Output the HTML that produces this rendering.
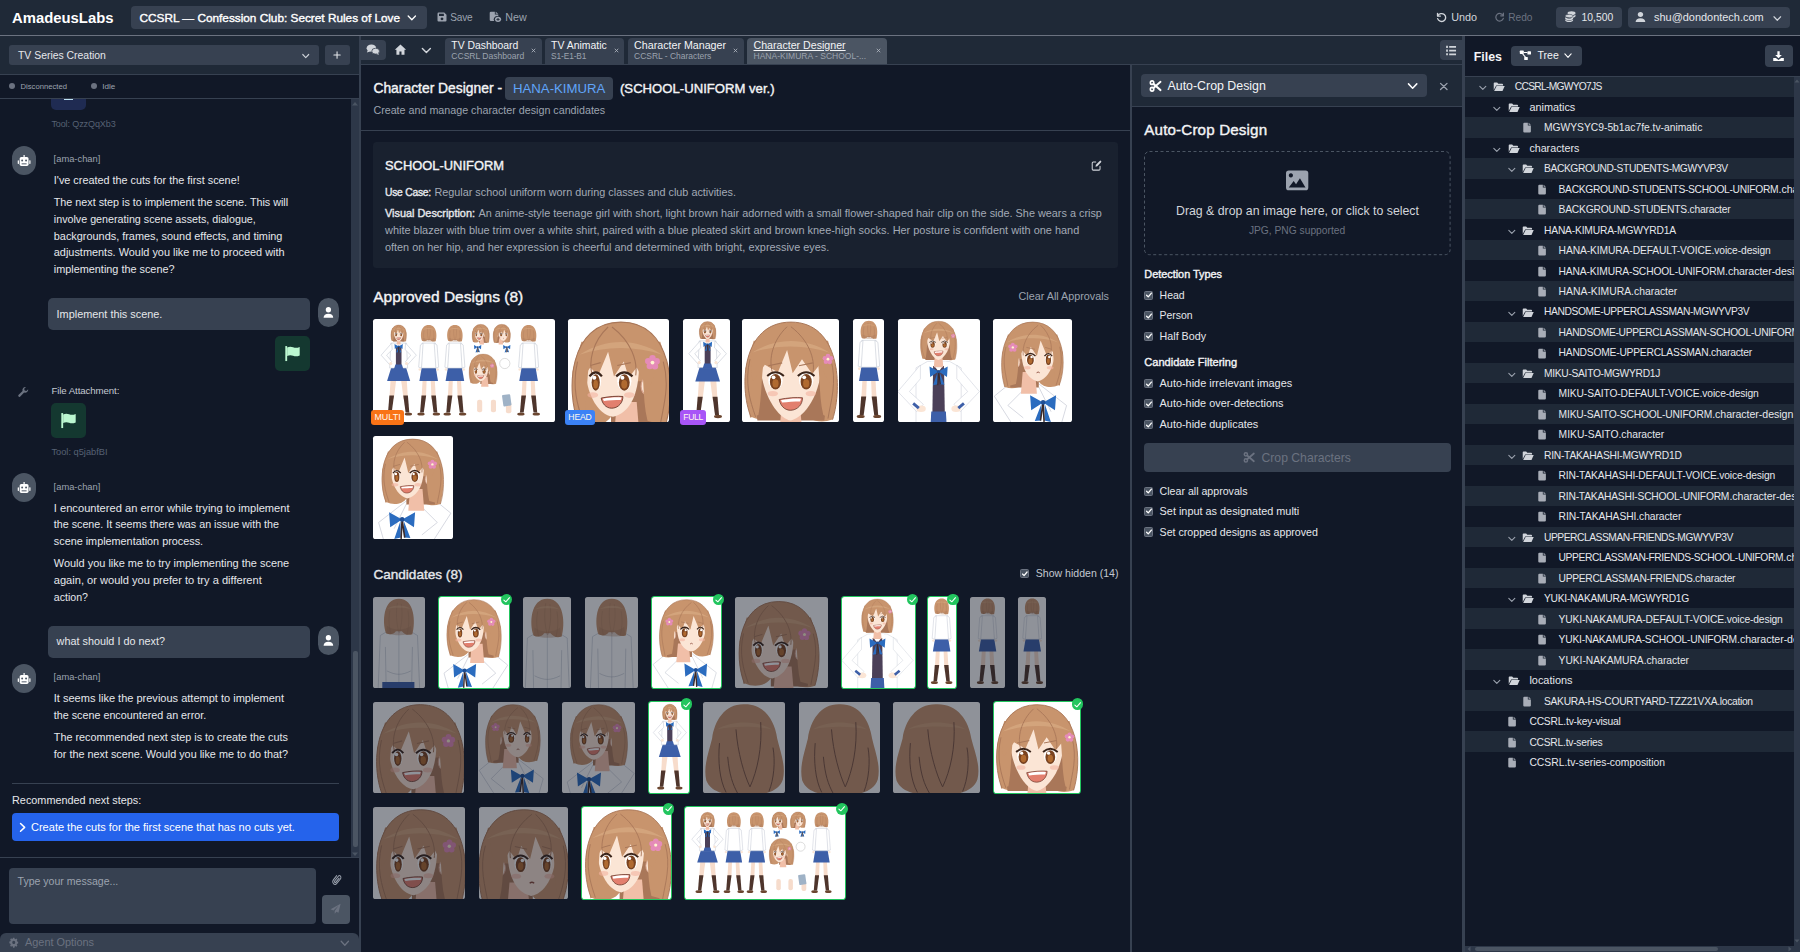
<!DOCTYPE html><html><head><meta charset="utf-8"><title>AmadeusLabs</title><style>
html,body{margin:0;padding:0;}body{width:1800px;height:952px;overflow:hidden;background:#111827;position:relative;font-family:"Liberation Sans",sans-serif;}#r{position:absolute;left:0;top:0;width:1800px;height:952px;overflow:hidden;}#r div,#r svg,#r span{position:absolute;box-sizing:border-box;}#r span{white-space:pre;line-height:1;}#r svg{overflow:visible;}#r .clip{overflow:hidden;}#r .clip svg{overflow:hidden;}
</style></head><body><div id="r">

<div style="left:0px;top:0px;width:1800px;height:35px;background:#1f2937;"></div>
<div style="left:0px;top:35px;width:1800px;height:1px;background:#6b7280;"></div>
<span style="left:12px;top:11.00px;font-size:14.85px;color:#fff;font-weight:700;">AmadeusLabs</span>
<div style="left:131px;top:6px;width:296px;height:23px;background:#374151;border-radius:4px;"></div>
<span style="left:139.5px;top:13.00px;font-size:11.80px;color:#fff;-webkit-text-stroke:0.38px currentColor;">CCSRL — Confession Club: Secret Rules of Love</span>
<svg style="left:405.77px;top:12.42px;color:#fff;" width="11.66" height="11.76" viewBox="0 0 16 16" preserveAspectRatio="none"><path d="M3 5.5 L8 10.5 L13 5.5" fill="none" stroke="currentColor" stroke-width="1.8" stroke-linecap="round" stroke-linejoin="round"/></svg>
<svg style="left:436.40px;top:10.80px;color:#9ca3af;" width="12.00" height="12.00" viewBox="0 0 16 16" preserveAspectRatio="none"><path d="M2 3.5A1.5 1.5 0 0 1 3.5 2H11l3 3v7.5A1.5 1.5 0 0 1 12.500 14h-9A1.5 1.5 0 0 1 2 12.500Z M4 3.500v3h6.500v-3Z M8 8.600a1.900 1.900 0 1 0 .01 0Z" fill="currentColor" fill-rule="evenodd"/></svg>
<span style="left:450.3px;top:13.00px;font-size:10.09px;color:#9ca3af;letter-spacing:-0.194px;">Save</span>
<svg style="left:488.39px;top:11.29px;color:#9ca3af;" width="13.71" height="11.41" viewBox="0 0 16 16" preserveAspectRatio="none"><path d="M2 2.500A1.500 1.500 0 0 1 3.500 1H8v4h4v2.200A4.600 4.600 0 0 0 7.200 14H3.500A1.500 1.500 0 0 1 2 12.500Z M9 1l3 3H9Z" fill="currentColor"/><circle cx="11.700" cy="11.700" r="3.600" fill="currentColor"/><path d="M11.700 9.800v3.800M9.800 11.700h3.800" stroke="#1f2937" stroke-width="1.200"/></svg>
<span style="left:505.3px;top:12.00px;font-size:10.70px;color:#9ca3af;">New</span>
<svg style="left:1435.04px;top:10.56px;color:#d1d5db;" width="12.67" height="12.21" viewBox="0 0 16 16" preserveAspectRatio="none"><path d="M3.200 3v3.600h3.600" fill="none" stroke="currentColor" stroke-width="1.700" stroke-linecap="round" stroke-linejoin="round"/><path d="M3.600 6.300A5.200 5.200 0 1 1 3.300 10" fill="none" stroke="currentColor" stroke-width="1.700" stroke-linecap="round"/></svg>
<span style="left:1451.2px;top:12.00px;font-size:10.80px;color:#d1d5db;letter-spacing:-0.000px;">Undo</span>
<svg style="left:1494.19px;top:10.83px;color:#6b7280;" width="11.73" height="11.69" viewBox="0 0 16 16" preserveAspectRatio="none"><path d="M12.800 3v3.600H9.200" fill="none" stroke="currentColor" stroke-width="1.700" stroke-linecap="round" stroke-linejoin="round"/><path d="M12.400 6.300A5.200 5.200 0 1 0 12.700 10" fill="none" stroke="currentColor" stroke-width="1.700" stroke-linecap="round"/></svg>
<span style="left:1508.2px;top:13.00px;font-size:10.17px;color:#6b7280;">Redo</span>
<div style="left:1556px;top:7px;width:66px;height:21px;background:#374151;border-radius:4px;"></div>
<svg style="left:1563.69px;top:10.26px;color:#d1d5db;" width="12.70" height="12.66" viewBox="0 0 16 16" preserveAspectRatio="none"><ellipse cx="9.500" cy="4" rx="5" ry="2.300" fill="currentColor"/><path d="M4.500 5.600c.8 1.200 2.700 1.900 5 1.900s4.200-.7 5-1.900V7.500c0 1.300-2.200 2.300-5 2.300s-5-1-5-2.300Z" fill="currentColor"/><path d="M1.500 9c.8 1.200 2.700 1.900 5 1.900s4.200-.7 5-1.900v1.700c0 1.300-2.200 2.300-5 2.300s-5-1-5-2.300Z" fill="currentColor"/><path d="M1.500 11.800c.8 1.200 2.700 1.900 5 1.900s4.200-.7 5-1.900v1c0 1.300-2.200 2.300-5 2.300s-5-1-5-2.300Z" fill="currentColor"/><ellipse cx="6.500" cy="7.600" rx="5" ry="2.100" fill="currentColor" stroke="#374151" stroke-width=".7"/></svg>
<span style="left:1581.5px;top:13.00px;font-size:10.37px;color:#e5e7eb;">10,500</span>
<div style="left:1628px;top:7px;width:162px;height:21px;background:#374151;border-radius:4px;"></div>
<svg style="left:1634.18px;top:11.22px;color:#d1d5db;" width="12.93" height="12.12" viewBox="0 0 16 16" preserveAspectRatio="none"><circle cx="8" cy="4.600" r="3.300" fill="currentColor"/><path d="M2 14.500c0-3.200 2.400-5 6-5s6 1.800 6 5Z" fill="currentColor"/></svg>
<span style="left:1654px;top:12.00px;font-size:10.95px;color:#e5e7eb;">shu@dondontech.com</span>
<svg style="left:1772.21px;top:12.62px;color:#d1d5db;" width="10.58" height="11.06" viewBox="0 0 16 16" preserveAspectRatio="none"><path d="M3 5.5 L8 10.5 L13 5.5" fill="none" stroke="currentColor" stroke-width="1.8" stroke-linecap="round" stroke-linejoin="round"/></svg>
<div style="left:0px;top:36px;width:359px;height:38px;background:#1f2937;"></div>
<div style="left:0px;top:74px;width:359px;height:1px;background:#374151;"></div>
<div style="left:9px;top:45px;width:310px;height:20px;background:#374151;border-radius:3px;"></div>
<span style="left:18px;top:51.00px;font-size:10.42px;color:#e5e7eb;">TV Series Creation</span>
<svg style="left:300.75px;top:50.79px;color:#d1d5db;" width="9.49" height="10.12" viewBox="0 0 16 16" preserveAspectRatio="none"><path d="M3 5.5 L8 10.5 L13 5.5" fill="none" stroke="currentColor" stroke-width="1.8" stroke-linecap="round" stroke-linejoin="round"/></svg>
<div style="left:325px;top:45px;width:25px;height:20px;background:#374151;border-radius:3px;"></div>
<svg style="left:331.94px;top:49.84px;color:#e5e7eb;" width="10.12" height="10.12" viewBox="0 0 16 16" preserveAspectRatio="none"><path d="M8 3v10M3 8h10" stroke="currentColor" stroke-width="1.700" stroke-linecap="round"/></svg>
<div style="left:0px;top:75px;width:359px;height:23px;background:#111827;"></div>
<div style="left:0px;top:98px;width:359px;height:1px;background:#374151;"></div>
<div style="left:9px;top:83px;width:6px;height:6px;background:#6b7280;border-radius:3px;"></div>
<span style="left:20.5px;top:83.00px;font-size:7.68px;color:#9ca3af;">Disconnected</span>
<div style="left:91px;top:83px;width:5.5px;height:5.5px;background:#6b7280;border-radius:3px;"></div>
<span style="left:102.3px;top:83.00px;font-size:8.06px;color:#9ca3af;">Idle</span>
<div style="left:51px;top:99px;width:35.2px;height:11px;background:#1f2b52;border-radius:0 0 5px 5px;"></div>
<div style="left:63.8px;top:99px;width:9.2px;height:1.2px;background:#bfe3f5;"></div>
<span style="left:51.4px;top:120.00px;font-size:9.02px;color:#566173;letter-spacing:-0.105px;">Tool: QzzQqXb3</span>
<div style="left:12px;top:146px;width:24px;height:29.4px;background:#4b5563;border-radius:12px;"></div>
<svg style="left:16.89px;top:154.04px;color:#fff;" width="14.22" height="15.30" viewBox="0 0 16 16" preserveAspectRatio="none"><path d="M7.300 1h1.400v2.200H7.300Z" fill="currentColor"/><rect x="3" y="3.200" width="10" height="9.300" rx="1.800" fill="currentColor"/><rect x=".8" y="6.500" width="1.400" height="4" rx=".5" fill="currentColor"/><rect x="13.800" y="6.500" width="1.400" height="4" rx=".5" fill="currentColor"/><circle cx="5.800" cy="6.800" r="1.100" fill="#4b5563"/><circle cx="10.200" cy="6.800" r="1.100" fill="#4b5563"/><rect x="5.200" y="9.800" width="5.600" height="1" fill="#4b5563"/></svg>
<span style="left:53.6px;top:155.00px;font-size:9.36px;color:#9ca3af;letter-spacing:-0.000px;">[ama-chan]</span>
<span style="left:53.8px;top:175.00px;font-size:10.85px;color:#e5e7eb;letter-spacing:-0.000px;">I&#x27;ve created the cuts for the first scene!</span>
<span style="left:53.8px;top:197.00px;font-size:10.77px;color:#e5e7eb;letter-spacing:0.000px;">The next step is to implement the scene. This will</span>
<span style="left:53.8px;top:214.00px;font-size:10.72px;color:#e5e7eb;">involve generating scene assets, dialogue,</span>
<span style="left:53.8px;top:231.00px;font-size:10.90px;color:#e5e7eb;">backgrounds, frames, sound effects, and timing</span>
<span style="left:53.8px;top:247.00px;font-size:10.91px;color:#e5e7eb;">adjustments. Would you like me to proceed with</span>
<span style="left:53.8px;top:264.00px;font-size:10.86px;color:#e5e7eb;">implementing the scene?</span>
<div style="left:48px;top:298px;width:262px;height:32px;background:#374151;border-radius:5px;"></div>
<span style="left:56.6px;top:309.00px;font-size:10.89px;color:#e5e7eb;letter-spacing:-0.000px;">Implement this scene.</span>
<div style="left:317.8px;top:297.7px;width:21.2px;height:29.6px;background:#4b5563;border-radius:10.6px;"></div>
<svg style="left:322.10px;top:306.44px;color:#fff;" width="12.80" height="13.09" viewBox="0 0 16 16" preserveAspectRatio="none"><circle cx="8" cy="4.600" r="3.300" fill="currentColor"/><path d="M2 14.500c0-3.200 2.400-5 6-5s6 1.800 6 5Z" fill="currentColor"/></svg>
<div style="left:275px;top:336px;width:35px;height:35px;background:#143830;border-radius:5px;"></div>
<svg style="left:283.30px;top:344.93px;color:#bbf7d0;" width="18.43" height="17.14" viewBox="0 0 16 16" preserveAspectRatio="none"><path d="M2 1h1.600v14H2Z" fill="currentColor"/><path d="M3.600 2.300c2-1 3.600-.8 5.200-.2s3.200.9 5.700-.3v8c-2.500 1.200-4.100.9-5.700.3s-3.200-.8-5.200.2Z" fill="currentColor"/></svg>
<svg style="left:16.78px;top:386.04px;color:#6b7280;" width="12.17" height="12.26" viewBox="0 0 16 16" preserveAspectRatio="none"><path d="M14.700 4.200a4 4 0 0 1-5.300 4.400L4 14a1.500 1.500 0 0 1-2.100-2.100l5.400-5.400A4 4 0 0 1 11.800 1.300L9.500 3.600l.5 2.400 2.400.5Z" fill="currentColor"/></svg>
<span style="left:51.4px;top:386.00px;font-size:9.70px;color:#c3c8d1;letter-spacing:-0.097px;">File Attachment:</span>
<div style="left:51px;top:403px;width:35px;height:35px;background:#143830;border-radius:5px;"></div>
<svg style="left:59.30px;top:411.93px;color:#bbf7d0;" width="18.43" height="17.14" viewBox="0 0 16 16" preserveAspectRatio="none"><path d="M2 1h1.600v14H2Z" fill="currentColor"/><path d="M3.600 2.300c2-1 3.600-.8 5.200-.2s3.200.9 5.700-.3v8c-2.500 1.200-4.100.9-5.700.3s-3.200-.8-5.200.2Z" fill="currentColor"/></svg>
<span style="left:51.4px;top:448.00px;font-size:9.28px;color:#566173;">Tool: q5jabfBI</span>
<div style="left:12px;top:473px;width:24px;height:29.4px;background:#4b5563;border-radius:12px;"></div>
<svg style="left:16.89px;top:481.04px;color:#fff;" width="14.22" height="15.30" viewBox="0 0 16 16" preserveAspectRatio="none"><path d="M7.300 1h1.400v2.200H7.300Z" fill="currentColor"/><rect x="3" y="3.200" width="10" height="9.300" rx="1.800" fill="currentColor"/><rect x=".8" y="6.500" width="1.400" height="4" rx=".5" fill="currentColor"/><rect x="13.800" y="6.500" width="1.400" height="4" rx=".5" fill="currentColor"/><circle cx="5.800" cy="6.800" r="1.100" fill="#4b5563"/><circle cx="10.200" cy="6.800" r="1.100" fill="#4b5563"/><rect x="5.200" y="9.800" width="5.600" height="1" fill="#4b5563"/></svg>
<span style="left:53.6px;top:483.00px;font-size:9.36px;color:#9ca3af;letter-spacing:-0.000px;">[ama-chan]</span>
<span style="left:53.8px;top:503.00px;font-size:11.13px;color:#e5e7eb;letter-spacing:0.004px;">I encountered an error while trying to implement</span>
<span style="left:53.8px;top:519.00px;font-size:10.73px;color:#e5e7eb;">the scene. It seems there was an issue with the</span>
<span style="left:53.8px;top:536.00px;font-size:10.84px;color:#e5e7eb;">scene implementation process.</span>
<span style="left:53.8px;top:558.00px;font-size:10.96px;color:#e5e7eb;">Would you like me to try implementing the scene</span>
<span style="left:53.8px;top:575.00px;font-size:11.08px;color:#e5e7eb;">again, or would you prefer to try a different</span>
<span style="left:53.8px;top:592.00px;font-size:10.62px;color:#e5e7eb;">action?</span>
<div style="left:48px;top:626px;width:262px;height:32px;background:#374151;border-radius:5px;"></div>
<span style="left:56.6px;top:636.00px;font-size:10.84px;color:#e5e7eb;letter-spacing:0.000px;">what should I do next?</span>
<div style="left:317.8px;top:625.7px;width:21.2px;height:29.6px;background:#4b5563;border-radius:10.6px;"></div>
<svg style="left:322.10px;top:634.44px;color:#fff;" width="12.80" height="13.09" viewBox="0 0 16 16" preserveAspectRatio="none"><circle cx="8" cy="4.600" r="3.300" fill="currentColor"/><path d="M2 14.500c0-3.200 2.400-5 6-5s6 1.800 6 5Z" fill="currentColor"/></svg>
<div style="left:12px;top:664px;width:24px;height:29.4px;background:#4b5563;border-radius:12px;"></div>
<svg style="left:16.89px;top:672.04px;color:#fff;" width="14.22" height="15.30" viewBox="0 0 16 16" preserveAspectRatio="none"><path d="M7.300 1h1.400v2.200H7.300Z" fill="currentColor"/><rect x="3" y="3.200" width="10" height="9.300" rx="1.800" fill="currentColor"/><rect x=".8" y="6.500" width="1.400" height="4" rx=".5" fill="currentColor"/><rect x="13.800" y="6.500" width="1.400" height="4" rx=".5" fill="currentColor"/><circle cx="5.800" cy="6.800" r="1.100" fill="#4b5563"/><circle cx="10.200" cy="6.800" r="1.100" fill="#4b5563"/><rect x="5.200" y="9.800" width="5.600" height="1" fill="#4b5563"/></svg>
<span style="left:53.6px;top:673.00px;font-size:9.36px;color:#9ca3af;letter-spacing:-0.000px;">[ama-chan]</span>
<span style="left:53.8px;top:693.00px;font-size:11.03px;color:#e5e7eb;letter-spacing:-0.000px;">It seems like the previous attempt to implement</span>
<span style="left:53.8px;top:710.00px;font-size:10.75px;color:#e5e7eb;">the scene encountered an error.</span>
<span style="left:53.8px;top:732.00px;font-size:10.80px;color:#e5e7eb;">The recommended next step is to create the cuts</span>
<span style="left:53.8px;top:749.00px;font-size:10.82px;color:#e5e7eb;">for the next scene. Would you like me to do that?</span>
<div style="left:12px;top:783px;width:327px;height:1px;background:#374151;"></div>
<span style="left:12px;top:795.00px;font-size:10.86px;color:#e5e7eb;">Recommended next steps:</span>
<div style="left:12px;top:813px;width:327px;height:28px;background:#2563eb;border-radius:4px;"></div>
<svg style="left:16.21px;top:820.93px;color:#fff;" width="13.18" height="12.75" viewBox="0 0 16 16" preserveAspectRatio="none"><path d="M5.5 3 L10.5 8 L5.5 13" fill="none" stroke="currentColor" stroke-width="1.8" stroke-linecap="round" stroke-linejoin="round"/></svg>
<span style="left:31px;top:822.00px;font-size:11.02px;color:#fff;">Create the cuts for the first scene that has no cuts yet.</span>
<div style="left:351px;top:99px;width:8px;height:759px;background:#2d3748;"></div>
<div style="left:353px;top:651px;width:4.5px;height:196px;background:#4b5563;border-radius:2px;"></div>
<svg style="left:351px;top:101px;" width="8" height="5" viewBox="0 0 8 5"><path d="M1 4.500 4 1l3 3.500Z" fill="#4b5563"/></svg>
<svg style="left:351px;top:852px;" width="8" height="5" viewBox="0 0 8 5"><path d="M1 .5 4 4l3-3.500Z" fill="#4b5563"/></svg>
<div style="left:0px;top:857px;width:359px;height:1px;background:#374151;"></div>
<div style="left:9px;top:868px;width:307px;height:56px;background:#374151;border-radius:4px;"></div>
<span style="left:17.6px;top:876.00px;font-size:10.54px;color:#9ca3af;letter-spacing:-0.000px;">Type your message...</span>
<svg style="left:331.63px;top:873.96px;color:#9ca3af;" width="9.83" height="12.36" viewBox="0 0 16 16" preserveAspectRatio="none"><path d="M11.500 5.500 6.300 10.700a1.300 1.300 0 0 1-1.900-1.900l6-6a2.400 2.400 0 0 1 3.400 3.400l-6.300 6.300a3.600 3.600 0 0 1-5.100-5.100l5.200-5.200" fill="none" stroke="currentColor" stroke-width="1.500" stroke-linecap="round"/></svg>
<div style="left:322px;top:895px;width:28px;height:29px;background:#4b5563;border-radius:4px;"></div>
<svg style="left:330.41px;top:903.27px;color:#6b7280;" width="11.07" height="11.68" viewBox="0 0 16 16" preserveAspectRatio="none"><path d="M15.300 1 .8 8.600l4.200 1.700 7.400-6.800-5.600 7.600v3.600l2.500-2.800 3 1.300Z" fill="currentColor"/></svg>
<div style="left:0px;top:933px;width:359px;height:19px;background:#374151;border-radius:6px 6px 0 0;"></div>
<svg style="left:9.24px;top:937.32px;color:#6b7280;" width="9.51" height="10.81" viewBox="0 0 16 16" preserveAspectRatio="none"><path d="M6.800 1h2.400l.4 1.800 1.200.5 1.600-1 1.700 1.700-1 1.600.5 1.200 1.800.4v2.400l-1.800.4-.5 1.200 1 1.600-1.700 1.700-1.600-1-1.200.5-.4 1.800H6.800l-.4-1.800-1.200-.5-1.600 1-1.700-1.700 1-1.600-.5-1.200L.6 9.200V6.800l1.800-.4.5-1.200-1-1.600 1.700-1.700 1.600 1 1.200-.5ZM8 5.500A2.500 2.500 0 1 0 8.010 5.500Z" fill="currentColor" fill-rule="evenodd"/></svg>
<span style="left:25px;top:937.00px;font-size:10.90px;color:#6b7280;">Agent Options</span>
<svg style="left:339.47px;top:937.35px;color:#6b7280;" width="11.66" height="12.71" viewBox="0 0 16 16" preserveAspectRatio="none"><path d="M3 5.5 L8 10.5 L13 5.5" fill="none" stroke="currentColor" stroke-width="1.8" stroke-linecap="round" stroke-linejoin="round"/></svg>
<div style="left:359px;top:36px;width:2px;height:916px;background:#374151;"></div>
<div style="left:361px;top:36px;width:1101px;height:28px;background:#1f2937;"></div>
<div style="left:361px;top:64px;width:1101px;height:1px;background:#374151;"></div>
<div style="left:361px;top:40px;width:25px;height:20px;background:#374151;border-radius:0 4px 4px 0;"></div>
<svg style="left:366.10px;top:43.42px;color:#d1d5db;" width="13.77" height="13.29" viewBox="0 0 16 16" preserveAspectRatio="none"><ellipse cx="6.300" cy="6.200" rx="5.600" ry="4.300" fill="currentColor"/><path d="M2.200 8.500 1 11.500l3.700-1.200Z" fill="currentColor"/><ellipse cx="11.200" cy="9.800" rx="4.500" ry="3.500" fill="currentColor" stroke="#374151" stroke-width=".9"/><path d="M13.800 12 15.200 14.300l-3.400-1Z" fill="currentColor"/></svg>
<svg style="left:393.89px;top:43.18px;color:#d1d5db;" width="12.91" height="13.51" viewBox="0 0 16 16" preserveAspectRatio="none"><path d="M8 1.800 1 8h2v6h3.700v-4h2.600v4H13V8h2Z" fill="currentColor"/></svg>
<svg style="left:419.93px;top:44.48px;color:#d1d5db;" width="12.75" height="12.94" viewBox="0 0 16 16" preserveAspectRatio="none"><path d="M3 5.5 L8 10.5 L13 5.5" fill="none" stroke="currentColor" stroke-width="1.8" stroke-linecap="round" stroke-linejoin="round"/></svg>
<div style="left:445px;top:38px;width:96.70000000000005px;height:26px;background:#374151;border-radius:4px 4px 0 0;"></div>
<span style="left:451.3px;top:41.00px;font-size:10.40px;color:#f3f4f6;">TV Dashboard</span>
<span style="left:451.3px;top:52.00px;font-size:8.55px;color:#9ca3af;">CCSRL Dashboard</span>
<svg style="left:531.1px;top:47.6px;" width="5" height="5" viewBox="0 0 10 10"><path d="M1.5 1.5 8.5 8.5M8.5 1.5 1.5 8.5" stroke="#b4bac4" stroke-width="1.600" fill="none"/></svg>
<div style="left:544.8px;top:38px;width:79.70000000000005px;height:26px;background:#374151;border-radius:4px 4px 0 0;"></div>
<span style="left:551.0999999999999px;top:41.00px;font-size:10.44px;color:#f3f4f6;">TV Animatic</span>
<span style="left:551.0999999999999px;top:52.00px;font-size:8.34px;color:#9ca3af;letter-spacing:-0.118px;">S1-E1-B1</span>
<svg style="left:613.9px;top:47.6px;" width="5" height="5" viewBox="0 0 10 10"><path d="M1.5 1.5 8.5 8.5M8.5 1.5 1.5 8.5" stroke="#b4bac4" stroke-width="1.600" fill="none"/></svg>
<div style="left:627.8px;top:38px;width:115.80000000000007px;height:26px;background:#374151;border-radius:4px 4px 0 0;"></div>
<span style="left:634.0999999999999px;top:40.00px;font-size:10.68px;color:#f3f4f6;">Character Manager</span>
<span style="left:634.0999999999999px;top:52.00px;font-size:8.46px;color:#9ca3af;">CCSRL - Characters</span>
<svg style="left:733.0px;top:47.6px;" width="5" height="5" viewBox="0 0 10 10"><path d="M1.5 1.5 8.5 8.5M8.5 1.5 1.5 8.5" stroke="#b4bac4" stroke-width="1.600" fill="none"/></svg>
<div style="left:747.2px;top:38px;width:139.5px;height:26px;background:#4b5563;border-radius:4px 4px 0 0;"></div>
<span style="left:753.5px;top:40.00px;font-size:10.64px;color:#f3f4f6;text-decoration:underline;text-underline-offset:1px;">Character Designer</span>
<span style="left:753.5px;top:52.00px;font-size:8.53px;color:#9ca3af;">HANA-KIMURA - SCHOOL-...</span>
<svg style="left:876.1px;top:47.6px;" width="5" height="5" viewBox="0 0 10 10"><path d="M1.5 1.5 8.5 8.5M8.5 1.5 1.5 8.5" stroke="#b4bac4" stroke-width="1.600" fill="none"/></svg>
<div style="left:1440px;top:40px;width:22px;height:20px;background:#374151;border-radius:4px 0 0 4px;"></div>
<svg style="left:1444.86px;top:42.55px;color:#d1d5db;" width="12.18" height="15.20" viewBox="0 0 16 16" preserveAspectRatio="none"><path d="M1.500 3h2.300v2.200H1.500Zm4 .2h9v1.800h-9ZM1.500 6.900h2.300v2.200H1.500Zm4 .2h9v1.800h-9ZM1.500 10.800h2.300V13H1.500Zm4 .2h9v1.800h-9Z" fill="currentColor"/></svg>
<span style="left:373.4px;top:82.00px;font-size:13.86px;color:#f3f4f6;-webkit-text-stroke:0.38px currentColor;">Character Designer -</span>
<div style="left:505px;top:77px;width:108px;height:23px;background:#374151;border-radius:4px;"></div>
<span style="left:513px;top:82.00px;font-size:13.20px;color:#60a5fa;letter-spacing:0.000px;">HANA-KIMURA</span>
<span style="left:620px;top:82.00px;font-size:13.13px;color:#f3f4f6;-webkit-text-stroke:0.38px currentColor;">(SCHOOL-UNIFORM ver.)</span>
<span style="left:373.4px;top:105.00px;font-size:10.72px;color:#9ca3af;letter-spacing:-0.000px;">Create and manage character design candidates</span>
<div style="left:361px;top:130px;width:769px;height:1px;background:#374151;"></div>
<div style="left:373px;top:142px;width:744.5px;height:126px;background:#19212f;border-radius:3.5px;"></div>
<span style="left:385px;top:160.00px;font-size:12.91px;color:#f3f4f6;-webkit-text-stroke:0.38px currentColor;">SCHOOL-UNIFORM</span>
<svg style="left:1090.69px;top:160.36px;color:#d1d5db;" width="10.86" height="11.31" viewBox="0 0 16 16" preserveAspectRatio="none"><path d="M12.800 1.300a1.400 1.400 0 0 1 2 2L9.300 8.800l-2.700.7.700-2.700Z" fill="currentColor"/><path d="M7 2.800H3.300A1.500 1.500 0 0 0 1.800 4.300v8.500a1.500 1.500 0 0 0 1.500 1.500h8.500a1.500 1.500 0 0 0 1.500-1.500V9" fill="none" stroke="currentColor" stroke-width="1.500" stroke-linecap="round"/></svg>
<span style="left:385px;top:188.00px;font-size:10.28px;color:#e5e7eb;-webkit-text-stroke:0.38px currentColor;letter-spacing:-0.221px;">Use Case:</span>
<span style="left:434.4px;top:187.00px;font-size:10.84px;color:#a3aab6;">Regular school uniform worn during classes and club activities.</span>
<span style="left:385px;top:208.00px;font-size:10.90px;color:#e5e7eb;-webkit-text-stroke:0.38px currentColor;">Visual Description:</span>
<span style="left:478.4px;top:208.00px;font-size:10.86px;color:#a3aab6;">An anime-style teenage girl with short, light brown hair adorned with a small flower-shaped hair clip on the side. She wears a crisp</span>
<span style="left:385px;top:225.00px;font-size:10.94px;color:#a3aab6;letter-spacing:0.000px;">white blazer with blue trim over a white shirt, paired with a blue pleated skirt and brown knee-high socks. Her posture is confident with one hand</span>
<span style="left:385px;top:242.00px;font-size:10.86px;color:#a3aab6;">often on her hip, and her expression is cheerful and determined with bright, expressive eyes.</span>
<span style="left:373.2px;top:289.00px;font-size:15.53px;color:#f3f4f6;-webkit-text-stroke:0.38px currentColor;">Approved Designs (8)</span>
<span style="left:1018.6px;top:291.00px;font-size:10.78px;color:#9ca3af;">Clear All Approvals</span>
<div class="clip" style="left:373.4px;top:318.5px;width:182px;height:103.6px;background:#fff;border-radius:2.600px;"><svg style="left:0;top:0" width="182" height="103.6" viewBox="0 0 182 103.6"><path fill="#f7dccb" d="M23.8 56.5L17.8 56.5L16.4 79.7L20.8 79.7Z"/><path fill="#4e352c" d="M21.0 76.4L16.4 76.4L15.0 93.6L18.7 93.6Z"/><ellipse cx="15.9" cy="95.0" rx="3.7" ry="1.6" fill="#6b4630"/><path fill="#f7dccb" d="M27.5 56.5L33.5 56.5L34.9 79.7L30.5 79.7Z"/><path fill="#4e352c" d="M30.3 76.4L34.9 76.4L36.3 93.6L32.6 93.6Z"/><ellipse cx="35.4" cy="95.0" rx="3.7" ry="1.6" fill="#6b4630"/><path fill="#3d5fa8" d="M19.2 45.4L32.1 45.4L37.2 62.1L14.1 62.1Z"/><path fill="#fff" stroke="#c5c9d4" stroke-width="0.6" d="M17.8 24.1L33.5 24.1L34.6 49.1L16.7 49.1Z"/><rect x="22.9" y="26.9" width="5.6" height="19.4" fill="#4b4058"/><path fill="#3d5fa8" d="M22.4 45.4L28.9 45.4L30.3 50.1L21.0 50.1Z"/><path fill="#fff" stroke="#c5c9d4" stroke-width="0.6" d="M18.7 24.1L8.1 36.2L16.4 45.4L18.7 42.6L13.6 36.2L19.2 30.6Z"/><circle cx="17.8" cy="44.5" r="1.5" fill="#fbe5d5"/><path fill="#fff" stroke="#c5c9d4" stroke-width="0.6" d="M32.6 24.1L43.3 36.2L34.9 45.4L32.6 42.6L37.7 36.2L32.1 30.6Z"/><circle cx="33.5" cy="44.5" r="1.5" fill="#fbe5d5"/><path fill="#2b6cbf" d="M25.7 27.4L21.5 25.0L21.8 29.9ZM25.7 27.4L29.8 25.0L29.5 29.9ZM25.2 27.8L23.2 33.6L25.2 33.2ZM26.2 27.8L28.3 33.4L26.3 33.2Z"/><path d="M25.7 27.4L25.3 33.6M25.7 27.4L26.5 33.2" stroke="#3b2a2a" stroke-width="0.6" fill="none"/><circle cx="25.7" cy="27.4" r="0.8" fill="#1f4f96"/><g><path fill="#c8946d" d="M19.0 21.8C16.9 16.9 17.4 6.0 25.7 6.0C33.9 6.0 34.4 16.9 32.7 22.3C30.3 23.1 28.5 22.3 27.2 20.9L24.1 20.9C23.2 22.3 21.0 22.8 19.0 21.8Z"/><path fill="#a97759" d="M19.1 15.3L32.2 15.3L31.3 22.5L20.1 22.5Z"/><path fill="#f1bfa8" d="M24.1 20.1L27.2 20.1L27.7 25.6L23.6 25.6Z"/><path fill="#fbe5d5" d="M20.5 10.6C20.1 17.2 23.3 22.1 25.7 22.5C28.2 21.8 31.3 17.6 30.8 10.6Z"/><path fill="#c8946d" d="M29.6 9.1C30.8 13.7 30.2 17.6 31.1 21.5L32.7 22.3L33.3 13.7L31.9 9.1Z"/><path fill="#c8946d" d="M21.8 9.1C20.5 13.7 21.0 17.6 20.2 21.5L18.8 22.0L18.0 13.7L19.4 9.1Z"/><path fill="#c8946d" d="M19.3 15.9C18.2 10.6 20.4 6.4 25.7 6.4C31.0 6.4 33.1 10.6 32.4 16.5L30.5 13.1L29.2 14.7L27.5 12.2L26.0 14.5L25.0 10.6L23.5 14.4L21.3 13.1Z"/><path fill="#ddb088" opacity=".55" d="M19.1 11.1C23.3 8.5 28.0 8.5 32.2 11.1C28.0 9.7 23.3 9.7 19.1 11.1Z"/><path fill="none" stroke="#a97759" stroke-width="0.3" d="M25.0 6.7C22.6 9.1 21.9 12.2 22.6 14.4M25.7 6.7C28.8 9.1 29.7 12.2 29.4 14.4M32.4 12.2C33.4 16.1 32.4 19.2 31.9 22.1M18.8 12.2C17.9 16.1 18.8 19.2 19.7 21.8M19.0 21.8C16.9 16.9 17.4 6.0 25.7 6.0C33.9 6.0 34.4 16.9 32.7 22.3"/><ellipse cx="23.1" cy="15.8" rx="1.2" ry="1.5" fill="#fff"/><ellipse cx="23.1" cy="16.0" rx="0.9" ry="1.3" fill="#7a4320"/><ellipse cx="23.1" cy="16.2" rx="0.5" ry="0.7" fill="#b06a30"/><path d="M21.7 15.0Q23.1 13.7 24.5 15.0" stroke="#3a241a" stroke-width="0.5" fill="none"/><circle cx="22.8" cy="15.2" r="0.3" fill="#fff"/><path d="M21.9 13.3L24.2 12.8" stroke="#a97759" stroke-width="0.4" fill="none"/><ellipse cx="28.2" cy="15.8" rx="1.2" ry="1.5" fill="#fff"/><ellipse cx="28.2" cy="16.0" rx="0.9" ry="1.3" fill="#7a4320"/><ellipse cx="28.2" cy="16.2" rx="0.5" ry="0.7" fill="#b06a30"/><path d="M26.8 15.0Q28.2 13.7 29.6 15.0" stroke="#3a241a" stroke-width="0.5" fill="none"/><circle cx="27.9" cy="15.2" r="0.3" fill="#fff"/><path d="M27.0 13.3L29.3 12.8" stroke="#a97759" stroke-width="0.4" fill="none"/><ellipse cx="22.6" cy="17.9" rx="0.9" ry="0.4" fill="#f3b3a0" opacity=".6"/><ellipse cx="29.0" cy="17.9" rx="0.9" ry="0.4" fill="#f3b3a0" opacity=".6"/><path fill="#e27f6e" stroke="#6b3a2c" stroke-width="0.3" d="M23.7 18.9C25.1 18.6 26.6 18.5 27.6 18.6C27.6 21.0 24.3 21.8 23.7 18.9Z"/><path fill="#fff" d="M24.0 19.0C25.1 18.8 26.6 18.7 27.4 18.8L27.2 19.3C26.2 19.3 25.1 19.3 24.2 19.5Z"/></g><path fill="#f7dccb" d="M53.8 56.5L49.9 56.5L48.5 79.7L52.9 79.7Z"/><path fill="#4e352c" d="M53.1 76.4L48.5 76.4L47.1 93.6L50.8 93.6Z"/><ellipse cx="48.0" cy="95.0" rx="3.7" ry="1.6" fill="#6b4630"/><path fill="#f7dccb" d="M57.5 56.5L61.5 56.5L62.9 79.7L58.5 79.7Z"/><path fill="#4e352c" d="M58.3 76.4L62.9 76.4L64.3 93.6L60.6 93.6Z"/><ellipse cx="63.4" cy="95.0" rx="3.7" ry="1.6" fill="#6b4630"/><path fill="#3d5fa8" d="M49.2 45.4L62.2 45.4L65.0 62.1L46.4 62.1Z"/><path fill="#fff" stroke="#c5c9d4" stroke-width="0.6" d="M49.0 24.1L62.4 24.1L63.5 49.1L47.9 49.1Z"/><path fill="#fff" stroke="#c5c9d4" stroke-width="0.6" d="M50.1 24.1L47.4 26.0L45.7 48.2L48.5 49.1Z"/><circle cx="46.8" cy="50.5" r="1.3" fill="#fbe5d5"/><path fill="#fff" stroke="#c5c9d4" stroke-width="0.6" d="M61.2 24.1L64.0 26.0L65.7 48.2L62.9 49.1Z"/><circle cx="64.6" cy="50.5" r="1.3" fill="#fbe5d5"/><g><path fill="#c8946d" d="M49.0 21.8C47.0 16.9 47.4 6.0 55.7 6.0C63.9 6.0 64.4 16.9 62.7 22.3C60.4 23.1 58.5 22.3 57.2 20.9L54.1 20.9C53.2 22.3 51.0 22.8 49.0 21.8Z"/><path fill="#a97759" opacity=".35" d="M49.5 18.4C52.6 20.7 58.8 20.7 61.9 18.4L62.5 22.1C58.8 23.1 52.6 23.1 49.2 21.8Z"/><path fill="none" stroke="#a97759" stroke-width="0.3" d="M54.9 7.8C53.8 13.7 54.8 18.4 55.7 21.5M56.9 8.3C57.9 13.7 56.9 18.4 56.0 21.5M51.0 11.4C50.1 16.1 50.7 19.2 51.5 22.1M60.4 11.4C61.3 16.1 60.7 19.2 59.9 22.5"/><path fill="#ddb088" opacity=".5" d="M49.5 10.6C53.4 8.6 58.0 8.6 61.9 10.6C58.0 9.9 53.4 9.9 49.5 10.6Z"/></g><path fill="#f7dccb" d="M80.0 56.5L76.1 56.5L74.7 79.7L79.1 79.7Z"/><path fill="#4e352c" d="M79.3 76.4L74.7 76.4L73.3 93.6L77.0 93.6Z"/><ellipse cx="74.2" cy="95.0" rx="3.7" ry="1.6" fill="#6b4630"/><path fill="#f7dccb" d="M83.8 56.5L87.7 56.5L89.1 79.7L84.7 79.7Z"/><path fill="#4e352c" d="M84.5 76.4L89.1 76.4L90.5 93.6L86.8 93.6Z"/><ellipse cx="89.6" cy="95.0" rx="3.7" ry="1.6" fill="#6b4630"/><path fill="#3d5fa8" d="M75.4 45.4L88.4 45.4L91.2 62.1L72.6 62.1Z"/><path fill="#fff" stroke="#c5c9d4" stroke-width="0.6" d="M75.2 24.1L88.6 24.1L89.7 49.1L74.1 49.1Z"/><path fill="#fff" stroke="#c5c9d4" stroke-width="0.6" d="M76.3 24.1L73.6 26.0L71.9 48.2L74.7 49.1Z"/><circle cx="73.0" cy="50.5" r="1.3" fill="#fbe5d5"/><path fill="#fff" stroke="#c5c9d4" stroke-width="0.6" d="M87.5 24.1L90.2 26.0L91.9 48.2L89.1 49.1Z"/><circle cx="90.8" cy="50.5" r="1.3" fill="#fbe5d5"/><g><path fill="#c8946d" d="M75.2 21.8C73.2 16.9 73.7 6.0 81.9 6.0C90.1 6.0 90.6 16.9 88.9 22.3C86.6 23.1 84.7 22.3 83.5 20.9L80.3 20.9C79.4 22.3 77.2 22.8 75.2 21.8Z"/><path fill="#a97759" opacity=".35" d="M75.7 18.4C78.8 20.7 85.0 20.7 88.1 18.4L88.7 22.1C85.0 23.1 78.8 23.1 75.4 21.8Z"/><path fill="none" stroke="#a97759" stroke-width="0.3" d="M81.1 7.8C80.0 13.7 81.0 18.4 81.9 21.5M83.1 8.3C84.1 13.7 83.1 18.4 82.2 21.5M77.2 11.4C76.3 16.1 76.9 19.2 77.7 22.1M86.6 11.4C87.5 16.1 86.9 19.2 86.1 22.5"/><path fill="#ddb088" opacity=".5" d="M75.7 10.6C79.6 8.6 84.2 8.6 88.1 10.6C84.2 9.9 79.6 9.9 75.7 10.6Z"/></g><path fill="#f7dccb" d="M153.8 56.5L149.8 56.5L148.4 79.7L152.8 79.7Z"/><path fill="#4e352c" d="M153.0 76.4L148.4 76.4L147.0 93.6L150.7 93.6Z"/><ellipse cx="147.9" cy="95.0" rx="3.7" ry="1.6" fill="#6b4630"/><path fill="#f7dccb" d="M157.5 56.5L161.4 56.5L162.8 79.7L158.4 79.7Z"/><path fill="#4e352c" d="M158.2 76.4L162.8 76.4L164.2 93.6L160.5 93.6Z"/><ellipse cx="163.3" cy="95.0" rx="3.7" ry="1.6" fill="#6b4630"/><path fill="#3d5fa8" d="M149.1 45.4L162.1 45.4L164.9 62.1L146.3 62.1Z"/><path fill="#fff" stroke="#c5c9d4" stroke-width="0.6" d="M148.9 24.1L162.3 24.1L163.4 49.1L147.8 49.1Z"/><path fill="#fff" stroke="#c5c9d4" stroke-width="0.6" d="M150.1 24.1L147.3 26.0L145.6 48.2L148.4 49.1Z"/><circle cx="146.7" cy="50.5" r="1.3" fill="#fbe5d5"/><path fill="#fff" stroke="#c5c9d4" stroke-width="0.6" d="M161.2 24.1L163.9 26.0L165.6 48.2L162.8 49.1Z"/><circle cx="164.5" cy="50.5" r="1.3" fill="#fbe5d5"/><g><path fill="#c8946d" d="M148.9 21.8C146.9 16.9 147.4 6.0 155.6 6.0C163.9 6.0 164.3 16.9 162.6 22.3C160.3 23.1 158.4 22.3 157.2 20.9L154.1 20.9C153.1 22.3 150.9 22.8 148.9 21.8Z"/><path fill="#a97759" opacity=".35" d="M149.4 18.4C152.5 20.7 158.7 20.7 161.8 18.4L162.5 22.1C158.7 23.1 152.5 23.1 149.1 21.8Z"/><path fill="none" stroke="#a97759" stroke-width="0.3" d="M154.8 7.8C153.7 13.7 154.7 18.4 155.6 21.5M156.9 8.3C157.8 13.7 156.9 18.4 155.9 21.5M150.9 11.4C150.0 16.1 150.6 19.2 151.4 22.1M160.3 11.4C161.2 16.1 160.6 19.2 159.8 22.5"/><path fill="#ddb088" opacity=".5" d="M149.4 10.6C153.3 8.6 157.9 8.6 161.8 10.6C157.9 9.9 153.3 9.9 149.4 10.6Z"/></g><path fill="#2b6cbf" d="M104.6 28.0L101.0 25.9L101.3 30.2ZM104.6 28.0L108.3 25.9L108.0 30.2ZM104.2 28.3L102.5 33.4L104.3 33.1ZM105.1 28.3L107.0 33.2L105.2 33.1Z"/><path d="M104.6 28.0L104.4 33.4M104.6 28.0L105.4 33.1" stroke="#3b2a2a" stroke-width="0.6" fill="none"/><circle cx="104.6" cy="28.0" r="0.7" fill="#1f4f96"/><g><path fill="#c8946d" d="M100.3 23.0C98.1 17.4 98.6 5.3 107.7 5.3C116.9 5.3 117.4 17.4 115.5 23.5C112.9 24.4 110.9 23.5 109.5 21.9L106.0 21.9C105.0 23.5 102.6 24.0 100.3 23.0Z"/><path fill="#a97759" d="M106.0 15.7L115.0 15.7L114.0 23.7L106.0 23.7Z"/><path fill="#f1bfa8" d="M107.1 19.3L110.5 19.3L111.0 25.4L106.5 25.4Z"/><path fill="#fbe5d5" d="M101.5 10.5C101.0 17.8 103.8 21.6 106.4 21.9C109.1 21.2 111.4 18.3 110.9 10.5Z"/><ellipse cx="112.2" cy="16.6" rx="1.0" ry="1.5" fill="#fbe5d5" stroke="#d9a58f" stroke-width="0.3"/><path fill="#c8946d" d="M110.7 8.8C112.1 14.0 111.4 18.3 112.4 22.6L115.5 23.5L116.2 14.0L114.7 8.8Z"/><path fill="#c8946d" d="M102.9 8.8C101.5 14.0 102.0 18.3 101.2 22.6L100.1 23.1L99.3 14.0L100.8 8.8Z"/><path fill="#c8946d" d="M100.1 16.4C99.4 10.5 101.9 5.9 107.7 5.9C113.6 5.9 116.0 10.5 112.6 17.1L110.5 13.3L109.1 15.0L108.3 12.3L106.5 14.9L105.5 10.5L103.8 14.7L102.4 13.3Z"/><path fill="#ddb088" opacity=".55" d="M100.5 11.0C105.2 8.1 110.3 8.1 115.0 11.0C110.3 9.5 105.2 9.5 100.5 11.0Z"/><path fill="none" stroke="#a97759" stroke-width="0.3" d="M105.5 6.2C102.7 8.8 102.0 12.3 102.7 14.7M106.2 6.2C109.6 8.8 110.7 12.3 110.3 14.7M115.2 12.3C116.4 16.6 115.2 20.0 114.7 23.3M100.1 12.3C99.1 16.6 100.1 20.0 101.2 23.0M100.3 23.0C98.1 17.4 98.6 5.3 107.7 5.3C116.9 5.3 117.4 17.4 115.5 23.5"/><ellipse cx="103.3" cy="15.7" rx="0.9" ry="1.6" fill="#fff"/><ellipse cx="103.3" cy="15.9" rx="0.7" ry="1.4" fill="#7a4320"/><ellipse cx="103.3" cy="16.2" rx="0.4" ry="0.8" fill="#b06a30"/><path d="M102.2 14.9Q103.3 13.5 104.4 14.9" stroke="#3a241a" stroke-width="0.5" fill="none"/><circle cx="103.1" cy="15.1" r="0.3" fill="#fff"/><path d="M102.4 12.9L104.2 12.4" stroke="#a97759" stroke-width="0.4" fill="none"/><ellipse cx="108.3" cy="15.7" rx="1.2" ry="1.6" fill="#fff"/><ellipse cx="108.3" cy="15.9" rx="1.0" ry="1.4" fill="#7a4320"/><ellipse cx="108.3" cy="16.2" rx="0.5" ry="0.8" fill="#b06a30"/><path d="M106.9 14.9Q108.3 13.5 109.8 14.9" stroke="#3a241a" stroke-width="0.5" fill="none"/><circle cx="108.0" cy="15.1" r="0.3" fill="#fff"/><path d="M107.1 12.9L109.5 12.4" stroke="#a97759" stroke-width="0.4" fill="none"/><ellipse cx="102.8" cy="18.1" rx="1.0" ry="0.5" fill="#f3b3a0" opacity=".6"/><ellipse cx="109.2" cy="18.1" rx="1.0" ry="0.5" fill="#f3b3a0" opacity=".6"/><path fill="#e27f6e" stroke="#6b3a2c" stroke-width="0.3" d="M104.3 18.7C105.6 18.4 107.1 18.3 108.1 18.4C108.1 20.7 104.9 21.4 104.3 18.7Z"/><path fill="#fff" d="M104.6 18.8C105.6 18.5 107.1 18.5 107.9 18.5L107.7 19.0C106.8 19.0 105.6 19.1 104.8 19.2Z"/></g><path fill="#2b6cbf" d="M133.8 28.0L130.1 25.9L130.4 30.2ZM133.8 28.0L137.4 25.9L137.1 30.2ZM133.3 28.3L131.6 33.4L133.4 33.1ZM134.2 28.3L136.1 33.2L134.4 33.1Z"/><path d="M133.8 28.0L133.5 33.4M133.8 28.0L134.5 33.1" stroke="#3b2a2a" stroke-width="0.6" fill="none"/><circle cx="133.8" cy="28.0" r="0.7" fill="#1f4f96"/><g transform="translate(257.7 0) scale(-1 1)"><path fill="#c8946d" d="M121.4 23.0C119.2 17.4 119.7 5.3 128.9 5.3C138.0 5.3 138.5 17.4 136.6 23.5C134.0 24.4 132.0 23.5 130.6 21.9L127.1 21.9C126.1 23.5 123.7 24.0 121.4 23.0Z"/><path fill="#a97759" d="M127.1 15.7L136.1 15.7L135.1 23.7L127.1 23.7Z"/><path fill="#f1bfa8" d="M128.2 19.3L131.6 19.3L132.1 25.4L127.6 25.4Z"/><path fill="#fbe5d5" d="M122.6 10.5C122.1 17.8 124.9 21.6 127.5 21.9C130.2 21.2 132.5 18.3 132.0 10.5Z"/><ellipse cx="133.4" cy="16.6" rx="1.0" ry="1.5" fill="#fbe5d5" stroke="#d9a58f" stroke-width="0.3"/><path fill="#c8946d" d="M131.8 8.8C133.2 14.0 132.5 18.3 133.5 22.6L136.6 23.5L137.3 14.0L135.8 8.8Z"/><path fill="#c8946d" d="M124.0 8.8C122.6 14.0 123.2 18.3 122.3 22.6L121.2 23.1L120.4 14.0L121.9 8.8Z"/><path fill="#c8946d" d="M121.2 16.4C120.6 10.5 123.0 5.9 128.9 5.9C134.7 5.9 137.2 10.5 133.7 17.1L131.6 13.3L130.2 15.0L129.4 12.3L127.6 14.9L126.6 10.5L124.9 14.7L123.5 13.3Z"/><path fill="#ddb088" opacity=".55" d="M121.6 11.0C126.3 8.1 131.4 8.1 136.1 11.0C131.4 9.5 126.3 9.5 121.6 11.0Z"/><path fill="none" stroke="#a97759" stroke-width="0.3" d="M126.6 6.2C123.8 8.8 123.2 12.3 123.8 14.7M127.3 6.2C130.8 8.8 131.8 12.3 131.4 14.7M136.3 12.3C137.5 16.6 136.3 20.0 135.8 23.3M121.2 12.3C120.2 16.6 121.2 20.0 122.3 23.0M121.4 23.0C119.2 17.4 119.7 5.3 128.9 5.3C138.0 5.3 138.5 17.4 136.6 23.5"/><ellipse cx="124.4" cy="15.7" rx="0.9" ry="1.6" fill="#fff"/><ellipse cx="124.4" cy="15.9" rx="0.7" ry="1.4" fill="#7a4320"/><ellipse cx="124.4" cy="16.2" rx="0.4" ry="0.8" fill="#b06a30"/><path d="M123.4 14.9Q124.4 13.5 125.5 14.9" stroke="#3a241a" stroke-width="0.5" fill="none"/><circle cx="124.2" cy="15.1" r="0.3" fill="#fff"/><path d="M123.5 12.9L125.3 12.4" stroke="#a97759" stroke-width="0.4" fill="none"/><ellipse cx="129.5" cy="15.7" rx="1.2" ry="1.6" fill="#fff"/><ellipse cx="129.5" cy="15.9" rx="1.0" ry="1.4" fill="#7a4320"/><ellipse cx="129.5" cy="16.2" rx="0.5" ry="0.8" fill="#b06a30"/><path d="M128.0 14.9Q129.5 13.5 130.9 14.9" stroke="#3a241a" stroke-width="0.5" fill="none"/><circle cx="129.1" cy="15.1" r="0.3" fill="#fff"/><path d="M128.2 12.9L130.6 12.4" stroke="#a97759" stroke-width="0.4" fill="none"/><ellipse cx="123.9" cy="18.1" rx="1.0" ry="0.5" fill="#f3b3a0" opacity=".6"/><ellipse cx="130.3" cy="18.1" rx="1.0" ry="0.5" fill="#f3b3a0" opacity=".6"/><path d="M126.9 19.5Q127.3 19.1 127.7 19.5" stroke="#8a4a3a" stroke-width="0.5" fill="none"/></g><g><path fill="#c8946d" d="M98.0 63.9C94.3 54.9 95.2 35.1 110.1 35.1C125.1 35.1 125.9 54.9 122.8 64.7C118.6 66.1 115.2 64.7 112.9 62.2L107.3 62.2C105.6 64.7 101.6 65.6 98.0 63.9Z"/><path fill="#a97759" d="M107.3 52.0L122.0 52.0L120.3 65.0L107.3 65.0Z"/><path fill="#f1bfa8" d="M109.0 58.0L114.6 58.0L115.5 67.8L108.1 67.8Z"/><path fill="#fbe5d5" d="M100.0 43.6C99.1 55.4 103.6 61.6 107.9 62.2C112.4 61.1 116.0 56.3 115.2 43.6Z"/><ellipse cx="117.4" cy="53.4" rx="1.6" ry="2.4" fill="#fbe5d5" stroke="#d9a58f" stroke-width="0.3"/><path fill="#c8946d" d="M114.9 40.7C117.2 49.2 116.0 56.3 117.7 63.3L122.8 64.7L123.9 49.2L121.4 40.7Z"/><path fill="#c8946d" d="M102.2 40.7C100.0 49.2 100.8 56.3 99.4 63.3L97.7 64.2L96.3 49.2L98.8 40.7Z"/><path fill="#c8946d" d="M97.7 53.2C96.6 43.6 100.5 36.0 110.1 36.0C119.7 36.0 123.7 43.6 118.0 54.3L114.6 48.1L112.4 50.9L111.0 46.4L108.1 50.6L106.4 43.6L103.6 50.3L101.4 48.1Z"/><path fill="#ddb088" opacity=".55" d="M98.3 44.4C105.9 39.6 114.3 39.6 122.0 44.4C114.3 41.9 105.9 41.9 98.3 44.4Z"/><path fill="none" stroke="#a97759" stroke-width="0.3" d="M106.4 36.5C101.9 40.7 100.8 46.4 101.9 50.3M107.6 36.5C113.2 40.7 114.9 46.4 114.3 50.3M122.2 46.4C124.2 53.4 122.2 59.1 121.4 64.4M97.7 46.4C96.0 53.4 97.7 59.1 99.4 63.9M98.0 63.9C94.3 54.9 95.2 35.1 110.1 35.1C125.1 35.1 125.9 54.9 122.8 64.7"/><ellipse cx="102.9" cy="52.0" rx="1.5" ry="2.7" fill="#fff"/><ellipse cx="102.9" cy="52.4" rx="1.2" ry="2.3" fill="#7a4320"/><ellipse cx="102.9" cy="52.9" rx="0.7" ry="1.3" fill="#b06a30"/><path d="M101.1 50.6Q102.9 48.4 104.7 50.6" stroke="#3a241a" stroke-width="0.6" fill="none"/><circle cx="102.5" cy="51.0" r="0.6" fill="#fff"/><path d="M101.4 47.5L104.3 46.7" stroke="#a97759" stroke-width="0.4" fill="none"/><ellipse cx="111.1" cy="52.0" rx="2.0" ry="2.7" fill="#fff"/><ellipse cx="111.1" cy="52.4" rx="1.6" ry="2.3" fill="#7a4320"/><ellipse cx="111.1" cy="52.9" rx="0.9" ry="1.3" fill="#b06a30"/><path d="M108.8 50.6Q111.1 48.4 113.4 50.6" stroke="#3a241a" stroke-width="0.6" fill="none"/><circle cx="110.6" cy="51.0" r="0.6" fill="#fff"/><path d="M109.1 47.5L113.0 46.7" stroke="#a97759" stroke-width="0.4" fill="none"/><ellipse cx="102.1" cy="56.0" rx="1.6" ry="0.8" fill="#f3b3a0" opacity=".6"/><ellipse cx="112.5" cy="56.0" rx="1.6" ry="0.8" fill="#f3b3a0" opacity=".6"/><path fill="#e27f6e" stroke="#6b3a2c" stroke-width="0.3" d="M104.5 56.8C106.6 56.4 109.1 56.2 110.7 56.4C110.7 60.1 105.4 61.3 104.5 56.8Z"/><path fill="#fff" d="M104.9 57.0C106.6 56.6 109.1 56.5 110.3 56.6L110.1 57.4C108.5 57.4 106.6 57.5 105.2 57.7Z"/><circle cx="120.3" cy="46.3" r="0.9" fill="#e58bb8"/><circle cx="119.9" cy="47.7" r="0.9" fill="#e58bb8"/><circle cx="118.4" cy="47.7" r="0.9" fill="#e58bb8"/><circle cx="117.9" cy="46.3" r="0.9" fill="#e58bb8"/><circle cx="119.2" cy="45.4" r="0.9" fill="#e58bb8"/><circle cx="119.1" cy="46.7" r="0.5" fill="#fff3d0"/></g><circle cx="131.8" cy="44.5" r="5.1" fill="#fff" stroke="#bbb" stroke-width=".5"/><rect x="104.1" y="80.8" width="5.1" height="12.4" rx="2" fill="#f6dccc"/><rect x="117.9" y="80.8" width="5.1" height="12.4" rx="2" fill="#f6dccc"/><rect x="132.9" y="82.9" width="5.5" height="11.4" rx="2" fill="#f6dccc"/><rect x="129.6" y="75.6" width="8.2" height="11.4" rx="1" fill="#9fb2c6" transform="rotate(-8 133.8 80.8)"/></svg></div>
<div class="clip" style="left:567.7px;top:318.5px;width:101.7px;height:103.6px;background:#fff;border-radius:2.600px;"><svg style="left:0;top:0" width="101.7" height="103.6" viewBox="0 0 101.7 103.6"><g><path fill="#c8946d" d="M10.5 103.7C-2.4 72.2 0.6 3.1 52.9 3.1C105.2 3.1 108.1 72.2 97.3 106.7C82.5 111.6 70.6 106.7 62.7 97.8L43.0 97.8C37.1 106.7 23.3 109.6 10.5 103.7Z"/><path fill="#a97759" d="M43.0 62.3L94.3 62.3L88.4 107.7L43.0 107.7Z"/><path fill="#f1bfa8" d="M48.9 83.0L68.7 83.0L71.6 117.5L46.0 117.5Z"/><path fill="#fbe5d5" d="M17.4 32.7C14.4 74.1 30.2 95.8 45.0 97.8C60.8 93.9 73.6 77.1 70.6 32.7Z"/><ellipse cx="78.5" cy="67.2" rx="5.4" ry="8.4" fill="#fbe5d5" stroke="#d9a58f" stroke-width="1.1"/><path fill="#c8946d" d="M69.7 22.8C77.5 52.4 73.6 77.1 79.5 101.8L97.3 106.7L101.2 52.4L92.3 22.8Z"/><path fill="#c8946d" d="M25.3 22.8C17.4 52.4 20.3 77.1 15.4 101.8L9.5 104.7L4.5 52.4L13.4 22.8Z"/><path fill="#c8946d" d="M9.5 66.2C5.5 32.7 19.3 6.1 52.9 6.1C86.4 6.1 100.2 32.7 80.5 70.2L68.7 48.5L60.8 58.4L55.8 42.6L46.0 57.4L40.1 32.7L30.2 56.4L22.3 48.5Z"/><path fill="#ddb088" opacity=".55" d="M11.5 35.7C38.1 18.9 67.7 18.9 94.3 35.7C67.7 26.8 38.1 26.8 11.5 35.7Z"/><path fill="none" stroke="#a97759" stroke-width="1.1" d="M40.1 8.0C24.3 22.8 20.3 42.6 24.3 56.4M44.0 8.0C63.7 22.8 69.7 42.6 67.7 56.4M95.3 42.6C102.2 67.2 95.3 87.0 92.3 105.7M9.5 42.6C3.6 67.2 9.5 87.0 15.4 103.7M10.5 103.7C-2.4 72.2 0.6 3.1 52.9 3.1C105.2 3.1 108.1 72.2 97.3 106.7"/><ellipse cx="27.7" cy="62.3" rx="5.4" ry="9.4" fill="#fff"/><ellipse cx="27.7" cy="63.5" rx="4.1" ry="8.2" fill="#7a4320"/><ellipse cx="27.7" cy="65.3" rx="2.3" ry="4.4" fill="#b06a30"/><path d="M21.5 57.4Q27.7 49.5 33.9 57.4" stroke="#3a241a" stroke-width="2.2" fill="none"/><circle cx="26.3" cy="58.8" r="2.0" fill="#fff"/><path d="M22.3 46.5L32.7 43.6" stroke="#a97759" stroke-width="1.2" fill="none"/><ellipse cx="56.3" cy="62.3" rx="7.1" ry="9.4" fill="#fff"/><ellipse cx="56.3" cy="63.5" rx="5.4" ry="8.2" fill="#7a4320"/><ellipse cx="56.3" cy="65.3" rx="3.0" ry="4.4" fill="#b06a30"/><path d="M48.2 57.4Q56.3 49.5 64.5 57.4" stroke="#3a241a" stroke-width="2.2" fill="none"/><circle cx="54.4" cy="58.8" r="2.0" fill="#fff"/><path d="M49.3 46.5L62.8 43.6" stroke="#a97759" stroke-width="1.2" fill="none"/><ellipse cx="24.8" cy="76.1" rx="5.4" ry="2.8" fill="#f3b3a0" opacity=".6"/><ellipse cx="61.3" cy="76.1" rx="5.4" ry="2.8" fill="#f3b3a0" opacity=".6"/><path fill="#e27f6e" stroke="#6b3a2c" stroke-width="0.9" d="M33.2 79.1C40.8 77.5 49.4 76.9 54.9 77.5C54.9 90.5 36.4 94.9 33.2 79.1Z"/><path fill="#fff" d="M34.8 79.7C40.8 78.4 49.4 77.9 53.6 78.4L52.7 81.0C47.3 81.0 40.8 81.4 35.9 82.0Z"/><circle cx="88.7" cy="42.2" r="3.2" fill="#e58bb8"/><circle cx="87.0" cy="47.2" r="3.2" fill="#e58bb8"/><circle cx="81.8" cy="47.1" r="3.2" fill="#e58bb8"/><circle cx="80.2" cy="42.1" r="3.2" fill="#e58bb8"/><circle cx="84.5" cy="39.1" r="3.2" fill="#e58bb8"/><circle cx="84.5" cy="43.6" r="1.9" fill="#fff3d0"/></g></svg></div>
<div class="clip" style="left:682.7px;top:318.5px;width:46.9px;height:103.6px;background:#fff;border-radius:2.600px;"><svg style="left:0;top:0" width="46.9" height="103.6" viewBox="0 0 46.9 103.6"><path fill="#f7dccb" d="M22.6 56.5L16.2 56.5L14.7 81.2L19.5 81.2Z"/><path fill="#4e352c" d="M19.7 77.8L14.7 77.8L13.2 96.1L17.2 96.1Z"/><ellipse cx="14.2" cy="97.5" rx="4.0" ry="1.7" fill="#6b4630"/><path fill="#f7dccb" d="M26.6 56.5L33.0 56.5L34.5 81.2L29.8 81.2Z"/><path fill="#4e352c" d="M29.6 77.8L34.5 77.8L36.0 96.1L32.0 96.1Z"/><ellipse cx="35.0" cy="97.5" rx="4.0" ry="1.7" fill="#6b4630"/><path fill="#3d5fa8" d="M17.7 44.6L31.5 44.6L37.0 62.4L12.3 62.4Z"/><path fill="#fff" stroke="#c5c9d4" stroke-width="0.6" d="M16.2 21.9L33.0 21.9L34.2 48.6L15.0 48.6Z"/><rect x="21.7" y="24.8" width="5.9" height="20.8" fill="#4b4058"/><path fill="#3d5fa8" d="M21.2 44.6L28.1 44.6L29.6 49.6L19.7 49.6Z"/><path fill="#fff" stroke="#c5c9d4" stroke-width="0.6" d="M17.2 21.9L5.8 34.7L14.7 44.6L17.2 41.6L11.8 34.7L17.7 28.8Z"/><circle cx="16.2" cy="43.6" r="1.6" fill="#fbe5d5"/><path fill="#fff" stroke="#c5c9d4" stroke-width="0.6" d="M32.0 21.9L43.4 34.7L34.5 44.6L32.0 41.6L37.5 34.7L31.5 28.8Z"/><circle cx="33.0" cy="43.6" r="1.6" fill="#fbe5d5"/><path fill="#2b6cbf" d="M24.6 25.3L20.2 22.8L20.5 28.0ZM24.6 25.3L29.1 22.8L28.7 28.0ZM24.1 25.8L22.0 32.0L24.2 31.6ZM25.2 25.8L27.5 31.7L25.3 31.6Z"/><path d="M24.6 25.3L24.3 32.0M24.6 25.3L25.5 31.6" stroke="#3b2a2a" stroke-width="0.6" fill="none"/><circle cx="24.6" cy="25.3" r="0.8" fill="#1f4f96"/><g><path fill="#c8946d" d="M17.5 19.4C15.3 14.1 15.8 2.5 24.6 2.5C33.4 2.5 33.9 14.1 32.1 19.9C29.6 20.8 27.6 19.9 26.3 18.4L23.0 18.4C22.0 19.9 19.6 20.4 17.5 19.4Z"/><path fill="#a97759" d="M17.6 12.4L31.6 12.4L30.6 20.1L18.6 20.1Z"/><path fill="#f1bfa8" d="M23.0 17.6L26.3 17.6L26.8 23.4L22.5 23.4Z"/><path fill="#fbe5d5" d="M19.1 7.5C18.6 14.4 22.1 19.8 24.6 20.1C27.3 19.4 30.6 14.9 30.1 7.5Z"/><path fill="#c8946d" d="M28.8 5.8C30.1 10.8 29.4 14.9 30.4 19.1L32.1 19.9L32.8 10.8L31.3 5.8Z"/><path fill="#c8946d" d="M20.5 5.8C19.1 10.8 19.6 14.9 18.8 19.1L17.3 19.6L16.5 10.8L18.0 5.8Z"/><path fill="#c8946d" d="M17.8 13.1C16.6 7.5 19.0 3.0 24.6 3.0C30.3 3.0 32.6 7.5 31.8 13.8L29.8 10.1L28.4 11.8L26.6 9.1L25.0 11.6L24.0 7.5L22.3 11.4L20.0 10.1Z"/><path fill="#ddb088" opacity=".55" d="M17.6 8.0C22.1 5.1 27.1 5.1 31.6 8.0C27.1 6.5 22.1 6.5 17.6 8.0Z"/><path fill="none" stroke="#a97759" stroke-width="0.3" d="M24.0 3.3C21.3 5.8 20.6 9.1 21.3 11.4M24.6 3.3C27.9 5.8 28.9 9.1 28.6 11.4M31.8 9.1C32.9 13.3 31.8 16.6 31.3 19.8M17.3 9.1C16.3 13.3 17.3 16.6 18.3 19.4M17.5 19.4C15.3 14.1 15.8 2.5 24.6 2.5C33.4 2.5 33.9 14.1 32.1 19.9"/><ellipse cx="21.9" cy="12.9" rx="1.3" ry="1.6" fill="#fff"/><ellipse cx="21.9" cy="13.1" rx="1.0" ry="1.4" fill="#7a4320"/><ellipse cx="21.9" cy="13.4" rx="0.5" ry="0.7" fill="#b06a30"/><path d="M20.4 12.1Q21.9 10.8 23.4 12.1" stroke="#3a241a" stroke-width="0.5" fill="none"/><circle cx="21.5" cy="12.4" r="0.3" fill="#fff"/><path d="M20.6 10.3L23.1 9.8" stroke="#a97759" stroke-width="0.4" fill="none"/><ellipse cx="27.4" cy="12.9" rx="1.3" ry="1.6" fill="#fff"/><ellipse cx="27.4" cy="13.1" rx="1.0" ry="1.4" fill="#7a4320"/><ellipse cx="27.4" cy="13.4" rx="0.5" ry="0.7" fill="#b06a30"/><path d="M25.9 12.1Q27.4 10.8 28.9 12.1" stroke="#3a241a" stroke-width="0.5" fill="none"/><circle cx="27.0" cy="12.4" r="0.3" fill="#fff"/><path d="M26.1 10.3L28.6 9.8" stroke="#a97759" stroke-width="0.4" fill="none"/><ellipse cx="21.4" cy="15.3" rx="0.9" ry="0.5" fill="#f3b3a0" opacity=".6"/><ellipse cx="28.2" cy="15.3" rx="0.9" ry="0.5" fill="#f3b3a0" opacity=".6"/><path fill="#e27f6e" stroke="#6b3a2c" stroke-width="0.3" d="M22.5 16.3C24.0 16.0 25.7 15.9 26.7 16.0C26.7 18.5 23.2 19.3 22.5 16.3Z"/><path fill="#fff" d="M22.9 16.4C24.0 16.2 25.7 16.1 26.5 16.2L26.3 16.7C25.2 16.7 24.0 16.8 23.1 16.9Z"/></g></svg></div>
<div class="clip" style="left:741.8px;top:318.5px;width:97.7px;height:103.6px;background:#fff;border-radius:2.600px;"><svg style="left:0;top:0" width="97.7" height="103.6" viewBox="0 0 97.7 103.6"><g><path fill="#c8946d" d="M8.9 97.8C-3.1 68.1 -0.3 3.1 48.9 3.1C98.0 3.1 100.8 68.1 90.6 100.6C76.7 105.2 65.6 100.6 58.1 92.2L39.6 92.2C34.0 100.6 21.0 103.3 8.9 97.8Z"/><path fill="#a97759" d="M9.9 58.8L87.8 58.8L82.3 101.5L15.4 101.5Z"/><path fill="#f1bfa8" d="M39.6 87.6L58.1 87.6L60.9 120.1L36.8 120.1Z"/><path fill="#fbe5d5" d="M18.2 31.0C15.4 69.9 34.9 99.6 48.9 101.5C63.7 97.8 82.3 72.7 79.5 31.0Z"/><path fill="#c8946d" d="M72.1 21.7C79.5 49.5 75.8 72.7 81.3 95.9L90.6 100.6L94.3 49.5L86.0 21.7Z"/><path fill="#c8946d" d="M25.6 21.7C18.2 49.5 21.0 72.7 16.4 95.9L8.0 98.7L3.4 49.5L11.7 21.7Z"/><path fill="#c8946d" d="M10.8 62.5C4.3 31.0 17.3 5.9 48.9 5.9C80.4 5.9 93.4 31.0 88.8 66.2L77.6 45.8L70.2 55.1L60.0 40.2L50.7 54.2L45.1 31.0L35.9 53.2L22.9 45.8Z"/><path fill="#ddb088" opacity=".55" d="M9.9 33.7C34.9 18.0 62.8 18.0 87.8 33.7C62.8 25.4 34.9 25.4 9.9 33.7Z"/><path fill="none" stroke="#a97759" stroke-width="1.0" d="M45.1 7.7C30.3 21.7 26.6 40.2 30.3 53.2M48.9 7.7C67.4 21.7 73.0 40.2 71.1 53.2M88.8 40.2C95.3 63.4 88.8 82.0 86.0 99.6M8.0 40.2C2.4 63.4 8.0 82.0 13.6 97.8M8.9 97.8C-3.1 68.1 -0.3 3.1 48.9 3.1C98.0 3.1 100.8 68.1 90.6 100.6"/><ellipse cx="33.5" cy="61.6" rx="7.2" ry="8.8" fill="#fff"/><ellipse cx="33.5" cy="62.7" rx="5.6" ry="7.7" fill="#7a4320"/><ellipse cx="33.5" cy="64.4" rx="3.1" ry="4.2" fill="#b06a30"/><path d="M25.2 56.9Q33.5 49.5 41.9 56.9" stroke="#3a241a" stroke-width="2.0" fill="none"/><circle cx="31.6" cy="58.3" r="1.9" fill="#fff"/><path d="M26.3 46.7L40.2 43.9" stroke="#a97759" stroke-width="1.1" fill="none"/><ellipse cx="64.2" cy="61.6" rx="7.2" ry="8.8" fill="#fff"/><ellipse cx="64.2" cy="62.7" rx="5.6" ry="7.7" fill="#7a4320"/><ellipse cx="64.2" cy="64.4" rx="3.1" ry="4.2" fill="#b06a30"/><path d="M55.8 56.9Q64.2 49.5 72.5 56.9" stroke="#3a241a" stroke-width="2.0" fill="none"/><circle cx="62.2" cy="58.3" r="1.9" fill="#fff"/><path d="M56.9 46.7L70.8 43.9" stroke="#a97759" stroke-width="1.1" fill="none"/><ellipse cx="30.8" cy="74.6" rx="5.1" ry="2.6" fill="#f3b3a0" opacity=".6"/><ellipse cx="68.8" cy="74.6" rx="5.1" ry="2.6" fill="#f3b3a0" opacity=".6"/><path fill="#e27f6e" stroke="#6b3a2c" stroke-width="0.8" d="M37.2 80.5C45.4 78.8 54.7 78.2 60.5 78.8C60.5 92.7 40.7 97.3 37.2 80.5Z"/><path fill="#fff" d="M39.0 81.1C45.4 79.7 54.7 79.2 59.1 79.7L58.1 82.5C52.3 82.5 45.4 82.9 40.1 83.6Z"/><circle cx="89.1" cy="39.3" r="2.3" fill="#e58bb8"/><circle cx="87.8" cy="42.9" r="2.3" fill="#e58bb8"/><circle cx="84.0" cy="42.8" r="2.3" fill="#e58bb8"/><circle cx="82.9" cy="39.2" r="2.3" fill="#e58bb8"/><circle cx="86.0" cy="37.0" r="2.3" fill="#e58bb8"/><circle cx="86.0" cy="40.2" r="1.4" fill="#fff3d0"/></g></svg></div>
<div class="clip" style="left:852.6px;top:318.5px;width:31.9px;height:103.6px;background:#fff;border-radius:2.600px;"><svg style="left:0;top:0" width="31.9" height="103.6" viewBox="0 0 31.9 103.6"><path fill="#f7dccb" d="M14.0 56.2L9.7 56.2L8.2 81.0L13.0 81.0Z"/><path fill="#4e352c" d="M13.2 77.5L8.2 77.5L6.7 95.9L10.7 95.9Z"/><ellipse cx="7.7" cy="97.4" rx="4.0" ry="1.7" fill="#6b4630"/><path fill="#f7dccb" d="M17.9 56.2L22.2 56.2L23.7 81.0L18.9 81.0Z"/><path fill="#4e352c" d="M18.7 77.5L23.7 77.5L25.2 95.9L21.2 95.9Z"/><ellipse cx="24.2" cy="97.4" rx="4.0" ry="1.7" fill="#6b4630"/><path fill="#3d5fa8" d="M9.0 44.2L22.9 44.2L25.9 62.1L6.0 62.1Z"/><path fill="#fff" stroke="#c5c9d4" stroke-width="0.6" d="M8.8 21.3L23.1 21.3L24.3 48.2L7.6 48.2Z"/><path fill="#fff" stroke="#c5c9d4" stroke-width="0.6" d="M10.0 21.3L7.0 23.3L5.2 47.2L8.2 48.2Z"/><circle cx="6.4" cy="49.7" r="1.4" fill="#fbe5d5"/><path fill="#fff" stroke="#c5c9d4" stroke-width="0.6" d="M21.9 21.3L24.9 23.3L26.7 47.2L23.7 48.2Z"/><circle cx="25.5" cy="49.7" r="1.4" fill="#fbe5d5"/><g><path fill="#c8946d" d="M8.8 18.9C6.6 13.5 7.1 1.8 15.9 1.8C24.8 1.8 25.3 13.5 23.5 19.4C21.0 20.2 19.0 19.4 17.6 17.9L14.3 17.9C13.3 19.4 10.9 19.9 8.8 18.9Z"/><path fill="#a97759" opacity=".35" d="M9.3 15.2C12.6 17.7 19.3 17.7 22.6 15.2L23.3 19.2C19.3 20.2 12.6 20.2 8.9 18.9Z"/><path fill="none" stroke="#a97759" stroke-width="0.3" d="M15.1 3.9C13.9 10.2 14.9 15.2 15.9 18.6M17.3 4.4C18.3 10.2 17.3 15.2 16.3 18.6M10.9 7.7C9.9 12.7 10.6 16.1 11.4 19.2M21.0 7.7C22.0 12.7 21.3 16.1 20.5 19.6"/><path fill="#ddb088" opacity=".5" d="M9.3 6.9C13.4 4.7 18.5 4.7 22.6 6.9C18.5 6.0 13.4 6.0 9.3 6.9Z"/></g></svg></div>
<div class="clip" style="left:897.5px;top:318.5px;width:82.8px;height:103.6px;background:#fff;border-radius:2.600px;"><svg style="left:0;top:0" width="82.8" height="103.6" viewBox="0 0 82.8 103.6"><rect x="22.4" y="94.5" width="36.4" height="36.4" fill="#3d5fa8"/><path fill="#fff" stroke="#c5c9d4" stroke-width="0.5" d="M29.6 42.4L51.5 42.4L63.2 48.9L63.2 107.2L18.0 107.2L18.0 48.9Z"/><path fill="#fff" stroke="#c5c9d4" stroke-width="0.5" d="M22.4 46.0L-0.2 72.6L18.7 92.6L25.3 85.3L11.4 72.6L22.4 59.8Z"/><ellipse cx="23.1" cy="89.7" rx="4.7" ry="3.3" fill="#fbe5d5"/><rect x="14.3" y="85.3" width="7.3" height="2.9" fill="#3d5fa8" transform="rotate(40 18.0 86.8)"/><path fill="#fff" stroke="#c5c9d4" stroke-width="0.5" d="M58.8 46.0L81.4 72.6L62.4 92.6L55.9 85.3L69.7 72.6L58.8 59.8Z"/><ellipse cx="58.1" cy="89.7" rx="4.7" ry="3.3" fill="#fbe5d5"/><rect x="59.5" y="85.3" width="7.3" height="2.9" fill="#3d5fa8" transform="rotate(-40 63.2 86.8)"/><path fill="#4b4058" d="M35.1 47.1L46.0 47.1L46.8 93.4L34.4 93.4Z"/><path fill="#3d5fa8" d="M33.3 92.6L47.9 92.6L49.3 118.1L31.8 118.1Z"/><path fill="#fff" d="M32.6 42.4L40.6 52.6L48.6 42.4Z"/><path fill="#2b6cbf" d="M40.6 52.6L31.5 47.5L32.2 58.0ZM40.6 52.6L49.7 47.5L49.0 58.0ZM39.5 53.5L35.1 66.2L39.7 65.3ZM41.7 53.5L46.4 65.7L42.0 65.3Z"/><path d="M40.6 52.6L39.8 66.2M40.6 52.6L42.4 65.3" stroke="#3b2a2a" stroke-width="1.1" fill="none"/><circle cx="40.6" cy="52.6" r="1.6" fill="#1f4f96"/><g><path fill="#c8946d" d="M24.9 39.4C20.2 27.8 21.3 2.3 40.6 2.3C59.9 2.3 61.0 27.8 57.0 40.5C51.5 42.4 47.1 40.5 44.2 37.3L36.9 37.3C34.7 40.5 29.6 41.6 24.9 39.4Z"/><path fill="#a97759" d="M25.3 24.1L55.9 24.1L53.7 40.9L27.5 40.9Z"/><path fill="#f1bfa8" d="M36.9 35.4L44.2 35.4L45.3 48.2L35.8 48.2Z"/><path fill="#fbe5d5" d="M28.5 13.2C27.5 28.5 35.1 40.2 40.6 40.9C46.4 39.4 53.7 29.6 52.6 13.2Z"/><path fill="#c8946d" d="M49.7 9.6C52.6 20.5 51.1 29.6 53.3 38.7L57.0 40.5L58.4 20.5L55.1 9.6Z"/><path fill="#c8946d" d="M31.5 9.6C28.5 20.5 29.6 29.6 27.8 38.7L24.5 39.8L22.7 20.5L26.0 9.6Z"/><path fill="#c8946d" d="M25.6 25.6C23.1 13.2 28.2 3.4 40.6 3.4C53.0 3.4 58.1 13.2 56.2 27.1L51.9 19.0L49.0 22.7L44.9 16.9L41.3 22.3L39.1 13.2L35.5 22.0L30.4 19.0Z"/><path fill="#ddb088" opacity=".55" d="M25.3 14.3C35.1 8.1 46.0 8.1 55.9 14.3C46.0 11.0 35.1 11.0 25.3 14.3Z"/><path fill="none" stroke="#a97759" stroke-width="0.4" d="M39.1 4.1C33.3 9.6 31.8 16.9 33.3 22.0M40.6 4.1C47.9 9.6 50.0 16.9 49.3 22.0M56.2 16.9C58.8 26.0 56.2 33.2 55.1 40.2M24.5 16.9C22.4 26.0 24.5 33.2 26.7 39.4M24.9 39.4C20.2 27.8 21.3 2.3 40.6 2.3C59.9 2.3 61.0 27.8 57.0 40.5"/><ellipse cx="34.6" cy="25.2" rx="2.8" ry="3.5" fill="#fff"/><ellipse cx="34.6" cy="25.7" rx="2.2" ry="3.0" fill="#7a4320"/><ellipse cx="34.6" cy="26.3" rx="1.2" ry="1.6" fill="#b06a30"/><path d="M31.3 23.4Q34.6 20.5 37.8 23.4" stroke="#3a241a" stroke-width="0.8" fill="none"/><circle cx="33.8" cy="24.0" r="0.7" fill="#fff"/><path d="M31.7 19.4L37.2 18.3" stroke="#a97759" stroke-width="0.4" fill="none"/><ellipse cx="46.6" cy="25.2" rx="2.8" ry="3.5" fill="#fff"/><ellipse cx="46.6" cy="25.7" rx="2.2" ry="3.0" fill="#7a4320"/><ellipse cx="46.6" cy="26.3" rx="1.2" ry="1.6" fill="#b06a30"/><path d="M43.3 23.4Q46.6 20.5 49.9 23.4" stroke="#3a241a" stroke-width="0.8" fill="none"/><circle cx="45.8" cy="24.0" r="0.7" fill="#fff"/><path d="M43.7 19.4L49.2 18.3" stroke="#a97759" stroke-width="0.4" fill="none"/><ellipse cx="33.5" cy="30.3" rx="2.0" ry="1.0" fill="#f3b3a0" opacity=".6"/><ellipse cx="48.4" cy="30.3" rx="2.0" ry="1.0" fill="#f3b3a0" opacity=".6"/><path fill="#e27f6e" stroke="#6b3a2c" stroke-width="0.3" d="M36.0 32.7C39.2 32.0 42.8 31.7 45.1 32.0C45.1 37.4 37.4 39.3 36.0 32.7Z"/><path fill="#fff" d="M36.7 32.9C39.2 32.3 42.8 32.2 44.6 32.3L44.2 33.4C41.9 33.4 39.2 33.6 37.2 33.9Z"/><circle cx="56.4" cy="16.5" r="0.9" fill="#e58bb8"/><circle cx="55.9" cy="17.9" r="0.9" fill="#e58bb8"/><circle cx="54.4" cy="17.9" r="0.9" fill="#e58bb8"/><circle cx="53.9" cy="16.4" r="0.9" fill="#e58bb8"/><circle cx="55.2" cy="15.6" r="0.9" fill="#e58bb8"/><circle cx="55.1" cy="16.9" r="0.5" fill="#fff3d0"/></g></svg></div>
<div class="clip" style="left:992.5px;top:318.5px;width:79.2px;height:103.6px;background:#fff;border-radius:2.600px;"><svg style="left:0;top:0" width="79.2" height="103.6" viewBox="0 0 79.2 103.6"><g transform="translate(79.2 0) scale(-1 1)"><path fill="#fff" stroke="#c5c9d4" stroke-width="0.7" d="M33.4 64.9L61.2 63.6L77.9 77.2L58.1 108.1L11.8 108.1L5.6 86.5Z"/><path fill="none" stroke="#c5c9d4" stroke-width="0.7" d="M45.8 68.0L64.3 86.5L48.9 98.9M33.4 68.0L21.1 92.7"/><path fill="#2b6cbf" d="M29.1 83.4L16.1 76.2L17.2 91.2ZM29.1 83.4L42.1 76.2L41.0 91.2ZM27.5 84.7L21.3 102.9L27.8 101.6ZM30.7 84.7L37.4 102.1L31.2 101.6Z"/><path d="M29.1 83.4L28.1 102.9M29.1 83.4L31.7 101.6" stroke="#3b2a2a" stroke-width="1.6" fill="none"/><circle cx="29.1" cy="83.4" r="2.3" fill="#1f4f96"/><g><path fill="#c8946d" d="M13.0 66.1C5.0 46.4 6.9 3.1 39.6 3.1C72.3 3.1 74.2 46.4 67.4 68.0C58.1 71.1 50.7 68.0 45.8 62.4L33.4 62.4C29.7 68.0 21.1 69.8 13.0 66.1Z"/><path fill="#a97759" d="M33.4 40.2L65.5 40.2L61.8 68.6L33.4 68.6Z"/><path fill="#f1bfa8" d="M37.1 53.1L49.5 53.1L51.3 74.8L35.3 74.8Z"/><path fill="#fbe5d5" d="M17.4 21.6C15.5 47.6 25.4 61.2 34.7 62.4C44.5 59.9 52.6 49.4 50.7 21.6Z"/><ellipse cx="55.7" cy="43.3" rx="3.4" ry="5.3" fill="#fbe5d5" stroke="#d9a58f" stroke-width="0.7"/><path fill="#c8946d" d="M50.1 15.5C55.0 34.0 52.6 49.4 56.3 64.9L67.4 68.0L69.9 34.0L64.3 15.5Z"/><path fill="#c8946d" d="M22.3 15.5C17.4 34.0 19.2 49.4 16.1 64.9L12.4 66.7L9.3 34.0L14.9 15.5Z"/><path fill="#c8946d" d="M12.4 42.6C9.9 21.6 18.6 5.0 39.6 5.0C60.6 5.0 69.3 21.6 56.9 45.1L49.5 31.5L44.5 37.7L41.5 27.8L35.3 37.1L31.6 21.6L25.4 36.5L20.4 31.5Z"/><path fill="#ddb088" opacity=".55" d="M13.7 23.5C30.3 13.0 48.9 13.0 65.5 23.5C48.9 17.9 30.3 17.9 13.7 23.5Z"/><path fill="none" stroke="#a97759" stroke-width="0.7" d="M31.6 6.2C21.7 15.5 19.2 27.8 21.7 36.5M34.0 6.2C46.4 15.5 50.1 27.8 48.9 36.5M66.2 27.8C70.5 43.3 66.2 55.6 64.3 67.4M12.4 27.8C8.7 43.3 12.4 55.6 16.1 66.1M13.0 66.1C5.0 46.4 6.9 3.1 39.6 3.1C72.3 3.1 74.2 46.4 67.4 68.0"/><ellipse cx="23.8" cy="40.2" rx="3.4" ry="5.9" fill="#fff"/><ellipse cx="23.8" cy="40.9" rx="2.6" ry="5.1" fill="#7a4320"/><ellipse cx="23.8" cy="42.0" rx="1.4" ry="2.8" fill="#b06a30"/><path d="M20.0 37.1Q23.8 32.1 27.7 37.1" stroke="#3a241a" stroke-width="1.4" fill="none"/><circle cx="22.9" cy="38.0" r="1.2" fill="#fff"/><path d="M20.5 30.3L27.0 28.4" stroke="#a97759" stroke-width="0.7" fill="none"/><ellipse cx="41.8" cy="40.2" rx="4.4" ry="5.9" fill="#fff"/><ellipse cx="41.8" cy="40.9" rx="3.4" ry="5.1" fill="#7a4320"/><ellipse cx="41.8" cy="42.0" rx="1.9" ry="2.8" fill="#b06a30"/><path d="M36.7 37.1Q41.8 32.1 46.9 37.1" stroke="#3a241a" stroke-width="1.4" fill="none"/><circle cx="40.6" cy="38.0" r="1.2" fill="#fff"/><path d="M37.3 30.3L45.8 28.4" stroke="#a97759" stroke-width="0.7" fill="none"/><ellipse cx="22.0" cy="48.8" rx="3.4" ry="1.7" fill="#f3b3a0" opacity=".6"/><ellipse cx="44.9" cy="48.8" rx="3.4" ry="1.7" fill="#f3b3a0" opacity=".6"/><path d="M32.5 53.8Q34.0 52.2 35.6 53.8" stroke="#8a4a3a" stroke-width="0.9" fill="none"/><circle cx="62.0" cy="27.6" r="2.0" fill="#e58bb8"/><circle cx="61.0" cy="30.7" r="2.0" fill="#e58bb8"/><circle cx="57.7" cy="30.7" r="2.0" fill="#e58bb8"/><circle cx="56.7" cy="27.5" r="2.0" fill="#e58bb8"/><circle cx="59.4" cy="25.7" r="2.0" fill="#e58bb8"/><circle cx="59.4" cy="28.4" r="1.2" fill="#fff3d0"/></g></g></svg></div>
<div class="clip" style="left:373.4px;top:435.8px;width:79.2px;height:103.6px;background:#fff;border-radius:2.600px;"><svg style="left:0;top:0" width="79.2" height="103.6" viewBox="0 0 79.2 103.6"><g><path fill="#fff" stroke="#c5c9d4" stroke-width="0.7" d="M33.4 64.9L61.2 63.6L77.9 77.2L58.1 108.1L11.8 108.1L5.6 86.5Z"/><path fill="none" stroke="#c5c9d4" stroke-width="0.7" d="M45.8 68.0L64.3 86.5L48.9 98.9M33.4 68.0L21.1 92.7"/><path fill="#2b6cbf" d="M29.1 83.4L16.1 76.2L17.2 91.2ZM29.1 83.4L42.1 76.2L41.0 91.2ZM27.5 84.7L21.3 102.9L27.8 101.6ZM30.7 84.7L37.4 102.1L31.2 101.6Z"/><path d="M29.1 83.4L28.1 102.9M29.1 83.4L31.7 101.6" stroke="#3b2a2a" stroke-width="1.6" fill="none"/><circle cx="29.1" cy="83.4" r="2.3" fill="#1f4f96"/><g><path fill="#c8946d" d="M13.0 66.1C5.0 46.4 6.9 3.1 39.6 3.1C72.3 3.1 74.2 46.4 67.4 68.0C58.1 71.1 50.7 68.0 45.8 62.4L33.4 62.4C29.7 68.0 21.1 69.8 13.0 66.1Z"/><path fill="#a97759" d="M33.4 40.2L65.5 40.2L61.8 68.6L33.4 68.6Z"/><path fill="#f1bfa8" d="M37.1 53.1L49.5 53.1L51.3 74.8L35.3 74.8Z"/><path fill="#fbe5d5" d="M17.4 21.6C15.5 47.6 25.4 61.2 34.7 62.4C44.5 59.9 52.6 49.4 50.7 21.6Z"/><ellipse cx="55.7" cy="43.3" rx="3.4" ry="5.3" fill="#fbe5d5" stroke="#d9a58f" stroke-width="0.7"/><path fill="#c8946d" d="M50.1 15.5C55.0 34.0 52.6 49.4 56.3 64.9L67.4 68.0L69.9 34.0L64.3 15.5Z"/><path fill="#c8946d" d="M22.3 15.5C17.4 34.0 19.2 49.4 16.1 64.9L12.4 66.7L9.3 34.0L14.9 15.5Z"/><path fill="#c8946d" d="M12.4 42.6C9.9 21.6 18.6 5.0 39.6 5.0C60.6 5.0 69.3 21.6 56.9 45.1L49.5 31.5L44.5 37.7L41.5 27.8L35.3 37.1L31.6 21.6L25.4 36.5L20.4 31.5Z"/><path fill="#ddb088" opacity=".55" d="M13.7 23.5C30.3 13.0 48.9 13.0 65.5 23.5C48.9 17.9 30.3 17.9 13.7 23.5Z"/><path fill="none" stroke="#a97759" stroke-width="0.7" d="M31.6 6.2C21.7 15.5 19.2 27.8 21.7 36.5M34.0 6.2C46.4 15.5 50.1 27.8 48.9 36.5M66.2 27.8C70.5 43.3 66.2 55.6 64.3 67.4M12.4 27.8C8.7 43.3 12.4 55.6 16.1 66.1M13.0 66.1C5.0 46.4 6.9 3.1 39.6 3.1C72.3 3.1 74.2 46.4 67.4 68.0"/><ellipse cx="23.8" cy="40.2" rx="3.4" ry="5.9" fill="#fff"/><ellipse cx="23.8" cy="40.9" rx="2.6" ry="5.1" fill="#7a4320"/><ellipse cx="23.8" cy="42.0" rx="1.4" ry="2.8" fill="#b06a30"/><path d="M20.0 37.1Q23.8 32.1 27.7 37.1" stroke="#3a241a" stroke-width="1.4" fill="none"/><circle cx="22.9" cy="38.0" r="1.2" fill="#fff"/><path d="M20.5 30.3L27.0 28.4" stroke="#a97759" stroke-width="0.7" fill="none"/><ellipse cx="41.8" cy="40.2" rx="4.4" ry="5.9" fill="#fff"/><ellipse cx="41.8" cy="40.9" rx="3.4" ry="5.1" fill="#7a4320"/><ellipse cx="41.8" cy="42.0" rx="1.9" ry="2.8" fill="#b06a30"/><path d="M36.7 37.1Q41.8 32.1 46.9 37.1" stroke="#3a241a" stroke-width="1.4" fill="none"/><circle cx="40.6" cy="38.0" r="1.2" fill="#fff"/><path d="M37.3 30.3L45.8 28.4" stroke="#a97759" stroke-width="0.7" fill="none"/><ellipse cx="22.0" cy="48.8" rx="3.4" ry="1.7" fill="#f3b3a0" opacity=".6"/><ellipse cx="44.9" cy="48.8" rx="3.4" ry="1.7" fill="#f3b3a0" opacity=".6"/><path fill="#e27f6e" stroke="#6b3a2c" stroke-width="0.6" d="M27.2 50.7C32.0 49.7 37.4 49.3 40.8 49.7C40.8 57.8 29.3 60.6 27.2 50.7Z"/><path fill="#fff" d="M28.3 51.0C32.0 50.2 37.4 50.0 40.0 50.2L39.5 51.9C36.1 51.9 32.0 52.1 28.9 52.5Z"/><circle cx="62.0" cy="27.6" r="2.0" fill="#e58bb8"/><circle cx="61.0" cy="30.7" r="2.0" fill="#e58bb8"/><circle cx="57.7" cy="30.7" r="2.0" fill="#e58bb8"/><circle cx="56.7" cy="27.5" r="2.0" fill="#e58bb8"/><circle cx="59.4" cy="25.7" r="2.0" fill="#e58bb8"/><circle cx="59.4" cy="28.4" r="1.2" fill="#fff3d0"/></g></g></svg></div>
<div style="left:371px;top:409.8px;width:33px;height:15.2px;background:#f97316;border-radius:3px;"></div>
<span style="left:374.4px;top:413.00px;font-size:8.98px;color:#fff7ed;letter-spacing:-0.000px;">MULTI</span>
<div style="left:565px;top:409.8px;width:30px;height:15.2px;background:#3b82f6;border-radius:3px;"></div>
<span style="left:568.35px;top:413.00px;font-size:8.63px;color:#fff7ed;letter-spacing:-0.158px;">HEAD</span>
<div style="left:680px;top:409.8px;width:26px;height:15.2px;background:#a855f7;border-radius:3px;"></div>
<span style="left:683.25px;top:413.00px;font-size:8.63px;color:#fff7ed;letter-spacing:-0.388px;">FULL</span>
<span style="left:373.4px;top:568.00px;font-size:13.58px;color:#e5e7eb;-webkit-text-stroke:0.38px currentColor;">Candidates (8)</span>
<div style="left:1020.3px;top:569.2px;width:8.8px;height:8.8px;background:#4b5563;border-radius:1.5px;border:0.7px solid #6b7280;"></div>
<svg style="left:1020.9px;top:569.8000000000001px;" width="7.6000000000000005" height="7.6000000000000005" viewBox="0 0 16 16"><path d="M3.200 8.500 6.500 11.800 12.800 4.200" fill="none" stroke="#fff" stroke-width="2.600" stroke-linecap="round" stroke-linejoin="round"/></svg>
<span style="left:1035.8px;top:568.00px;font-size:10.56px;color:#c3c8d1;">Show hidden (14)</span>
<div class="clip" style="left:373.4px;top:597.2px;width:51.8px;height:90.9px;background:#fff;border-radius:2.600px;opacity:.53;box-shadow:inset 0 0 0 0.6px rgba(255,255,255,.25);"><svg style="left:0;top:0" width="51.8" height="90.9" viewBox="0 0 51.8 90.9"><path fill="#fff" stroke="#9aa1b3" stroke-width="0.4" d="M18.4 31.9L33.4 31.9L44.5 38.5L46.9 98.0L4.9 98.0L7.3 38.5Z"/><path fill="none" stroke="#9aa1b3" stroke-width="0.4" d="M25.9 33.4L25.9 98.0M12.4 49.9L13.3 98.0M39.4 49.9L38.5 98.0M13.9 73.9C22.9 78.4 28.9 78.4 37.9 73.9"/><g transform="translate(0 -0.2) scale(1 1.12)"><g><path fill="#c8946d" d="M13.0 32.5C9.1 22.8 10.0 1.8 25.9 1.8C41.8 1.8 42.7 22.8 39.4 33.4C34.9 34.9 31.3 33.4 28.9 30.7L22.9 30.7C21.1 33.4 16.9 34.3 13.0 32.5Z"/><path fill="#a97759" opacity=".35" d="M13.9 25.9C19.9 30.4 31.9 30.4 37.9 25.9L39.1 33.1C31.9 34.9 19.9 34.9 13.3 32.5Z"/><path fill="none" stroke="#a97759" stroke-width="0.3" d="M24.4 5.4C22.3 16.8 24.1 25.9 25.9 31.9M28.3 6.3C30.1 16.8 28.3 25.9 26.5 31.9M16.9 12.3C15.1 21.3 16.3 27.4 17.8 33.1M34.9 12.3C36.7 21.3 35.5 27.4 34.0 33.7"/><path fill="#ddb088" opacity=".5" d="M13.9 10.8C21.4 6.9 30.4 6.9 37.9 10.8C30.4 9.3 21.4 9.3 13.9 10.8Z"/></g></g><rect x="9.3" y="85.0" width="32.1" height="7.3" fill="#3d5fa8"/></svg></div>
<div style="left:437.8px;top:596.0px;width:72.2px;height:93.3px;background:#22c55e;border-radius:3.6px;"></div>
<div class="clip" style="left:439.0px;top:597.2px;width:69.8px;height:90.9px;background:#fff;border-radius:2.600px;"><svg style="left:0;top:0" width="69.8" height="90.9" viewBox="0 0 69.8 90.9"><g><path fill="#fff" stroke="#c5c9d4" stroke-width="0.7" d="M29.5 57.2L54.0 56.1L68.7 68.1L51.2 95.3L10.4 95.3L5.0 76.2Z"/><path fill="none" stroke="#c5c9d4" stroke-width="0.7" d="M40.3 59.9L56.7 76.2L43.1 87.1M29.5 59.9L18.6 81.7"/><path fill="#2b6cbf" d="M25.6 73.5L14.2 67.1L15.1 80.4ZM25.6 73.5L37.1 67.1L36.2 80.4ZM24.3 74.6L18.8 90.7L24.5 89.5ZM27.0 74.6L33.0 90.0L27.5 89.5Z"/><path d="M25.6 73.5L24.7 90.7M25.6 73.5L27.9 89.5" stroke="#3b2a2a" stroke-width="1.4" fill="none"/><circle cx="25.6" cy="73.5" r="2.1" fill="#1f4f96"/><g><path fill="#c8946d" d="M11.5 58.3C4.4 40.8 6.0 2.7 34.9 2.7C63.8 2.7 65.4 40.8 59.4 59.9C51.2 62.6 44.7 59.9 40.3 55.0L29.5 55.0C26.2 59.9 18.6 61.5 11.5 58.3Z"/><path fill="#a97759" d="M29.5 35.4L57.8 35.4L54.5 60.4L29.5 60.4Z"/><path fill="#f1bfa8" d="M32.7 46.8L43.6 46.8L45.2 65.9L31.1 65.9Z"/><path fill="#fbe5d5" d="M15.3 19.1C13.7 41.9 22.4 53.9 30.5 55.0C39.3 52.8 46.3 43.6 44.7 19.1Z"/><ellipse cx="49.1" cy="38.1" rx="3.0" ry="4.6" fill="#fbe5d5" stroke="#d9a58f" stroke-width="0.6"/><path fill="#c8946d" d="M44.2 13.6C48.5 29.9 46.3 43.6 49.6 57.2L59.4 59.9L61.6 29.9L56.7 13.6Z"/><path fill="#c8946d" d="M19.7 13.6C15.3 29.9 16.9 43.6 14.2 57.2L10.9 58.8L8.2 29.9L13.1 13.6Z"/><path fill="#c8946d" d="M10.9 37.6C8.8 19.1 16.4 4.4 34.9 4.4C53.4 4.4 61.0 19.1 50.1 39.7L43.6 27.8L39.3 33.2L36.5 24.5L31.1 32.7L27.8 19.1L22.4 32.1L18.0 27.8Z"/><path fill="#ddb088" opacity=".55" d="M12.0 20.7C26.7 11.4 43.1 11.4 57.8 20.7C43.1 15.8 26.7 15.8 12.0 20.7Z"/><path fill="none" stroke="#a97759" stroke-width="0.6" d="M27.8 5.4C19.1 13.6 16.9 24.5 19.1 32.1M30.0 5.4C40.9 13.6 44.2 24.5 43.1 32.1M58.3 24.5C62.1 38.1 58.3 49.0 56.7 59.3M10.9 24.5C7.7 38.1 10.9 49.0 14.2 58.3M11.5 58.3C4.4 40.8 6.0 2.7 34.9 2.7C63.8 2.7 65.4 40.8 59.4 59.9"/><ellipse cx="21.0" cy="35.4" rx="3.0" ry="5.2" fill="#fff"/><ellipse cx="21.0" cy="36.0" rx="2.3" ry="4.5" fill="#7a4320"/><ellipse cx="21.0" cy="37.0" rx="1.3" ry="2.4" fill="#b06a30"/><path d="M17.6 32.7Q21.0 28.3 24.4 32.7" stroke="#3a241a" stroke-width="1.2" fill="none"/><circle cx="20.2" cy="33.5" r="1.1" fill="#fff"/><path d="M18.0 26.7L23.8 25.0" stroke="#a97759" stroke-width="0.7" fill="none"/><ellipse cx="36.8" cy="35.4" rx="3.9" ry="5.2" fill="#fff"/><ellipse cx="36.8" cy="36.0" rx="3.0" ry="4.5" fill="#7a4320"/><ellipse cx="36.8" cy="37.0" rx="1.6" ry="2.4" fill="#b06a30"/><path d="M32.3 32.7Q36.8 28.3 41.3 32.7" stroke="#3a241a" stroke-width="1.2" fill="none"/><circle cx="35.8" cy="33.5" r="1.1" fill="#fff"/><path d="M32.9 26.7L40.4 25.0" stroke="#a97759" stroke-width="0.7" fill="none"/><ellipse cx="19.4" cy="43.0" rx="3.0" ry="1.5" fill="#f3b3a0" opacity=".6"/><ellipse cx="39.5" cy="43.0" rx="3.0" ry="1.5" fill="#f3b3a0" opacity=".6"/><path fill="#e27f6e" stroke="#6b3a2c" stroke-width="0.5" d="M24.0 44.7C28.2 43.8 33.0 43.5 36.0 43.8C36.0 51.0 25.8 53.4 24.0 44.7Z"/><path fill="#fff" d="M24.9 45.0C28.2 44.3 33.0 44.0 35.3 44.3L34.8 45.7C31.8 45.7 28.2 45.9 25.5 46.3Z"/><circle cx="54.7" cy="24.3" r="1.8" fill="#e58bb8"/><circle cx="53.7" cy="27.1" r="1.8" fill="#e58bb8"/><circle cx="50.9" cy="27.0" r="1.8" fill="#e58bb8"/><circle cx="50.0" cy="24.3" r="1.8" fill="#e58bb8"/><circle cx="52.4" cy="22.6" r="1.8" fill="#e58bb8"/><circle cx="52.3" cy="25.0" r="1.0" fill="#fff3d0"/></g></g></svg></div>
<div style="left:500.6px;top:593.6px;width:11.6px;height:11.6px;background:#22c55e;border-radius:6px;"></div>
<svg style="left:501.6px;top:594.7px;" width="9.4" height="9.4" viewBox="0 0 16 16"><path d="M3.200 8.600 6.500 11.600 12.800 4.600" fill="none" stroke="#fff" stroke-width="1.800" stroke-linecap="round" stroke-linejoin="round"/></svg>
<div class="clip" style="left:522.7px;top:597.2px;width:48.6px;height:90.9px;background:#fff;border-radius:2.600px;opacity:.53;box-shadow:inset 0 0 0 0.6px rgba(255,255,255,.25);"><svg style="left:0;top:0" width="48.6" height="90.9" viewBox="0 0 48.6 90.9"><path fill="#fff" stroke="#9aa1b3" stroke-width="0.4" d="M16.3 33.9L32.3 33.9L44.2 41.0L46.8 104.5L1.8 104.5L4.4 41.0Z"/><path fill="none" stroke="#9aa1b3" stroke-width="0.4" d="M24.3 35.5L24.3 104.5M9.9 53.1L10.8 104.5M38.7 53.1L37.8 104.5M11.5 78.8C21.1 83.6 27.5 83.6 37.1 78.8"/><g transform="translate(0 -0.2) scale(1 1.12)"><g><path fill="#c8946d" d="M10.5 34.5C6.3 24.3 7.3 1.8 24.3 1.8C41.3 1.8 42.3 24.3 38.7 35.5C33.9 37.1 30.1 35.5 27.5 32.6L21.1 32.6C19.2 35.5 14.7 36.5 10.5 34.5Z"/><path fill="#a97759" opacity=".35" d="M11.5 27.5C17.9 32.3 30.7 32.3 37.1 27.5L38.4 35.2C30.7 37.1 17.9 37.1 10.8 34.5Z"/><path fill="none" stroke="#a97759" stroke-width="0.4" d="M22.7 5.7C20.5 17.9 22.4 27.5 24.3 33.9M26.9 6.6C28.8 17.9 26.9 27.5 24.9 33.9M14.7 13.0C12.8 22.7 14.0 29.1 15.6 35.2M33.9 13.0C35.8 22.7 34.6 29.1 33.0 35.8"/><path fill="#ddb088" opacity=".5" d="M11.5 11.4C19.5 7.3 29.1 7.3 37.1 11.4C29.1 9.8 19.5 9.8 11.5 11.4Z"/></g></g></svg></div>
<div class="clip" style="left:584.5px;top:597.2px;width:53.6px;height:90.9px;background:#fff;border-radius:2.600px;opacity:.53;box-shadow:inset 0 0 0 0.6px rgba(255,255,255,.25);"><svg style="left:0;top:0" width="53.6" height="90.9" viewBox="0 0 53.6 90.9"><path fill="#fff" stroke="#9aa1b3" stroke-width="0.4" d="M19.0 32.9L34.6 32.9L46.1 39.7L48.6 101.3L5.0 101.3L7.5 39.7Z"/><path fill="none" stroke="#9aa1b3" stroke-width="0.4" d="M26.8 34.5L26.8 101.3M12.8 51.6L13.7 101.3M40.8 51.6L39.9 101.3M14.4 76.4C23.7 81.1 29.9 81.1 39.2 76.4"/><g transform="translate(0 -0.2) scale(1 1.12)"><g><path fill="#c8946d" d="M13.4 33.5C9.4 23.6 10.3 1.8 26.8 1.8C43.3 1.8 44.2 23.6 40.8 34.5C36.1 36.0 32.4 34.5 29.9 31.7L23.7 31.7C21.8 34.5 17.5 35.4 13.4 33.5Z"/><path fill="#a97759" opacity=".35" d="M14.4 26.7C20.6 31.4 33.0 31.4 39.2 26.7L40.5 34.1C33.0 36.0 20.6 36.0 13.7 33.5Z"/><path fill="none" stroke="#a97759" stroke-width="0.3" d="M25.2 5.5C23.1 17.4 24.9 26.7 26.8 32.9M29.3 6.5C31.2 17.4 29.3 26.7 27.4 32.9M17.5 12.7C15.6 22.0 16.9 28.2 18.4 34.1M36.1 12.7C38.0 22.0 36.7 28.2 35.2 34.8"/><path fill="#ddb088" opacity=".5" d="M14.4 11.1C22.1 7.1 31.5 7.1 39.2 11.1C31.5 9.6 22.1 9.6 14.4 11.1Z"/></g></g></svg></div>
<div style="left:650.6px;top:596.0px;width:71.6px;height:93.3px;background:#22c55e;border-radius:3.6px;"></div>
<div class="clip" style="left:651.8px;top:597.2px;width:69.2px;height:90.9px;background:#fff;border-radius:2.600px;"><svg style="left:0;top:0" width="69.2" height="90.9" viewBox="0 0 69.2 90.9"><g transform="translate(69.2 0) scale(-1 1)"><path fill="#fff" stroke="#c5c9d4" stroke-width="0.6" d="M29.2 56.7L53.5 55.6L68.1 67.5L50.8 94.5L10.3 94.5L4.9 75.6Z"/><path fill="none" stroke="#c5c9d4" stroke-width="0.6" d="M40.0 59.4L56.2 75.6L42.7 86.4M29.2 59.4L18.4 81.0"/><path fill="#2b6cbf" d="M25.4 72.9L14.1 66.5L15.0 79.7ZM25.4 72.9L36.8 66.5L35.9 79.7ZM24.1 74.0L18.6 89.9L24.3 88.8ZM26.8 74.0L32.7 89.2L27.2 88.8Z"/><path d="M25.4 72.9L24.5 89.9M25.4 72.9L27.7 88.8" stroke="#3b2a2a" stroke-width="1.4" fill="none"/><circle cx="25.4" cy="72.9" r="2.0" fill="#1f4f96"/><g><path fill="#c8946d" d="M11.4 57.8C4.4 40.5 6.0 2.7 34.6 2.7C63.2 2.7 64.8 40.5 58.9 59.4C50.8 62.1 44.3 59.4 40.0 54.5L29.2 54.5C26.0 59.4 18.4 61.0 11.4 57.8Z"/><path fill="#a97759" d="M29.2 35.1L57.3 35.1L54.0 59.9L29.2 59.9Z"/><path fill="#f1bfa8" d="M32.4 46.4L43.2 46.4L44.9 65.3L30.8 65.3Z"/><path fill="#fbe5d5" d="M15.2 18.9C13.5 41.6 22.2 53.5 30.3 54.5C38.9 52.4 45.9 43.2 44.3 18.9Z"/><ellipse cx="48.6" cy="37.8" rx="3.0" ry="4.6" fill="#fbe5d5" stroke="#d9a58f" stroke-width="0.6"/><path fill="#c8946d" d="M43.8 13.5C48.1 29.7 45.9 43.2 49.2 56.7L58.9 59.4L61.0 29.7L56.2 13.5Z"/><path fill="#c8946d" d="M19.5 13.5C15.2 29.7 16.8 43.2 14.1 56.7L10.9 58.3L8.2 29.7L13.0 13.5Z"/><path fill="#c8946d" d="M10.9 37.3C8.7 18.9 16.2 4.3 34.6 4.3C53.0 4.3 60.5 18.9 49.7 39.4L43.2 27.6L38.9 33.0L36.2 24.3L30.8 32.4L27.6 18.9L22.2 31.9L17.9 27.6Z"/><path fill="#ddb088" opacity=".55" d="M11.9 20.5C26.5 11.4 42.7 11.4 57.3 20.5C42.7 15.7 26.5 15.7 11.9 20.5Z"/><path fill="none" stroke="#a97759" stroke-width="0.6" d="M27.6 5.4C18.9 13.5 16.8 24.3 18.9 31.9M29.7 5.4C40.5 13.5 43.8 24.3 42.7 31.9M57.8 24.3C61.6 37.8 57.8 48.6 56.2 58.9M10.9 24.3C7.6 37.8 10.9 48.6 14.1 57.8M11.4 57.8C4.4 40.5 6.0 2.7 34.6 2.7C63.2 2.7 64.8 40.5 58.9 59.4"/><ellipse cx="20.8" cy="35.1" rx="2.9" ry="5.1" fill="#fff"/><ellipse cx="20.8" cy="35.8" rx="2.3" ry="4.5" fill="#7a4320"/><ellipse cx="20.8" cy="36.7" rx="1.2" ry="2.4" fill="#b06a30"/><path d="M17.4 32.4Q20.8 28.1 24.2 32.4" stroke="#3a241a" stroke-width="1.2" fill="none"/><circle cx="20.0" cy="33.2" r="1.1" fill="#fff"/><path d="M17.9 26.5L23.6 24.9" stroke="#a97759" stroke-width="0.6" fill="none"/><ellipse cx="36.5" cy="35.1" rx="3.9" ry="5.1" fill="#fff"/><ellipse cx="36.5" cy="35.8" rx="3.0" ry="4.5" fill="#7a4320"/><ellipse cx="36.5" cy="36.7" rx="1.6" ry="2.4" fill="#b06a30"/><path d="M32.0 32.4Q36.5 28.1 40.9 32.4" stroke="#3a241a" stroke-width="1.2" fill="none"/><circle cx="35.5" cy="33.2" r="1.1" fill="#fff"/><path d="M32.6 26.5L40.1 24.9" stroke="#a97759" stroke-width="0.6" fill="none"/><ellipse cx="19.2" cy="42.7" rx="3.0" ry="1.5" fill="#f3b3a0" opacity=".6"/><ellipse cx="39.2" cy="42.7" rx="3.0" ry="1.5" fill="#f3b3a0" opacity=".6"/><path d="M28.4 47.0Q29.7 45.6 31.1 47.0" stroke="#8a4a3a" stroke-width="0.8" fill="none"/><circle cx="54.2" cy="24.1" r="1.7" fill="#e58bb8"/><circle cx="53.3" cy="26.8" r="1.7" fill="#e58bb8"/><circle cx="50.4" cy="26.8" r="1.7" fill="#e58bb8"/><circle cx="49.6" cy="24.1" r="1.7" fill="#e58bb8"/><circle cx="51.9" cy="22.4" r="1.7" fill="#e58bb8"/><circle cx="51.9" cy="24.9" r="1.0" fill="#fff3d0"/></g></g></svg></div>
<div style="left:712.8px;top:593.6px;width:11.6px;height:11.6px;background:#22c55e;border-radius:6px;"></div>
<svg style="left:713.8px;top:594.7px;" width="9.4" height="9.4" viewBox="0 0 16 16"><path d="M3.200 8.600 6.500 11.600 12.800 4.600" fill="none" stroke="#fff" stroke-width="1.800" stroke-linecap="round" stroke-linejoin="round"/></svg>
<div class="clip" style="left:734.9px;top:597.2px;width:93.2px;height:90.9px;background:#fff;border-radius:2.600px;opacity:.53;box-shadow:inset 0 0 0 0.6px rgba(255,255,255,.25);"><svg style="left:0;top:0" width="93.2" height="90.9" viewBox="0 0 93.2 90.9"><g><path fill="#c8946d" d="M9.3 86.3C-1.1 60.7 1.3 4.5 43.8 4.5C86.3 4.5 88.7 60.7 79.9 88.7C67.8 92.7 58.2 88.7 51.8 81.5L35.8 81.5C31.0 88.7 19.8 91.1 9.3 86.3Z"/><path fill="#a97759" d="M35.8 52.6L77.5 52.6L72.7 89.5L35.8 89.5Z"/><path fill="#f1bfa8" d="M40.6 69.5L56.6 69.5L59.0 97.5L38.2 97.5Z"/><path fill="#fbe5d5" d="M14.9 28.6C12.5 62.3 25.4 79.9 37.4 81.5C50.2 78.3 60.6 64.7 58.2 28.6Z"/><ellipse cx="64.6" cy="56.6" rx="4.4" ry="6.8" fill="#fbe5d5" stroke="#d9a58f" stroke-width="0.9"/><path fill="#c8946d" d="M57.4 20.6C63.8 44.6 60.6 64.7 65.4 84.7L79.9 88.7L83.1 44.6L75.9 20.6Z"/><path fill="#c8946d" d="M21.4 20.6C14.9 44.6 17.4 64.7 13.3 84.7L8.5 87.1L4.5 44.6L11.7 20.6Z"/><path fill="#c8946d" d="M8.5 55.8C5.3 28.6 16.6 6.9 43.8 6.9C71.1 6.9 82.3 28.6 66.2 59.0L56.6 41.4L50.2 49.4L46.2 36.6L38.2 48.6L33.4 28.6L25.4 47.8L19.0 41.4Z"/><path fill="#ddb088" opacity=".55" d="M10.1 31.0C31.8 17.4 55.8 17.4 77.5 31.0C55.8 23.8 31.8 23.8 10.1 31.0Z"/><path fill="none" stroke="#a97759" stroke-width="0.9" d="M33.4 8.6C20.6 20.6 17.4 36.6 20.6 47.8M36.6 8.6C52.6 20.6 57.4 36.6 55.8 47.8M78.3 36.6C83.9 56.6 78.3 72.7 75.9 87.9M8.5 36.6C3.7 56.6 8.5 72.7 13.3 86.3M9.3 86.3C-1.1 60.7 1.3 4.5 43.8 4.5C86.3 4.5 88.7 60.7 79.9 88.7"/><ellipse cx="23.4" cy="52.6" rx="4.4" ry="7.6" fill="#fff"/><ellipse cx="23.4" cy="53.6" rx="3.4" ry="6.7" fill="#7a4320"/><ellipse cx="23.4" cy="55.0" rx="1.9" ry="3.6" fill="#b06a30"/><path d="M18.3 48.6Q23.4 42.2 28.4 48.6" stroke="#3a241a" stroke-width="1.8" fill="none"/><circle cx="22.2" cy="49.8" r="1.6" fill="#fff"/><path d="M19.0 39.8L27.4 37.4" stroke="#a97759" stroke-width="1.0" fill="none"/><ellipse cx="46.6" cy="52.6" rx="5.7" ry="7.6" fill="#fff"/><ellipse cx="46.6" cy="53.6" rx="4.4" ry="6.7" fill="#7a4320"/><ellipse cx="46.6" cy="55.0" rx="2.4" ry="3.6" fill="#b06a30"/><path d="M40.0 48.6Q46.6 42.2 53.2 48.6" stroke="#3a241a" stroke-width="1.8" fill="none"/><circle cx="45.1" cy="49.8" r="1.6" fill="#fff"/><path d="M40.9 39.8L51.9 37.4" stroke="#a97759" stroke-width="1.0" fill="none"/><ellipse cx="21.0" cy="63.9" rx="4.4" ry="2.2" fill="#f3b3a0" opacity=".6"/><ellipse cx="50.6" cy="63.9" rx="4.4" ry="2.2" fill="#f3b3a0" opacity=".6"/><path fill="#e27f6e" stroke="#6b3a2c" stroke-width="0.7" d="M27.8 66.3C33.9 65.0 41.0 64.5 45.4 65.0C45.4 75.6 30.4 79.1 27.8 66.3Z"/><path fill="#fff" d="M29.1 66.7C33.9 65.7 41.0 65.3 44.3 65.7L43.6 67.8C39.2 67.8 33.9 68.2 30.0 68.7Z"/><circle cx="72.9" cy="36.3" r="2.6" fill="#e58bb8"/><circle cx="71.5" cy="40.4" r="2.6" fill="#e58bb8"/><circle cx="67.3" cy="40.3" r="2.6" fill="#e58bb8"/><circle cx="66.0" cy="36.2" r="2.6" fill="#e58bb8"/><circle cx="69.5" cy="33.8" r="2.6" fill="#e58bb8"/><circle cx="69.5" cy="37.4" r="1.5" fill="#fff3d0"/></g></svg></div>
<div style="left:841.2px;top:596.0px;width:74.7px;height:93.3px;background:#22c55e;border-radius:3.6px;"></div>
<div class="clip" style="left:842.4px;top:597.2px;width:72.3px;height:90.9px;background:#fff;border-radius:2.600px;"><svg style="left:0;top:0" width="72.3" height="90.9" viewBox="0 0 72.3 90.9"><rect x="19.5" y="82.5" width="31.8" height="31.8" fill="#3d5fa8"/><path fill="#fff" stroke="#c5c9d4" stroke-width="0.4" d="M25.9 37.0L45.0 37.0L55.2 42.7L55.2 93.6L15.7 93.6L15.7 42.7Z"/><path fill="#fff" stroke="#c5c9d4" stroke-width="0.4" d="M19.5 40.2L-0.2 63.4L16.3 80.9L22.1 74.5L10.0 63.4L19.5 52.3Z"/><ellipse cx="20.2" cy="78.3" rx="4.1" ry="2.9" fill="#fbe5d5"/><rect x="12.5" y="74.5" width="6.4" height="2.5" fill="#3d5fa8" transform="rotate(40 15.7 75.8)"/><path fill="#fff" stroke="#c5c9d4" stroke-width="0.4" d="M51.3 40.2L71.1 63.4L54.5 80.9L48.8 74.5L60.9 63.4L51.3 52.3Z"/><ellipse cx="50.7" cy="78.3" rx="4.1" ry="2.9" fill="#fbe5d5"/><rect x="52.0" y="74.5" width="6.4" height="2.5" fill="#3d5fa8" transform="rotate(-40 55.2 75.8)"/><path fill="#4b4058" d="M30.7 41.1L40.2 41.1L40.8 81.5L30.0 81.5Z"/><path fill="#3d5fa8" d="M29.1 80.9L41.8 80.9L43.1 103.2L27.8 103.2Z"/><path fill="#fff" d="M28.4 37.0L35.4 45.9L42.4 37.0Z"/><path fill="#2b6cbf" d="M35.4 45.9L27.5 41.4L28.1 50.7ZM35.4 45.9L43.4 41.4L42.7 50.7ZM34.5 46.7L30.7 57.8L34.6 57.0ZM36.4 46.7L40.5 57.4L36.7 57.0Z"/><path d="M35.4 45.9L34.8 57.8M35.4 45.9L37.0 57.0" stroke="#3b2a2a" stroke-width="1.0" fill="none"/><circle cx="35.4" cy="45.9" r="1.4" fill="#1f4f96"/><g><path fill="#c8946d" d="M21.7 34.4C17.6 24.3 18.6 2.0 35.4 2.0C52.3 2.0 53.2 24.3 49.7 35.4C45.0 37.0 41.2 35.4 38.6 32.5L32.2 32.5C30.3 35.4 25.9 36.4 21.7 34.4Z"/><path fill="#a97759" d="M22.1 21.1L48.8 21.1L46.9 35.7L24.0 35.7Z"/><path fill="#f1bfa8" d="M32.2 30.9L38.6 30.9L39.6 42.1L31.3 42.1Z"/><path fill="#fbe5d5" d="M24.9 11.5C24.0 24.9 30.7 35.1 35.4 35.7C40.5 34.4 46.9 25.9 45.9 11.5Z"/><path fill="#c8946d" d="M43.4 8.4C45.9 17.9 44.7 25.9 46.6 33.8L49.7 35.4L51.0 17.9L48.2 8.4Z"/><path fill="#c8946d" d="M27.5 8.4C24.9 17.9 25.9 25.9 24.3 33.8L21.4 34.8L19.8 17.9L22.7 8.4Z"/><path fill="#c8946d" d="M22.4 22.4C20.2 11.5 24.6 3.0 35.4 3.0C46.2 3.0 50.7 11.5 49.1 23.6L45.3 16.6L42.7 19.8L39.2 14.7L36.1 19.5L34.2 11.5L31.0 19.2L26.5 16.6Z"/><path fill="#ddb088" opacity=".55" d="M22.1 12.5C30.7 7.1 40.2 7.1 48.8 12.5C40.2 9.6 30.7 9.6 22.1 12.5Z"/><path fill="none" stroke="#a97759" stroke-width="0.3" d="M34.2 3.6C29.1 8.4 27.8 14.7 29.1 19.2M35.4 3.6C41.8 8.4 43.7 14.7 43.1 19.2M49.1 14.7C51.3 22.7 49.1 29.0 48.2 35.1M21.4 14.7C19.5 22.7 21.4 29.0 23.3 34.4M21.7 34.4C17.6 24.3 18.6 2.0 35.4 2.0C52.3 2.0 53.2 24.3 49.7 35.4"/><ellipse cx="30.2" cy="22.0" rx="2.5" ry="3.0" fill="#fff"/><ellipse cx="30.2" cy="22.4" rx="1.9" ry="2.6" fill="#7a4320"/><ellipse cx="30.2" cy="23.0" rx="1.0" ry="1.4" fill="#b06a30"/><path d="M27.3 20.5Q30.2 17.9 33.0 20.5" stroke="#3a241a" stroke-width="0.7" fill="none"/><circle cx="29.5" cy="20.9" r="0.6" fill="#fff"/><path d="M27.7 17.0L32.5 16.0" stroke="#a97759" stroke-width="0.4" fill="none"/><ellipse cx="40.7" cy="22.0" rx="2.5" ry="3.0" fill="#fff"/><ellipse cx="40.7" cy="22.4" rx="1.9" ry="2.6" fill="#7a4320"/><ellipse cx="40.7" cy="23.0" rx="1.0" ry="1.4" fill="#b06a30"/><path d="M37.8 20.5Q40.7 17.9 43.5 20.5" stroke="#3a241a" stroke-width="0.7" fill="none"/><circle cx="40.0" cy="20.9" r="0.6" fill="#fff"/><path d="M38.2 17.0L43.0 16.0" stroke="#a97759" stroke-width="0.4" fill="none"/><ellipse cx="29.2" cy="26.5" rx="1.7" ry="0.9" fill="#f3b3a0" opacity=".6"/><ellipse cx="42.3" cy="26.5" rx="1.7" ry="0.9" fill="#f3b3a0" opacity=".6"/><path fill="#e27f6e" stroke="#6b3a2c" stroke-width="0.3" d="M31.5 28.5C34.2 27.9 37.4 27.7 39.4 27.9C39.4 32.7 32.6 34.3 31.5 28.5Z"/><path fill="#fff" d="M32.0 28.7C34.2 28.2 37.4 28.1 38.9 28.2L38.6 29.2C36.6 29.2 34.2 29.4 32.4 29.6Z"/><circle cx="49.2" cy="14.4" r="0.8" fill="#e58bb8"/><circle cx="48.8" cy="15.6" r="0.8" fill="#e58bb8"/><circle cx="47.5" cy="15.6" r="0.8" fill="#e58bb8"/><circle cx="47.1" cy="14.4" r="0.8" fill="#e58bb8"/><circle cx="48.2" cy="13.6" r="0.8" fill="#e58bb8"/><circle cx="48.2" cy="14.7" r="0.5" fill="#fff3d0"/></g></svg></div>
<div style="left:906.5px;top:593.6px;width:11.6px;height:11.6px;background:#22c55e;border-radius:6px;"></div>
<svg style="left:907.5px;top:594.7px;" width="9.4" height="9.4" viewBox="0 0 16 16"><path d="M3.200 8.600 6.500 11.600 12.800 4.600" fill="none" stroke="#fff" stroke-width="1.800" stroke-linecap="round" stroke-linejoin="round"/></svg>
<div style="left:927.1px;top:596.0px;width:29.7px;height:93.3px;background:#22c55e;border-radius:3.6px;"></div>
<div class="clip" style="left:928.3px;top:597.2px;width:27.3px;height:90.9px;background:#fff;border-radius:2.600px;"><svg style="left:0;top:0" width="27.3" height="90.9" viewBox="0 0 27.3 90.9"><path fill="#f7dccb" d="M11.9 49.3L8.2 49.3L6.8 71.1L11.0 71.1Z"/><path fill="#4e352c" d="M11.2 68.0L6.8 68.0L5.5 84.2L9.0 84.2Z"/><ellipse cx="6.4" cy="85.5" rx="3.5" ry="1.5" fill="#6b4630"/><path fill="#f7dccb" d="M15.4 49.3L19.1 49.3L20.5 71.1L16.3 71.1Z"/><path fill="#4e352c" d="M16.1 68.0L20.5 68.0L21.8 84.2L18.3 84.2Z"/><ellipse cx="20.9" cy="85.5" rx="3.5" ry="1.5" fill="#6b4630"/><path fill="#3d5fa8" d="M7.5 38.8L19.8 38.8L22.4 54.5L4.9 54.5Z"/><path fill="#fff" stroke="#c5c9d4" stroke-width="0.5" d="M7.4 18.7L19.9 18.7L21.0 42.3L6.3 42.3Z"/><path fill="#fff" stroke="#c5c9d4" stroke-width="0.5" d="M8.4 18.7L5.8 20.5L4.2 41.4L6.8 42.3Z"/><circle cx="5.3" cy="43.6" r="1.2" fill="#fbe5d5"/><path fill="#fff" stroke="#c5c9d4" stroke-width="0.5" d="M18.9 18.7L21.5 20.5L23.1 41.4L20.5 42.3Z"/><circle cx="22.0" cy="43.6" r="1.2" fill="#fbe5d5"/><g><path fill="#c8946d" d="M7.3 16.6C5.4 11.9 5.9 1.6 13.7 1.6C21.4 1.6 21.9 11.9 20.2 17.0C18.0 17.7 16.3 17.0 15.1 15.7L12.2 15.7C11.3 17.0 9.3 17.5 7.3 16.6Z"/><path fill="#a97759" opacity=".35" d="M7.8 13.3C10.7 15.5 16.6 15.5 19.5 13.3L20.1 16.9C16.6 17.7 10.7 17.7 7.5 16.6Z"/><path fill="none" stroke="#a97759" stroke-width="0.3" d="M12.9 3.4C11.9 9.0 12.8 13.3 13.7 16.3M14.8 3.8C15.7 9.0 14.8 13.3 13.9 16.3M9.3 6.8C8.4 11.2 9.0 14.1 9.7 16.9M18.0 6.8C18.9 11.2 18.3 14.1 17.6 17.2"/><path fill="#ddb088" opacity=".5" d="M7.8 6.0C11.5 4.1 15.8 4.1 19.5 6.0C15.8 5.3 11.5 5.3 7.8 6.0Z"/></g></svg></div>
<div style="left:947.4px;top:593.6px;width:11.6px;height:11.6px;background:#22c55e;border-radius:6px;"></div>
<svg style="left:948.4px;top:594.7px;" width="9.4" height="9.4" viewBox="0 0 16 16"><path d="M3.200 8.600 6.500 11.600 12.800 4.600" fill="none" stroke="#fff" stroke-width="1.800" stroke-linecap="round" stroke-linejoin="round"/></svg>
<div class="clip" style="left:970px;top:597.2px;width:35.2px;height:90.9px;background:#fff;border-radius:2.600px;opacity:.53;box-shadow:inset 0 0 0 0.6px rgba(255,255,255,.25);"><svg style="left:0;top:0" width="35.2" height="90.9" viewBox="0 0 35.2 90.9"><path fill="#f7dccb" d="M15.9 49.3L12.1 49.3L10.8 71.1L15.0 71.1Z"/><path fill="#4e352c" d="M15.2 68.0L10.8 68.0L9.5 84.2L13.0 84.2Z"/><ellipse cx="10.4" cy="85.5" rx="3.5" ry="1.5" fill="#6b4630"/><path fill="#f7dccb" d="M19.3 49.3L23.1 49.3L24.4 71.1L20.2 71.1Z"/><path fill="#4e352c" d="M20.0 68.0L24.4 68.0L25.7 84.2L22.2 84.2Z"/><ellipse cx="24.8" cy="85.5" rx="3.5" ry="1.5" fill="#6b4630"/><path fill="#3d5fa8" d="M11.5 38.8L23.7 38.8L26.3 54.5L8.9 54.5Z"/><path fill="#fff" stroke="#c5c9d4" stroke-width="0.5" d="M11.3 18.7L23.9 18.7L24.9 42.3L10.3 42.3Z"/><path fill="#fff" stroke="#c5c9d4" stroke-width="0.5" d="M12.4 18.7L9.7 20.5L8.2 41.4L10.8 42.3Z"/><circle cx="9.2" cy="43.6" r="1.2" fill="#fbe5d5"/><path fill="#fff" stroke="#c5c9d4" stroke-width="0.5" d="M22.8 18.7L25.5 20.5L27.0 41.4L24.4 42.3Z"/><circle cx="26.0" cy="43.6" r="1.2" fill="#fbe5d5"/><g><path fill="#c8946d" d="M11.3 16.6C9.4 11.9 9.8 1.6 17.6 1.6C25.4 1.6 25.8 11.9 24.2 17.0C22.0 17.7 20.2 17.0 19.1 15.7L16.1 15.7C15.3 17.0 13.2 17.5 11.3 16.6Z"/><path fill="#a97759" opacity=".35" d="M11.7 13.3C14.7 15.5 20.5 15.5 23.5 13.3L24.1 16.9C20.5 17.7 14.7 17.7 11.4 16.6Z"/><path fill="none" stroke="#a97759" stroke-width="0.3" d="M16.9 3.4C15.8 9.0 16.7 13.3 17.6 16.3M18.8 3.8C19.7 9.0 18.8 13.3 17.9 16.3M13.2 6.8C12.3 11.2 12.9 14.1 13.6 16.9M22.0 6.8C22.9 11.2 22.3 14.1 21.6 17.2"/><path fill="#ddb088" opacity=".5" d="M11.7 6.0C15.4 4.1 19.8 4.1 23.5 6.0C19.8 5.3 15.4 5.3 11.7 6.0Z"/></g></svg></div>
<div class="clip" style="left:1017.9px;top:597.2px;width:28.5px;height:90.9px;background:#fff;border-radius:2.600px;opacity:.53;box-shadow:inset 0 0 0 0.6px rgba(255,255,255,.25);"><svg style="left:0;top:0" width="28.5" height="90.9" viewBox="0 0 28.5 90.9"><path fill="#f7dccb" d="M12.5 49.3L8.8 49.3L7.4 71.1L11.6 71.1Z"/><path fill="#4e352c" d="M11.8 68.0L7.4 68.0L6.1 84.2L9.6 84.2Z"/><ellipse cx="7.0" cy="85.5" rx="3.5" ry="1.5" fill="#6b4630"/><path fill="#f7dccb" d="M16.0 49.3L19.7 49.3L21.1 71.1L16.9 71.1Z"/><path fill="#4e352c" d="M16.7 68.0L21.1 68.0L22.4 84.2L18.9 84.2Z"/><ellipse cx="21.5" cy="85.5" rx="3.5" ry="1.5" fill="#6b4630"/><path fill="#3d5fa8" d="M8.1 38.8L20.4 38.8L23.0 54.5L5.5 54.5Z"/><path fill="#fff" stroke="#c5c9d4" stroke-width="0.5" d="M8.0 18.7L20.5 18.7L21.6 42.3L6.9 42.3Z"/><path fill="#fff" stroke="#c5c9d4" stroke-width="0.5" d="M9.0 18.7L6.4 20.5L4.8 41.4L7.4 42.3Z"/><circle cx="5.9" cy="43.6" r="1.2" fill="#fbe5d5"/><path fill="#fff" stroke="#c5c9d4" stroke-width="0.5" d="M19.5 18.7L22.1 20.5L23.7 41.4L21.1 42.3Z"/><circle cx="22.6" cy="43.6" r="1.2" fill="#fbe5d5"/><g><path fill="#c8946d" d="M7.9 16.6C6.0 11.9 6.5 1.6 14.2 1.6C22.0 1.6 22.5 11.9 20.8 17.0C18.6 17.7 16.9 17.0 15.7 15.7L12.8 15.7C11.9 17.0 9.9 17.5 7.9 16.6Z"/><path fill="#a97759" opacity=".35" d="M8.4 13.3C11.3 15.5 17.2 15.5 20.1 13.3L20.7 16.9C17.2 17.7 11.3 17.7 8.1 16.6Z"/><path fill="none" stroke="#a97759" stroke-width="0.3" d="M13.5 3.4C12.5 9.0 13.4 13.3 14.2 16.3M15.4 3.8C16.3 9.0 15.4 13.3 14.5 16.3M9.9 6.8C9.0 11.2 9.6 14.1 10.3 16.9M18.6 6.8C19.5 11.2 18.9 14.1 18.2 17.2"/><path fill="#ddb088" opacity=".5" d="M8.4 6.0C12.1 4.1 16.4 4.1 20.1 6.0C16.4 5.3 12.1 5.3 8.4 6.0Z"/></g></svg></div>
<div class="clip" style="left:373.4px;top:702px;width:90.8px;height:91.3px;background:#fff;border-radius:2.600px;opacity:.53;box-shadow:inset 0 0 0 0.6px rgba(255,255,255,.25);"><svg style="left:0;top:0" width="90.8" height="91.3" viewBox="0 0 90.8 91.3"><g><path fill="#c8946d" d="M9.3 92.6C-2.1 64.4 0.5 2.7 47.2 2.7C93.9 2.7 96.5 64.4 86.9 95.2C73.6 99.6 63.1 95.2 56.0 87.3L38.4 87.3C33.1 95.2 20.8 97.9 9.3 92.6Z"/><path fill="#a97759" d="M38.4 55.6L84.2 55.6L78.9 96.1L38.4 96.1Z"/><path fill="#f1bfa8" d="M43.7 74.1L61.3 74.1L64.0 104.9L41.1 104.9Z"/><path fill="#fbe5d5" d="M15.5 29.2C12.9 66.2 27.0 85.5 40.2 87.3C54.3 83.8 65.7 68.8 63.1 29.2Z"/><ellipse cx="70.1" cy="60.0" rx="4.8" ry="7.5" fill="#fbe5d5" stroke="#d9a58f" stroke-width="1.0"/><path fill="#c8946d" d="M62.2 20.4C69.2 46.8 65.7 68.8 71.0 90.8L86.9 95.2L90.4 46.8L82.4 20.4Z"/><path fill="#c8946d" d="M22.6 20.4C15.5 46.8 18.2 68.8 13.7 90.8L8.5 93.5L4.1 46.8L12.0 20.4Z"/><path fill="#c8946d" d="M8.5 59.1C4.9 29.2 17.3 5.4 47.2 5.4C77.2 5.4 89.5 29.2 71.9 62.6L61.3 43.3L54.3 52.1L49.9 38.0L41.1 51.2L35.8 29.2L27.0 50.3L19.9 43.3Z"/><path fill="#ddb088" opacity=".55" d="M10.2 31.8C34.0 16.8 60.4 16.8 84.2 31.8C60.4 23.9 34.0 23.9 10.2 31.8Z"/><path fill="none" stroke="#a97759" stroke-width="1.0" d="M35.8 7.1C21.7 20.4 18.2 38.0 21.7 50.3M39.3 7.1C56.9 20.4 62.2 38.0 60.4 50.3M85.1 38.0C91.3 60.0 85.1 77.6 82.4 94.3M8.5 38.0C3.2 60.0 8.5 77.6 13.7 92.6M9.3 92.6C-2.1 64.4 0.5 2.7 47.2 2.7C93.9 2.7 96.5 64.4 86.9 95.2"/><ellipse cx="24.8" cy="55.6" rx="4.8" ry="8.4" fill="#fff"/><ellipse cx="24.8" cy="56.6" rx="3.7" ry="7.3" fill="#7a4320"/><ellipse cx="24.8" cy="58.2" rx="2.0" ry="4.0" fill="#b06a30"/><path d="M19.2 51.2Q24.8 44.1 30.3 51.2" stroke="#3a241a" stroke-width="1.9" fill="none"/><circle cx="23.5" cy="52.5" r="1.8" fill="#fff"/><path d="M19.9 41.5L29.2 38.9" stroke="#a97759" stroke-width="1.1" fill="none"/><ellipse cx="50.3" cy="55.6" rx="6.3" ry="8.4" fill="#fff"/><ellipse cx="50.3" cy="56.6" rx="4.8" ry="7.3" fill="#7a4320"/><ellipse cx="50.3" cy="58.2" rx="2.7" ry="4.0" fill="#b06a30"/><path d="M43.0 51.2Q50.3 44.1 57.6 51.2" stroke="#3a241a" stroke-width="1.9" fill="none"/><circle cx="48.6" cy="52.5" r="1.8" fill="#fff"/><path d="M44.0 41.5L56.1 38.9" stroke="#a97759" stroke-width="1.1" fill="none"/><ellipse cx="22.1" cy="67.9" rx="4.8" ry="2.5" fill="#f3b3a0" opacity=".6"/><ellipse cx="54.7" cy="67.9" rx="4.8" ry="2.5" fill="#f3b3a0" opacity=".6"/><path fill="#e27f6e" stroke="#6b3a2c" stroke-width="0.8" d="M29.6 70.6C36.4 69.1 44.1 68.7 49.0 69.1C49.0 80.8 32.5 84.6 29.6 70.6Z"/><path fill="#fff" d="M31.1 71.1C36.4 69.9 44.1 69.5 47.8 69.9L47.0 72.2C42.2 72.2 36.4 72.6 32.0 73.2Z"/><circle cx="79.2" cy="37.7" r="2.9" fill="#e58bb8"/><circle cx="77.7" cy="42.1" r="2.9" fill="#e58bb8"/><circle cx="73.0" cy="42.0" r="2.9" fill="#e58bb8"/><circle cx="71.6" cy="37.6" r="2.9" fill="#e58bb8"/><circle cx="75.5" cy="34.9" r="2.9" fill="#e58bb8"/><circle cx="75.4" cy="38.9" r="1.7" fill="#fff3d0"/></g></svg></div>
<div class="clip" style="left:478px;top:702px;width:70.2px;height:91.3px;background:#fff;border-radius:2.600px;opacity:.53;box-shadow:inset 0 0 0 0.6px rgba(255,255,255,.25);"><svg style="left:0;top:0" width="70.2" height="91.3" viewBox="0 0 70.2 91.3"><g transform="translate(70.2 0) scale(-1 1)"><path fill="#fff" stroke="#c5c9d4" stroke-width="0.7" d="M29.6 57.5L54.3 56.4L69.0 68.4L51.5 95.8L10.5 95.8L5.0 76.7Z"/><path fill="none" stroke="#c5c9d4" stroke-width="0.7" d="M40.6 60.2L57.0 76.7L43.3 87.6M29.6 60.2L18.7 82.1"/><path fill="#2b6cbf" d="M25.8 73.9L14.3 67.5L15.2 80.8ZM25.8 73.9L37.3 67.5L36.4 80.8ZM24.4 75.1L18.9 91.2L24.6 90.0ZM27.2 75.1L33.2 90.5L27.6 90.0Z"/><path d="M25.8 73.9L24.9 91.2M25.8 73.9L28.1 90.0" stroke="#3b2a2a" stroke-width="1.4" fill="none"/><circle cx="25.8" cy="73.9" r="2.1" fill="#1f4f96"/><g><path fill="#c8946d" d="M11.6 58.6C4.4 41.1 6.1 2.7 35.1 2.7C64.1 2.7 65.8 41.1 59.7 60.2C51.5 63.0 45.0 60.2 40.6 55.3L29.6 55.3C26.3 60.2 18.7 61.9 11.6 58.6Z"/><path fill="#a97759" d="M29.6 35.6L58.1 35.6L54.8 60.8L29.6 60.8Z"/><path fill="#f1bfa8" d="M32.9 47.1L43.9 47.1L45.5 66.3L31.3 66.3Z"/><path fill="#fbe5d5" d="M15.4 19.2C13.7 42.2 22.5 54.2 30.7 55.3C39.5 53.1 46.6 43.8 45.0 19.2Z"/><ellipse cx="49.3" cy="38.3" rx="3.0" ry="4.7" fill="#fbe5d5" stroke="#d9a58f" stroke-width="0.6"/><path fill="#c8946d" d="M44.4 13.7C48.8 30.1 46.6 43.8 49.9 57.5L59.7 60.2L61.9 30.1L57.0 13.7Z"/><path fill="#c8946d" d="M19.8 13.7C15.4 30.1 17.0 43.8 14.3 57.5L11.0 59.1L8.3 30.1L13.2 13.7Z"/><path fill="#c8946d" d="M11.0 37.8C8.8 19.2 16.5 4.4 35.1 4.4C53.7 4.4 61.4 19.2 50.4 40.0L43.9 27.9L39.5 33.4L36.7 24.6L31.3 32.9L28.0 19.2L22.5 32.3L18.1 27.9Z"/><path fill="#ddb088" opacity=".55" d="M12.1 20.8C26.9 11.5 43.3 11.5 58.1 20.8C43.3 15.9 26.9 15.9 12.1 20.8Z"/><path fill="none" stroke="#a97759" stroke-width="0.6" d="M28.0 5.5C19.2 13.7 17.0 24.6 19.2 32.3M30.2 5.5C41.1 13.7 44.4 24.6 43.3 32.3M58.6 24.6C62.5 38.3 58.6 49.3 57.0 59.7M11.0 24.6C7.7 38.3 11.0 49.3 14.3 58.6M11.6 58.6C4.4 41.1 6.1 2.7 35.1 2.7C64.1 2.7 65.8 41.1 59.7 60.2"/><ellipse cx="21.1" cy="35.6" rx="3.0" ry="5.2" fill="#fff"/><ellipse cx="21.1" cy="36.2" rx="2.3" ry="4.5" fill="#7a4320"/><ellipse cx="21.1" cy="37.2" rx="1.3" ry="2.5" fill="#b06a30"/><path d="M17.7 32.9Q21.1 28.5 24.6 32.9" stroke="#3a241a" stroke-width="1.2" fill="none"/><circle cx="20.3" cy="33.7" r="1.1" fill="#fff"/><path d="M18.1 26.8L23.9 25.2" stroke="#a97759" stroke-width="0.7" fill="none"/><ellipse cx="37.0" cy="35.6" rx="3.9" ry="5.2" fill="#fff"/><ellipse cx="37.0" cy="36.2" rx="3.0" ry="4.5" fill="#7a4320"/><ellipse cx="37.0" cy="37.2" rx="1.7" ry="2.5" fill="#b06a30"/><path d="M32.5 32.9Q37.0 28.5 41.5 32.9" stroke="#3a241a" stroke-width="1.2" fill="none"/><circle cx="36.0" cy="33.7" r="1.1" fill="#fff"/><path d="M33.1 26.8L40.6 25.2" stroke="#a97759" stroke-width="0.7" fill="none"/><ellipse cx="19.5" cy="43.3" rx="3.0" ry="1.5" fill="#f3b3a0" opacity=".6"/><ellipse cx="39.8" cy="43.3" rx="3.0" ry="1.5" fill="#f3b3a0" opacity=".6"/><path d="M28.8 47.6Q30.2 46.3 31.5 47.6" stroke="#8a4a3a" stroke-width="0.8" fill="none"/><circle cx="55.0" cy="24.5" r="1.8" fill="#e58bb8"/><circle cx="54.0" cy="27.2" r="1.8" fill="#e58bb8"/><circle cx="51.1" cy="27.2" r="1.8" fill="#e58bb8"/><circle cx="50.3" cy="24.4" r="1.8" fill="#e58bb8"/><circle cx="52.7" cy="22.7" r="1.8" fill="#e58bb8"/><circle cx="52.6" cy="25.2" r="1.0" fill="#fff3d0"/></g></g></svg></div>
<div class="clip" style="left:561.8px;top:702px;width:73.4px;height:91.3px;background:#fff;border-radius:2.600px;opacity:.53;box-shadow:inset 0 0 0 0.6px rgba(255,255,255,.25);"><svg style="left:0;top:0" width="73.4" height="91.3" viewBox="0 0 73.4 91.3"><g><path fill="#fff" stroke="#c5c9d4" stroke-width="0.7" d="M31.0 60.0L56.7 58.8L72.2 71.4L53.9 100.1L10.9 100.1L5.2 80.0Z"/><path fill="none" stroke="#c5c9d4" stroke-width="0.7" d="M42.4 62.9L59.6 80.0L45.3 91.5M31.0 62.9L19.5 85.8"/><path fill="#2b6cbf" d="M27.0 77.2L14.9 70.4L15.9 84.4ZM27.0 77.2L39.0 70.4L38.0 84.4ZM25.5 78.4L19.8 95.2L25.8 94.0ZM28.4 78.4L34.7 94.5L28.9 94.0Z"/><path d="M27.0 77.2L26.0 95.2M27.0 77.2L29.4 94.0" stroke="#3b2a2a" stroke-width="1.4" fill="none"/><circle cx="27.0" cy="77.2" r="2.2" fill="#1f4f96"/><g><path fill="#c8946d" d="M12.1 61.1C4.6 42.8 6.4 2.7 36.7 2.7C67.0 2.7 68.8 42.8 62.5 62.9C53.9 65.7 47.0 62.9 42.4 57.7L31.0 57.7C27.5 62.9 19.5 64.6 12.1 61.1Z"/><path fill="#a97759" d="M31.0 37.1L60.7 37.1L57.3 63.4L31.0 63.4Z"/><path fill="#f1bfa8" d="M34.4 49.1L45.9 49.1L47.6 69.2L32.7 69.2Z"/><path fill="#fbe5d5" d="M16.1 19.9C14.4 44.0 23.5 56.6 32.1 57.7C41.3 55.4 48.7 45.7 47.0 19.9Z"/><ellipse cx="51.6" cy="40.0" rx="3.1" ry="4.9" fill="#fbe5d5" stroke="#d9a58f" stroke-width="0.6"/><path fill="#c8946d" d="M46.4 14.2C51.0 31.4 48.7 45.7 52.2 60.0L62.5 62.9L64.8 31.4L59.6 14.2Z"/><path fill="#c8946d" d="M20.7 14.2C16.1 31.4 17.8 45.7 14.9 60.0L11.5 61.7L8.6 31.4L13.8 14.2Z"/><path fill="#c8946d" d="M11.5 39.4C9.2 19.9 17.2 4.5 36.7 4.5C56.2 4.5 64.2 19.9 52.7 41.7L45.9 29.1L41.3 34.8L38.4 25.6L32.7 34.2L29.3 19.9L23.5 33.7L19.0 29.1Z"/><path fill="#ddb088" opacity=".55" d="M12.7 21.6C28.1 11.9 45.3 11.9 60.7 21.6C45.3 16.5 28.1 16.5 12.7 21.6Z"/><path fill="none" stroke="#a97759" stroke-width="0.6" d="M29.3 5.6C20.1 14.2 17.8 25.6 20.1 33.7M31.5 5.6C43.0 14.2 46.4 25.6 45.3 33.7M61.3 25.6C65.3 40.0 61.3 51.4 59.6 62.3M11.5 25.6C8.1 40.0 11.5 51.4 14.9 61.1M12.1 61.1C4.6 42.8 6.4 2.7 36.7 2.7C67.0 2.7 68.8 42.8 62.5 62.9"/><ellipse cx="22.1" cy="37.1" rx="3.1" ry="5.4" fill="#fff"/><ellipse cx="22.1" cy="37.8" rx="2.4" ry="4.8" fill="#7a4320"/><ellipse cx="22.1" cy="38.8" rx="1.3" ry="2.6" fill="#b06a30"/><path d="M18.5 34.2Q22.1 29.6 25.7 34.2" stroke="#3a241a" stroke-width="1.3" fill="none"/><circle cx="21.3" cy="35.1" r="1.1" fill="#fff"/><path d="M19.0 27.9L25.0 26.2" stroke="#a97759" stroke-width="0.7" fill="none"/><ellipse cx="38.7" cy="37.1" rx="4.1" ry="5.4" fill="#fff"/><ellipse cx="38.7" cy="37.8" rx="3.1" ry="4.8" fill="#7a4320"/><ellipse cx="38.7" cy="38.8" rx="1.7" ry="2.6" fill="#b06a30"/><path d="M34.0 34.2Q38.7 29.6 43.4 34.2" stroke="#3a241a" stroke-width="1.3" fill="none"/><circle cx="37.6" cy="35.1" r="1.1" fill="#fff"/><path d="M34.6 27.9L42.5 26.2" stroke="#a97759" stroke-width="0.7" fill="none"/><ellipse cx="20.4" cy="45.1" rx="3.1" ry="1.6" fill="#f3b3a0" opacity=".6"/><ellipse cx="41.6" cy="45.1" rx="3.1" ry="1.6" fill="#f3b3a0" opacity=".6"/><path fill="#e27f6e" stroke="#6b3a2c" stroke-width="0.5" d="M25.2 46.9C29.7 45.9 34.7 45.6 37.8 45.9C37.8 53.5 27.1 56.0 25.2 46.9Z"/><path fill="#fff" d="M26.2 47.2C29.7 46.4 34.7 46.2 37.1 46.4L36.6 47.9C33.4 47.9 29.7 48.2 26.8 48.6Z"/><circle cx="57.5" cy="25.5" r="1.9" fill="#e58bb8"/><circle cx="56.5" cy="28.3" r="1.9" fill="#e58bb8"/><circle cx="53.5" cy="28.3" r="1.9" fill="#e58bb8"/><circle cx="52.6" cy="25.4" r="1.9" fill="#e58bb8"/><circle cx="55.1" cy="23.6" r="1.9" fill="#e58bb8"/><circle cx="55.0" cy="26.2" r="1.1" fill="#fff3d0"/></g></g></svg></div>
<div style="left:648px;top:700.8px;width:42.1px;height:93.7px;background:#22c55e;border-radius:3.6px;"></div>
<div class="clip" style="left:649.2px;top:702px;width:39.7px;height:91.3px;background:#fff;border-radius:2.600px;"><svg style="left:0;top:0" width="39.7" height="91.3" viewBox="0 0 39.7 91.3"><path fill="#f7dccb" d="M19.1 49.8L13.4 49.8L12.1 71.6L16.3 71.6Z"/><path fill="#4e352c" d="M16.5 68.5L12.1 68.5L10.8 84.7L14.3 84.7Z"/><ellipse cx="11.7" cy="86.0" rx="3.5" ry="1.5" fill="#6b4630"/><path fill="#f7dccb" d="M22.6 49.8L28.3 49.8L29.6 71.6L25.4 71.6Z"/><path fill="#4e352c" d="M25.2 68.5L29.6 68.5L30.9 84.7L27.4 84.7Z"/><ellipse cx="30.0" cy="86.0" rx="3.5" ry="1.5" fill="#6b4630"/><path fill="#3d5fa8" d="M14.7 39.3L26.9 39.3L31.7 55.0L9.9 55.0Z"/><path fill="#fff" stroke="#c5c9d4" stroke-width="0.5" d="M13.4 19.3L28.3 19.3L29.3 42.8L12.4 42.8Z"/><rect x="18.2" y="21.9" width="5.2" height="18.3" fill="#4b4058"/><path fill="#3d5fa8" d="M17.8 39.3L23.9 39.3L25.2 43.7L16.5 43.7Z"/><path fill="#fff" stroke="#c5c9d4" stroke-width="0.5" d="M14.3 19.3L4.3 30.6L12.1 39.3L14.3 36.7L9.5 30.6L14.7 25.4Z"/><circle cx="13.4" cy="38.4" r="1.4" fill="#fbe5d5"/><path fill="#fff" stroke="#c5c9d4" stroke-width="0.5" d="M27.4 19.3L37.4 30.6L29.6 39.3L27.4 36.7L32.2 30.6L26.9 25.4Z"/><circle cx="28.3" cy="38.4" r="1.4" fill="#fbe5d5"/><path fill="#2b6cbf" d="M20.8 22.3L16.9 20.1L17.2 24.7ZM20.8 22.3L24.8 20.1L24.5 24.7ZM20.4 22.7L18.5 28.2L20.5 27.8ZM21.3 22.7L23.4 28.0L21.5 27.8Z"/><path d="M20.8 22.3L20.5 28.2M20.8 22.3L21.6 27.8" stroke="#3b2a2a" stroke-width="0.6" fill="none"/><circle cx="20.8" cy="22.3" r="0.7" fill="#1f4f96"/><g><path fill="#c8946d" d="M14.5 17.1C12.6 12.4 13.1 2.2 20.8 2.2C28.6 2.2 29.0 12.4 27.4 17.6C25.2 18.3 23.5 17.6 22.3 16.2L19.4 16.2C18.5 17.6 16.4 18.0 14.5 17.1Z"/><path fill="#a97759" d="M14.7 11.0L27.0 11.0L26.1 17.7L15.6 17.7Z"/><path fill="#f1bfa8" d="M19.4 15.5L22.3 15.5L22.7 20.6L18.9 20.6Z"/><path fill="#fbe5d5" d="M16.0 6.6C15.6 12.7 18.6 17.4 20.8 17.7C23.2 17.1 26.1 13.2 25.7 6.6Z"/><path fill="#c8946d" d="M24.5 5.1C25.7 9.5 25.1 13.2 26.0 16.8L27.4 17.6L28.0 9.5L26.7 5.1Z"/><path fill="#c8946d" d="M17.2 5.1C16.0 9.5 16.4 13.2 15.7 16.8L14.4 17.3L13.7 9.5L15.0 5.1Z"/><path fill="#c8946d" d="M14.8 11.5C13.8 6.6 15.9 2.6 20.8 2.6C25.8 2.6 27.9 6.6 27.1 12.1L25.4 8.9L24.2 10.4L22.6 8.0L21.1 10.2L20.3 6.6L18.8 10.1L16.7 8.9Z"/><path fill="#ddb088" opacity=".55" d="M14.7 7.0C18.6 4.5 23.0 4.5 27.0 7.0C23.0 5.7 18.6 5.7 14.7 7.0Z"/><path fill="none" stroke="#a97759" stroke-width="0.3" d="M20.3 2.9C17.9 5.1 17.3 8.0 17.9 10.1M20.8 2.9C23.8 5.1 24.7 8.0 24.4 10.1M27.1 8.0C28.2 11.7 27.1 14.6 26.7 17.4M14.4 8.0C13.5 11.7 14.4 14.6 15.3 17.1M14.5 17.1C12.6 12.4 13.1 2.2 20.8 2.2C28.6 2.2 29.0 12.4 27.4 17.6"/><ellipse cx="18.4" cy="11.4" rx="1.1" ry="1.4" fill="#fff"/><ellipse cx="18.4" cy="11.6" rx="0.9" ry="1.2" fill="#7a4320"/><ellipse cx="18.4" cy="11.8" rx="0.5" ry="0.7" fill="#b06a30"/><path d="M17.1 10.7Q18.4 9.5 19.7 10.7" stroke="#3a241a" stroke-width="0.5" fill="none"/><circle cx="18.1" cy="10.9" r="0.3" fill="#fff"/><path d="M17.3 9.1L19.5 8.6" stroke="#a97759" stroke-width="0.4" fill="none"/><ellipse cx="23.3" cy="11.4" rx="1.1" ry="1.4" fill="#fff"/><ellipse cx="23.3" cy="11.6" rx="0.9" ry="1.2" fill="#7a4320"/><ellipse cx="23.3" cy="11.8" rx="0.5" ry="0.7" fill="#b06a30"/><path d="M21.9 10.7Q23.3 9.5 24.6 10.7" stroke="#3a241a" stroke-width="0.5" fill="none"/><circle cx="23.0" cy="10.9" r="0.3" fill="#fff"/><path d="M22.1 9.1L24.3 8.6" stroke="#a97759" stroke-width="0.4" fill="none"/><ellipse cx="18.0" cy="13.5" rx="0.8" ry="0.4" fill="#f3b3a0" opacity=".6"/><ellipse cx="24.0" cy="13.5" rx="0.8" ry="0.4" fill="#f3b3a0" opacity=".6"/><path fill="#e27f6e" stroke="#6b3a2c" stroke-width="0.3" d="M19.0 14.4C20.3 14.1 21.8 14.0 22.7 14.1C22.7 16.3 19.6 17.0 19.0 14.4Z"/><path fill="#fff" d="M19.3 14.5C20.3 14.3 21.8 14.2 22.5 14.3L22.3 14.7C21.4 14.7 20.3 14.8 19.5 14.9Z"/></g></svg></div>
<div style="left:680.7px;top:698.4px;width:11.6px;height:11.6px;background:#22c55e;border-radius:6px;"></div>
<svg style="left:681.7px;top:699.5px;" width="9.4" height="9.4" viewBox="0 0 16 16"><path d="M3.200 8.600 6.500 11.600 12.800 4.600" fill="none" stroke="#fff" stroke-width="1.800" stroke-linecap="round" stroke-linejoin="round"/></svg>
<div class="clip" style="left:702.8px;top:702px;width:82.4px;height:91.3px;background:#fff;border-radius:2.600px;opacity:.53;box-shadow:inset 0 0 0 0.6px rgba(255,255,255,.25);"><svg style="left:0;top:0" width="82.4" height="91.3" viewBox="0 0 82.4 91.3"><path fill="#c8946d" d="M41.2 2.3C22.2 1.8 11.5 18.3 9.1 36.5C5.8 50.2 0.0 63.9 3.3 78.5C8.2 91.3 24.7 93.1 41.2 94.0C57.7 93.1 75.8 91.3 79.9 77.6C83.2 63.9 77.5 50.2 74.2 36.5C71.7 18.3 61.0 1.8 41.2 2.3Z"/><path fill="#ddb088" opacity=".45" d="M14.0 27.4C28.8 18.3 53.6 18.3 69.2 27.4C53.6 23.7 28.8 23.7 14.0 27.4Z"/><path fill="none" stroke="#7d5341" stroke-width="1.0" d="M33.0 27.4C34.6 50.2 41.2 73.0 47.0 84.9C54.4 68.5 59.3 45.6 57.7 20.1M16.5 41.1C14.8 59.3 16.5 77.6 23.1 90.4M70.0 45.6C72.5 59.3 70.9 77.6 65.9 89.5M24.7 54.8C26.4 73.0 29.7 82.2 34.6 91.3"/></svg></div>
<div class="clip" style="left:799px;top:702px;width:81.2px;height:91.3px;background:#fff;border-radius:2.600px;opacity:.53;box-shadow:inset 0 0 0 0.6px rgba(255,255,255,.25);"><svg style="left:0;top:0" width="81.2" height="91.3" viewBox="0 0 81.2 91.3"><path fill="#c8946d" d="M40.6 2.3C21.9 1.8 11.4 18.3 8.9 36.5C5.7 50.2 0.0 63.9 3.2 78.5C8.1 91.3 24.4 93.1 40.6 94.0C56.8 93.1 74.7 91.3 78.8 77.6C82.0 63.9 76.3 50.2 73.1 36.5C70.6 18.3 60.1 1.8 40.6 2.3Z"/><path fill="#ddb088" opacity=".45" d="M13.8 27.4C28.4 18.3 52.8 18.3 68.2 27.4C52.8 23.7 28.4 23.7 13.8 27.4Z"/><path fill="none" stroke="#7d5341" stroke-width="1.0" d="M32.5 27.4C34.1 50.2 40.6 73.0 46.3 84.9C53.6 68.5 58.5 45.6 56.8 20.1M16.2 41.1C14.6 59.3 16.2 77.6 22.7 90.4M69.0 45.6C71.5 59.3 69.8 77.6 65.0 89.5M24.4 54.8C26.0 73.0 29.2 82.2 34.1 91.3"/></svg></div>
<div class="clip" style="left:892.9px;top:702px;width:87px;height:91.3px;background:#fff;border-radius:2.600px;opacity:.53;box-shadow:inset 0 0 0 0.6px rgba(255,255,255,.25);"><svg style="left:0;top:0" width="87" height="91.3" viewBox="0 0 87 91.3"><path fill="#c8946d" d="M43.5 2.3C23.5 1.8 12.2 18.3 9.6 36.5C6.1 50.2 0.0 63.9 3.5 78.5C8.7 91.3 26.1 93.1 43.5 94.0C60.9 93.1 80.0 91.3 84.4 77.6C87.9 63.9 81.8 50.2 78.3 36.5C75.7 18.3 64.4 1.8 43.5 2.3Z"/><path fill="#ddb088" opacity=".45" d="M14.8 27.4C30.4 18.3 56.6 18.3 73.1 27.4C56.6 23.7 30.4 23.7 14.8 27.4Z"/><path fill="none" stroke="#7d5341" stroke-width="1.0" d="M34.8 27.4C36.5 50.2 43.5 73.0 49.6 84.9C57.4 68.5 62.6 45.6 60.9 20.1M17.4 41.1C15.7 59.3 17.4 77.6 24.4 90.4M74.0 45.6C76.6 59.3 74.8 77.6 69.6 89.5M26.1 54.8C27.8 73.0 31.3 82.2 36.5 91.3"/></svg></div>
<div style="left:993px;top:700.8px;width:88.2px;height:93.7px;background:#22c55e;border-radius:3.6px;"></div>
<div class="clip" style="left:994.2px;top:702px;width:85.8px;height:91.3px;background:#fff;border-radius:2.600px;"><svg style="left:0;top:0" width="85.8" height="91.3" viewBox="0 0 85.8 91.3"><g><path fill="#c8946d" d="M7.9 85.9C-2.7 59.8 -0.3 2.7 42.9 2.7C86.1 2.7 88.5 59.8 79.6 88.3C67.4 92.4 57.6 88.3 51.1 81.0L34.7 81.0C29.9 88.3 18.4 90.8 7.9 85.9Z"/><path fill="#a97759" d="M8.7 51.6L77.1 51.6L72.2 89.1L13.6 89.1Z"/><path fill="#f1bfa8" d="M34.7 76.9L51.1 76.9L53.5 105.4L32.3 105.4Z"/><path fill="#fbe5d5" d="M16.0 27.2C13.6 61.4 30.7 87.5 42.9 89.1C55.9 85.9 72.2 63.9 69.8 27.2Z"/><path fill="#c8946d" d="M63.3 19.0C69.8 43.5 66.5 63.9 71.4 84.2L79.6 88.3L82.8 43.5L75.5 19.0Z"/><path fill="#c8946d" d="M22.5 19.0C16.0 43.5 18.4 63.9 14.4 84.2L7.0 86.7L3.0 43.5L10.3 19.0Z"/><path fill="#c8946d" d="M9.5 54.9C3.8 27.2 15.2 5.2 42.9 5.2C70.6 5.2 82.0 27.2 77.9 58.2L68.2 40.2L61.6 48.4L52.7 35.3L44.5 47.6L39.6 27.2L31.5 46.8L20.1 40.2Z"/><path fill="#ddb088" opacity=".55" d="M8.7 29.6C30.7 15.8 55.1 15.8 77.1 29.6C55.1 22.3 30.7 22.3 8.7 29.6Z"/><path fill="none" stroke="#a97759" stroke-width="0.9" d="M39.6 6.8C26.6 19.0 23.3 35.3 26.6 46.8M42.9 6.8C59.2 19.0 64.1 35.3 62.5 46.8M77.9 35.3C83.7 55.7 77.9 72.0 75.5 87.5M7.0 35.3C2.1 55.7 7.0 72.0 11.9 85.9M7.9 85.9C-2.7 59.8 -0.3 2.7 42.9 2.7C86.1 2.7 88.5 59.8 79.6 88.3"/><ellipse cx="29.5" cy="54.1" rx="6.4" ry="7.7" fill="#fff"/><ellipse cx="29.5" cy="55.1" rx="4.9" ry="6.8" fill="#7a4320"/><ellipse cx="29.5" cy="56.5" rx="2.7" ry="3.7" fill="#b06a30"/><path d="M22.1 50.0Q29.5 43.5 36.8 50.0" stroke="#3a241a" stroke-width="1.8" fill="none"/><circle cx="27.7" cy="51.2" r="1.6" fill="#fff"/><path d="M23.1 41.0L35.3 38.6" stroke="#a97759" stroke-width="1.0" fill="none"/><ellipse cx="56.3" cy="54.1" rx="6.4" ry="7.7" fill="#fff"/><ellipse cx="56.3" cy="55.1" rx="4.9" ry="6.8" fill="#7a4320"/><ellipse cx="56.3" cy="56.5" rx="2.7" ry="3.7" fill="#b06a30"/><path d="M49.0 50.0Q56.3 43.5 63.7 50.0" stroke="#3a241a" stroke-width="1.8" fill="none"/><circle cx="54.6" cy="51.2" r="1.6" fill="#fff"/><path d="M50.0 41.0L62.2 38.6" stroke="#a97759" stroke-width="1.0" fill="none"/><ellipse cx="27.0" cy="65.5" rx="4.5" ry="2.3" fill="#f3b3a0" opacity=".6"/><ellipse cx="60.4" cy="65.5" rx="4.5" ry="2.3" fill="#f3b3a0" opacity=".6"/><path fill="#e27f6e" stroke="#6b3a2c" stroke-width="0.7" d="M32.7 70.7C39.8 69.2 48.0 68.7 53.1 69.2C53.1 81.4 35.8 85.5 32.7 70.7Z"/><path fill="#fff" d="M34.2 71.2C39.8 70.0 48.0 69.6 51.9 70.0L51.1 72.4C46.0 72.4 39.8 72.8 35.3 73.4Z"/><circle cx="78.2" cy="34.5" r="2.1" fill="#e58bb8"/><circle cx="77.1" cy="37.7" r="2.1" fill="#e58bb8"/><circle cx="73.8" cy="37.6" r="2.1" fill="#e58bb8"/><circle cx="72.8" cy="34.4" r="2.1" fill="#e58bb8"/><circle cx="75.5" cy="32.5" r="2.1" fill="#e58bb8"/><circle cx="75.5" cy="35.3" r="1.2" fill="#fff3d0"/></g></svg></div>
<div style="left:1071.8px;top:698.4px;width:11.6px;height:11.6px;background:#22c55e;border-radius:6px;"></div>
<svg style="left:1072.8px;top:699.5px;" width="9.4" height="9.4" viewBox="0 0 16 16"><path d="M3.200 8.600 6.500 11.600 12.800 4.600" fill="none" stroke="#fff" stroke-width="1.800" stroke-linecap="round" stroke-linejoin="round"/></svg>
<div class="clip" style="left:373.4px;top:806.8px;width:91.9px;height:92.4px;background:#fff;border-radius:2.600px;opacity:.53;box-shadow:inset 0 0 0 0.6px rgba(255,255,255,.25);"><svg style="left:0;top:0" width="91.9" height="92.4" viewBox="0 0 91.9 92.4"><g><path fill="#c8946d" d="M9.5 93.7C-2.1 65.2 0.5 2.8 47.8 2.8C95.0 2.8 97.7 65.2 87.9 96.4C74.5 100.8 63.8 96.4 56.7 88.3L38.9 88.3C33.5 96.4 21.0 99.0 9.5 93.7Z"/><path fill="#a97759" d="M38.9 56.3L85.2 56.3L79.9 97.3L38.9 97.3Z"/><path fill="#f1bfa8" d="M44.2 75.0L62.1 75.0L64.7 106.2L41.5 106.2Z"/><path fill="#fbe5d5" d="M15.7 29.5C13.0 67.0 27.3 86.6 40.7 88.3C54.9 84.8 66.5 69.6 63.8 29.5Z"/><ellipse cx="71.0" cy="60.7" rx="4.9" ry="7.6" fill="#fbe5d5" stroke="#d9a58f" stroke-width="1.0"/><path fill="#c8946d" d="M62.9 20.6C70.1 47.3 66.5 69.6 71.9 91.9L87.9 96.4L91.5 47.3L83.4 20.6Z"/><path fill="#c8946d" d="M22.8 20.6C15.7 47.3 18.4 69.6 13.9 91.9L8.6 94.6L4.1 47.3L12.1 20.6Z"/><path fill="#c8946d" d="M8.6 59.8C5.0 29.5 17.5 5.4 47.8 5.4C78.1 5.4 90.6 29.5 72.7 63.4L62.1 43.8L54.9 52.7L50.5 38.4L41.5 51.8L36.2 29.5L27.3 50.9L20.2 43.8Z"/><path fill="#ddb088" opacity=".55" d="M10.3 32.2C34.4 17.0 61.2 17.0 85.2 32.2C61.2 24.2 34.4 24.2 10.3 32.2Z"/><path fill="none" stroke="#a97759" stroke-width="1.0" d="M36.2 7.2C21.9 20.6 18.4 38.4 21.9 50.9M39.8 7.2C57.6 20.6 62.9 38.4 61.2 50.9M86.1 38.4C92.4 60.7 86.1 78.5 83.4 95.5M8.6 38.4C3.2 60.7 8.6 78.5 13.9 93.7M9.5 93.7C-2.1 65.2 0.5 2.8 47.8 2.8C95.0 2.8 97.7 65.2 87.9 96.4"/><ellipse cx="25.1" cy="56.3" rx="4.9" ry="8.5" fill="#fff"/><ellipse cx="25.1" cy="57.3" rx="3.7" ry="7.4" fill="#7a4320"/><ellipse cx="25.1" cy="58.9" rx="2.1" ry="4.0" fill="#b06a30"/><path d="M19.4 51.8Q25.1 44.7 30.7 51.8" stroke="#3a241a" stroke-width="2.0" fill="none"/><circle cx="23.7" cy="53.1" r="1.8" fill="#fff"/><path d="M20.2 42.0L29.5 39.3" stroke="#a97759" stroke-width="1.1" fill="none"/><ellipse cx="50.9" cy="56.3" rx="6.4" ry="8.5" fill="#fff"/><ellipse cx="50.9" cy="57.3" rx="4.9" ry="7.4" fill="#7a4320"/><ellipse cx="50.9" cy="58.9" rx="2.7" ry="4.0" fill="#b06a30"/><path d="M43.6 51.8Q50.9 44.7 58.3 51.8" stroke="#3a241a" stroke-width="2.0" fill="none"/><circle cx="49.2" cy="53.1" r="1.8" fill="#fff"/><path d="M44.5 42.0L56.8 39.3" stroke="#a97759" stroke-width="1.1" fill="none"/><ellipse cx="22.4" cy="68.7" rx="4.9" ry="2.5" fill="#f3b3a0" opacity=".6"/><ellipse cx="55.4" cy="68.7" rx="4.9" ry="2.5" fill="#f3b3a0" opacity=".6"/><path fill="#e27f6e" stroke="#6b3a2c" stroke-width="0.8" d="M30.0 71.5C36.8 70.0 44.7 69.5 49.6 70.0C49.6 81.8 32.9 85.7 30.0 71.5Z"/><path fill="#fff" d="M31.4 71.9C36.8 70.8 44.7 70.4 48.4 70.8L47.6 73.1C42.7 73.1 36.8 73.5 32.4 74.1Z"/><circle cx="80.1" cy="38.1" r="2.9" fill="#e58bb8"/><circle cx="78.6" cy="42.6" r="2.9" fill="#e58bb8"/><circle cx="73.9" cy="42.5" r="2.9" fill="#e58bb8"/><circle cx="72.5" cy="38.0" r="2.9" fill="#e58bb8"/><circle cx="76.4" cy="35.3" r="2.9" fill="#e58bb8"/><circle cx="76.3" cy="39.3" r="1.7" fill="#fff3d0"/></g></svg></div>
<div class="clip" style="left:478.6px;top:806.8px;width:89.7px;height:92.4px;background:#fff;border-radius:2.600px;opacity:.53;box-shadow:inset 0 0 0 0.6px rgba(255,255,255,.25);"><svg style="left:0;top:0" width="89.7" height="92.4" viewBox="0 0 89.7 92.4"><g transform="translate(89.7 0) scale(-1 1)"><path fill="#c8946d" d="M6.3 94.3C-5.4 65.6 -2.7 2.8 44.9 2.8C92.4 2.8 95.1 65.6 85.2 97.0C71.8 101.4 61.0 97.0 53.8 88.9L35.9 88.9C30.5 97.0 17.9 99.6 6.3 94.3Z"/><path fill="#a97759" d="M35.9 56.6L82.5 56.6L77.1 97.9L35.9 97.9Z"/><path fill="#f1bfa8" d="M41.3 75.4L59.2 75.4L61.9 106.8L38.6 106.8Z"/><path fill="#fbe5d5" d="M12.6 29.7C9.9 67.4 24.2 87.1 37.7 88.9C52.0 85.3 63.7 70.0 61.0 29.7Z"/><ellipse cx="68.2" cy="61.1" rx="4.9" ry="7.6" fill="#fbe5d5" stroke="#d9a58f" stroke-width="1.0"/><path fill="#c8946d" d="M60.1 20.7C67.3 47.6 63.7 70.0 69.1 92.5L85.2 97.0L88.8 47.6L80.7 20.7Z"/><path fill="#c8946d" d="M19.7 20.7C12.6 47.6 15.2 70.0 10.8 92.5L5.4 95.2L0.9 47.6L9.0 20.7Z"/><path fill="#c8946d" d="M5.4 60.2C1.8 29.7 14.4 5.5 44.9 5.5C75.3 5.5 87.9 29.7 70.0 63.8L59.2 44.0L52.0 53.0L47.5 38.7L38.6 52.1L33.2 29.7L24.2 51.2L17.0 44.0Z"/><path fill="#ddb088" opacity=".55" d="M7.2 32.4C31.4 17.1 58.3 17.1 82.5 32.4C58.3 24.3 31.4 24.3 7.2 32.4Z"/><path fill="none" stroke="#a97759" stroke-width="1.0" d="M33.2 7.3C18.8 20.7 15.2 38.7 18.8 51.2M36.8 7.3C54.7 20.7 60.1 38.7 58.3 51.2M83.4 38.7C89.7 61.1 83.4 79.0 80.7 96.1M5.4 38.7C0.0 61.1 5.4 79.0 10.8 94.3M6.3 94.3C-5.4 65.6 -2.7 2.8 44.9 2.8C92.4 2.8 95.1 65.6 85.2 97.0"/><ellipse cx="22.0" cy="56.6" rx="4.9" ry="8.5" fill="#fff"/><ellipse cx="22.0" cy="57.7" rx="3.8" ry="7.4" fill="#7a4320"/><ellipse cx="22.0" cy="59.3" rx="2.1" ry="4.0" fill="#b06a30"/><path d="M16.3 52.1Q22.0 44.9 27.6 52.1" stroke="#3a241a" stroke-width="2.0" fill="none"/><circle cx="20.7" cy="53.5" r="1.8" fill="#fff"/><path d="M17.1 42.2L26.5 39.5" stroke="#a97759" stroke-width="1.1" fill="none"/><ellipse cx="48.0" cy="56.6" rx="6.4" ry="8.5" fill="#fff"/><ellipse cx="48.0" cy="57.7" rx="4.9" ry="7.4" fill="#7a4320"/><ellipse cx="48.0" cy="59.3" rx="2.7" ry="4.0" fill="#b06a30"/><path d="M40.6 52.1Q48.0 44.9 55.4 52.1" stroke="#3a241a" stroke-width="2.0" fill="none"/><circle cx="46.3" cy="53.5" r="1.8" fill="#fff"/><path d="M41.6 42.2L53.9 39.5" stroke="#a97759" stroke-width="1.1" fill="none"/><ellipse cx="19.3" cy="69.2" rx="4.9" ry="2.5" fill="#f3b3a0" opacity=".6"/><ellipse cx="52.5" cy="69.2" rx="4.9" ry="2.5" fill="#f3b3a0" opacity=".6"/><path d="M34.5 76.3Q36.8 74.1 39.0 76.3" stroke="#8a4a3a" stroke-width="1.3" fill="none"/></g></svg></div>
<div style="left:581px;top:805.6px;width:91.2px;height:94.8px;background:#22c55e;border-radius:3.6px;"></div>
<div class="clip" style="left:582.2px;top:806.8px;width:88.8px;height:92.4px;background:#fff;border-radius:2.600px;"><svg style="left:0;top:0" width="88.8" height="92.4" viewBox="0 0 88.8 92.4"><g><path fill="#c8946d" d="M9.1 90.6C-2.1 63.1 0.5 2.8 46.2 2.8C91.8 2.8 94.4 63.1 84.9 93.2C72.0 97.5 61.7 93.2 54.8 85.5L37.6 85.5C32.4 93.2 20.3 95.8 9.1 90.6Z"/><path fill="#a97759" d="M37.6 54.5L82.4 54.5L77.2 94.1L37.6 94.1Z"/><path fill="#f1bfa8" d="M42.7 72.5L60.0 72.5L62.5 102.7L40.1 102.7Z"/><path fill="#fbe5d5" d="M15.2 28.6C12.6 64.8 26.4 83.7 39.3 85.5C53.1 82.0 64.3 67.4 61.7 28.6Z"/><ellipse cx="68.6" cy="58.8" rx="4.7" ry="7.3" fill="#fbe5d5" stroke="#d9a58f" stroke-width="0.9"/><path fill="#c8946d" d="M60.8 20.0C67.7 45.8 64.3 67.4 69.4 88.9L84.9 93.2L88.4 45.8L80.6 20.0Z"/><path fill="#c8946d" d="M22.1 20.0C15.2 45.8 17.8 67.4 13.4 88.9L8.3 91.5L4.0 45.8L11.7 20.0Z"/><path fill="#c8946d" d="M8.3 57.9C4.8 28.6 16.9 5.4 46.2 5.4C75.5 5.4 87.5 28.6 70.3 61.3L60.0 42.4L53.1 51.0L48.8 37.2L40.1 50.1L35.0 28.6L26.4 49.3L19.5 42.4Z"/><path fill="#ddb088" opacity=".55" d="M10.0 31.2C33.3 16.6 59.1 16.6 82.4 31.2C59.1 23.4 33.3 23.4 10.0 31.2Z"/><path fill="none" stroke="#a97759" stroke-width="0.9" d="M35.0 7.1C21.2 20.0 17.8 37.2 21.2 49.3M38.4 7.1C55.7 20.0 60.8 37.2 59.1 49.3M83.2 37.2C89.2 58.8 83.2 76.0 80.6 92.4M8.3 37.2C3.1 58.8 8.3 76.0 13.4 90.6M9.1 90.6C-2.1 63.1 0.5 2.8 46.2 2.8C91.8 2.8 94.4 63.1 84.9 93.2"/><ellipse cx="24.2" cy="54.5" rx="4.7" ry="8.2" fill="#fff"/><ellipse cx="24.2" cy="55.5" rx="3.6" ry="7.1" fill="#7a4320"/><ellipse cx="24.2" cy="57.0" rx="2.0" ry="3.9" fill="#b06a30"/><path d="M18.8 50.1Q24.2 43.3 29.6 50.1" stroke="#3a241a" stroke-width="1.9" fill="none"/><circle cx="22.9" cy="51.4" r="1.7" fill="#fff"/><path d="M19.5 40.7L28.6 38.1" stroke="#a97759" stroke-width="1.0" fill="none"/><ellipse cx="49.2" cy="54.5" rx="6.2" ry="8.2" fill="#fff"/><ellipse cx="49.2" cy="55.5" rx="4.7" ry="7.1" fill="#7a4320"/><ellipse cx="49.2" cy="57.0" rx="2.6" ry="3.9" fill="#b06a30"/><path d="M42.1 50.1Q49.2 43.3 56.3 50.1" stroke="#3a241a" stroke-width="1.9" fill="none"/><circle cx="47.5" cy="51.4" r="1.7" fill="#fff"/><path d="M43.0 40.7L54.9 38.1" stroke="#a97759" stroke-width="1.0" fill="none"/><ellipse cx="21.6" cy="66.5" rx="4.7" ry="2.4" fill="#f3b3a0" opacity=".6"/><ellipse cx="53.5" cy="66.5" rx="4.7" ry="2.4" fill="#f3b3a0" opacity=".6"/><path fill="#e27f6e" stroke="#6b3a2c" stroke-width="0.8" d="M28.9 69.1C35.6 67.7 43.2 67.2 47.9 67.7C47.9 79.1 31.8 82.9 28.9 69.1Z"/><path fill="#fff" d="M30.4 69.6C35.6 68.5 43.2 68.1 46.8 68.5L46.0 70.8C41.3 70.8 35.6 71.1 31.3 71.7Z"/><circle cx="77.4" cy="36.9" r="2.8" fill="#e58bb8"/><circle cx="76.0" cy="41.3" r="2.8" fill="#e58bb8"/><circle cx="71.4" cy="41.2" r="2.8" fill="#e58bb8"/><circle cx="70.1" cy="36.8" r="2.8" fill="#e58bb8"/><circle cx="73.8" cy="34.2" r="2.8" fill="#e58bb8"/><circle cx="73.7" cy="38.1" r="1.6" fill="#fff3d0"/></g></svg></div>
<div style="left:662.8px;top:803.2px;width:11.6px;height:11.6px;background:#22c55e;border-radius:6px;"></div>
<svg style="left:663.8px;top:804.3px;" width="9.4" height="9.4" viewBox="0 0 16 16"><path d="M3.200 8.600 6.500 11.600 12.800 4.600" fill="none" stroke="#fff" stroke-width="1.800" stroke-linecap="round" stroke-linejoin="round"/></svg>
<div style="left:683.8px;top:805.6px;width:162px;height:94.8px;background:#22c55e;border-radius:3.6px;"></div>
<div class="clip" style="left:685.0px;top:806.8px;width:159.6px;height:92.4px;background:#fff;border-radius:2.600px;"><svg style="left:0;top:0" width="159.6" height="92.4" viewBox="0 0 159.6 92.4"><path fill="#f7dccb" d="M20.9 50.4L15.5 50.4L14.2 71.1L18.2 71.1Z"/><path fill="#4e352c" d="M18.4 68.2L14.2 68.2L13.0 83.5L16.3 83.5Z"/><ellipse cx="13.8" cy="84.7" rx="3.3" ry="1.4" fill="#6b4630"/><path fill="#f7dccb" d="M24.2 50.4L29.5 50.4L30.8 71.1L26.8 71.1Z"/><path fill="#4e352c" d="M26.6 68.2L30.8 68.2L32.0 83.5L28.7 83.5Z"/><ellipse cx="31.2" cy="84.7" rx="3.3" ry="1.4" fill="#6b4630"/><path fill="#3d5fa8" d="M16.7 40.5L28.3 40.5L32.8 55.4L12.2 55.4Z"/><path fill="#fff" stroke="#c5c9d4" stroke-width="0.5" d="M15.5 21.5L29.5 21.5L30.5 43.8L14.5 43.8Z"/><rect x="20.0" y="24.0" width="5.0" height="17.3" fill="#4b4058"/><path fill="#3d5fa8" d="M19.6 40.5L25.4 40.5L26.6 44.6L18.4 44.6Z"/><path fill="#fff" stroke="#c5c9d4" stroke-width="0.5" d="M16.3 21.5L6.8 32.2L14.2 40.5L16.3 38.0L11.8 32.2L16.7 27.3Z"/><circle cx="15.5" cy="39.7" r="1.3" fill="#fbe5d5"/><path fill="#fff" stroke="#c5c9d4" stroke-width="0.5" d="M28.7 21.5L38.2 32.2L30.8 40.5L28.7 38.0L33.2 32.2L28.3 27.3Z"/><circle cx="29.5" cy="39.7" r="1.3" fill="#fbe5d5"/><path fill="#2b6cbf" d="M22.5 24.4L18.8 22.3L19.1 26.6ZM22.5 24.4L26.2 22.3L25.9 26.6ZM22.1 24.8L20.3 30.0L22.1 29.6ZM22.9 24.8L24.9 29.8L23.1 29.6Z"/><path d="M22.5 24.4L22.2 30.0M22.5 24.4L23.2 29.6" stroke="#3b2a2a" stroke-width="0.6" fill="none"/><circle cx="22.5" cy="24.4" r="0.7" fill="#1f4f96"/><g><path fill="#c8946d" d="M16.5 19.5C14.7 15.0 15.1 5.3 22.5 5.3C29.9 5.3 30.3 15.0 28.7 19.9C26.7 20.6 25.0 19.9 23.9 18.6L21.1 18.6C20.3 19.9 18.3 20.3 16.5 19.5Z"/><path fill="#a97759" d="M16.7 13.6L28.3 13.6L27.5 20.0L17.5 20.0Z"/><path fill="#f1bfa8" d="M21.1 17.9L23.9 17.9L24.3 22.8L20.7 22.8Z"/><path fill="#fbe5d5" d="M17.9 9.5C17.5 15.3 20.4 19.8 22.5 20.0C24.7 19.5 27.5 15.7 27.1 9.5Z"/><path fill="#c8946d" d="M26.0 8.1C27.1 12.3 26.5 15.7 27.4 19.2L28.7 19.9L29.3 12.3L28.1 8.1Z"/><path fill="#c8946d" d="M19.0 8.1C17.9 12.3 18.3 15.7 17.6 19.2L16.4 19.6L15.7 12.3L17.0 8.1Z"/><path fill="#c8946d" d="M16.8 14.2C15.8 9.5 17.8 5.7 22.5 5.7C27.2 5.7 29.2 9.5 28.5 14.8L26.8 11.7L25.7 13.1L24.2 10.9L22.8 13.0L21.9 9.5L20.6 12.8L18.6 11.7Z"/><path fill="#ddb088" opacity=".55" d="M16.7 9.9C20.4 7.5 24.6 7.5 28.3 9.9C24.6 8.7 20.4 8.7 16.7 9.9Z"/><path fill="none" stroke="#a97759" stroke-width="0.3" d="M21.9 6.0C19.7 8.1 19.2 10.9 19.7 12.8M22.5 6.0C25.3 8.1 26.1 10.9 25.8 12.8M28.5 10.9C29.4 14.3 28.5 17.1 28.1 19.8M16.4 10.9C15.6 14.3 16.4 17.1 17.2 19.5M16.5 19.5C14.7 15.0 15.1 5.3 22.5 5.3C29.9 5.3 30.3 15.0 28.7 19.9"/><ellipse cx="20.2" cy="14.1" rx="1.1" ry="1.3" fill="#fff"/><ellipse cx="20.2" cy="14.2" rx="0.8" ry="1.2" fill="#7a4320"/><ellipse cx="20.2" cy="14.5" rx="0.5" ry="0.6" fill="#b06a30"/><path d="M19.0 13.4Q20.2 12.3 21.5 13.4" stroke="#3a241a" stroke-width="0.5" fill="none"/><circle cx="19.9" cy="13.6" r="0.3" fill="#fff"/><path d="M19.1 11.8L21.2 11.4" stroke="#a97759" stroke-width="0.4" fill="none"/><ellipse cx="24.8" cy="14.1" rx="1.1" ry="1.3" fill="#fff"/><ellipse cx="24.8" cy="14.2" rx="0.8" ry="1.2" fill="#7a4320"/><ellipse cx="24.8" cy="14.5" rx="0.5" ry="0.6" fill="#b06a30"/><path d="M23.5 13.4Q24.8 12.3 26.0 13.4" stroke="#3a241a" stroke-width="0.5" fill="none"/><circle cx="24.5" cy="13.6" r="0.3" fill="#fff"/><path d="M23.7 11.8L25.8 11.4" stroke="#a97759" stroke-width="0.4" fill="none"/><ellipse cx="19.8" cy="16.0" rx="0.8" ry="0.4" fill="#f3b3a0" opacity=".6"/><ellipse cx="25.5" cy="16.0" rx="0.8" ry="0.4" fill="#f3b3a0" opacity=".6"/><path fill="#e27f6e" stroke="#6b3a2c" stroke-width="0.3" d="M20.8 16.9C22.0 16.6 23.4 16.5 24.2 16.6C24.2 18.7 21.3 19.4 20.8 16.9Z"/><path fill="#fff" d="M21.0 17.0C22.0 16.8 23.4 16.7 24.0 16.8L23.9 17.2C23.0 17.2 22.0 17.3 21.2 17.4Z"/></g><path fill="#f7dccb" d="M47.2 50.4L43.6 50.4L42.4 71.1L46.4 71.1Z"/><path fill="#4e352c" d="M46.5 68.2L42.4 68.2L41.2 83.5L44.5 83.5Z"/><ellipse cx="42.0" cy="84.7" rx="3.3" ry="1.4" fill="#6b4630"/><path fill="#f7dccb" d="M50.5 50.4L54.0 50.4L55.3 71.1L51.3 71.1Z"/><path fill="#4e352c" d="M51.2 68.2L55.3 68.2L56.5 83.5L53.2 83.5Z"/><ellipse cx="55.7" cy="84.7" rx="3.3" ry="1.4" fill="#6b4630"/><path fill="#3d5fa8" d="M43.1 40.5L54.6 40.5L57.1 55.4L40.6 55.4Z"/><path fill="#fff" stroke="#c5c9d4" stroke-width="0.5" d="M42.9 21.5L54.8 21.5L55.8 43.8L41.9 43.8Z"/><path fill="#fff" stroke="#c5c9d4" stroke-width="0.5" d="M43.9 21.5L41.4 23.2L39.9 43.0L42.4 43.8Z"/><circle cx="40.9" cy="45.1" r="1.2" fill="#fbe5d5"/><path fill="#fff" stroke="#c5c9d4" stroke-width="0.5" d="M53.8 21.5L56.3 23.2L57.8 43.0L55.3 43.8Z"/><circle cx="56.8" cy="45.1" r="1.2" fill="#fbe5d5"/><g><path fill="#c8946d" d="M42.9 19.5C41.1 15.0 41.5 5.3 48.8 5.3C56.2 5.3 56.6 15.0 55.1 19.9C53.0 20.6 51.3 19.9 50.2 18.6L47.4 18.6C46.6 19.9 44.7 20.3 42.9 19.5Z"/><path fill="#a97759" opacity=".35" d="M43.3 16.4C46.1 18.5 51.6 18.5 54.4 16.4L54.9 19.8C51.6 20.6 46.1 20.6 43.0 19.5Z"/><path fill="none" stroke="#a97759" stroke-width="0.3" d="M48.1 7.0C47.2 12.3 48.0 16.4 48.8 19.2M49.9 7.4C50.8 12.3 49.9 16.4 49.1 19.2M44.7 10.2C43.8 14.3 44.4 17.1 45.1 19.8M53.0 10.2C53.8 14.3 53.3 17.1 52.6 20.0"/><path fill="#ddb088" opacity=".5" d="M43.3 9.5C46.8 7.7 50.9 7.7 54.4 9.5C50.9 8.8 46.8 8.8 43.3 9.5Z"/></g><path fill="#f7dccb" d="M70.2 50.4L66.6 50.4L65.4 71.1L69.3 71.1Z"/><path fill="#4e352c" d="M69.5 68.2L65.4 68.2L64.1 83.5L67.4 83.5Z"/><ellipse cx="65.0" cy="84.7" rx="3.3" ry="1.4" fill="#6b4630"/><path fill="#f7dccb" d="M73.5 50.4L77.0 50.4L78.3 71.1L74.3 71.1Z"/><path fill="#4e352c" d="M74.1 68.2L78.3 68.2L79.5 83.5L76.2 83.5Z"/><ellipse cx="78.7" cy="84.7" rx="3.3" ry="1.4" fill="#6b4630"/><path fill="#3d5fa8" d="M66.0 40.5L77.6 40.5L80.1 55.4L63.6 55.4Z"/><path fill="#fff" stroke="#c5c9d4" stroke-width="0.5" d="M65.9 21.5L77.8 21.5L78.8 43.8L64.9 43.8Z"/><path fill="#fff" stroke="#c5c9d4" stroke-width="0.5" d="M66.9 21.5L64.4 23.2L62.9 43.0L65.4 43.8Z"/><circle cx="63.9" cy="45.1" r="1.2" fill="#fbe5d5"/><path fill="#fff" stroke="#c5c9d4" stroke-width="0.5" d="M76.8 21.5L79.3 23.2L80.7 43.0L78.3 43.8Z"/><circle cx="79.8" cy="45.1" r="1.2" fill="#fbe5d5"/><g><path fill="#c8946d" d="M65.9 19.5C64.0 15.0 64.5 5.3 71.8 5.3C79.2 5.3 79.6 15.0 78.1 19.9C76.0 20.6 74.3 19.9 73.2 18.6L70.4 18.6C69.6 19.9 67.7 20.3 65.9 19.5Z"/><path fill="#a97759" opacity=".35" d="M66.3 16.4C69.0 18.5 74.6 18.5 77.4 16.4L77.9 19.8C74.6 20.6 69.0 20.6 66.0 19.5Z"/><path fill="none" stroke="#a97759" stroke-width="0.3" d="M71.1 7.0C70.2 12.3 71.0 16.4 71.8 19.2M72.9 7.4C73.8 12.3 72.9 16.4 72.1 19.2M67.7 10.2C66.8 14.3 67.4 17.1 68.1 19.8M76.0 10.2C76.8 14.3 76.3 17.1 75.6 20.0"/><path fill="#ddb088" opacity=".5" d="M66.3 9.5C69.7 7.7 73.9 7.7 77.4 9.5C73.9 8.8 69.7 8.8 66.3 9.5Z"/></g><path fill="#f7dccb" d="M134.8 50.4L131.3 50.4L130.0 71.1L134.0 71.1Z"/><path fill="#4e352c" d="M134.1 68.2L130.0 68.2L128.8 83.5L132.1 83.5Z"/><ellipse cx="129.6" cy="84.7" rx="3.3" ry="1.4" fill="#6b4630"/><path fill="#f7dccb" d="M138.1 50.4L141.7 50.4L142.9 71.1L138.9 71.1Z"/><path fill="#4e352c" d="M138.8 68.2L142.9 68.2L144.1 83.5L140.8 83.5Z"/><ellipse cx="143.3" cy="84.7" rx="3.3" ry="1.4" fill="#6b4630"/><path fill="#3d5fa8" d="M130.7 40.5L142.2 40.5L144.7 55.4L128.2 55.4Z"/><path fill="#fff" stroke="#c5c9d4" stroke-width="0.5" d="M130.5 21.5L142.4 21.5L143.4 43.8L129.5 43.8Z"/><path fill="#fff" stroke="#c5c9d4" stroke-width="0.5" d="M131.5 21.5L129.0 23.2L127.5 43.0L130.0 43.8Z"/><circle cx="128.5" cy="45.1" r="1.2" fill="#fbe5d5"/><path fill="#fff" stroke="#c5c9d4" stroke-width="0.5" d="M141.4 21.5L143.9 23.2L145.4 43.0L142.9 43.8Z"/><circle cx="144.4" cy="45.1" r="1.2" fill="#fbe5d5"/><g><path fill="#c8946d" d="M130.5 19.5C128.7 15.0 129.1 5.3 136.5 5.3C143.8 5.3 144.2 15.0 142.7 19.9C140.6 20.6 139.0 19.9 137.8 18.6L135.1 18.6C134.2 19.9 132.3 20.3 130.5 19.5Z"/><path fill="#a97759" opacity=".35" d="M130.9 16.4C133.7 18.5 139.2 18.5 142.0 16.4L142.6 19.8C139.2 20.6 133.7 20.6 130.6 19.5Z"/><path fill="none" stroke="#a97759" stroke-width="0.3" d="M135.8 7.0C134.8 12.3 135.6 16.4 136.5 19.2M137.6 7.4C138.4 12.3 137.6 16.4 136.7 19.2M132.3 10.2C131.5 14.3 132.0 17.1 132.7 19.8M140.6 10.2C141.5 14.3 140.9 17.1 140.2 20.0"/><path fill="#ddb088" opacity=".5" d="M130.9 9.5C134.4 7.7 138.5 7.7 142.0 9.5C138.5 8.8 134.4 8.8 130.9 9.5Z"/></g><path fill="#2b6cbf" d="M91.8 24.9L88.6 23.2L88.8 26.9ZM91.8 24.9L95.0 23.2L94.7 26.9ZM91.4 25.3L89.9 29.7L91.5 29.4ZM92.2 25.3L93.8 29.5L92.3 29.4Z"/><path d="M91.8 24.9L91.5 29.7M91.8 24.9L92.4 29.4" stroke="#3b2a2a" stroke-width="0.6" fill="none"/><circle cx="91.8" cy="24.9" r="0.6" fill="#1f4f96"/><g><path fill="#c8946d" d="M88.0 20.4C86.0 15.5 86.4 4.9 94.5 4.9C102.5 4.9 103.0 15.5 101.3 20.8C99.0 21.6 97.2 20.8 96.0 19.4L93.0 19.4C92.1 20.8 89.9 21.3 88.0 20.4Z"/><path fill="#a97759" d="M93.0 14.0L100.9 14.0L99.9 21.0L93.0 21.0Z"/><path fill="#f1bfa8" d="M93.9 17.2L96.9 17.2L97.4 22.5L93.4 22.5Z"/><path fill="#fbe5d5" d="M89.0 9.4C88.6 15.8 91.0 19.1 93.3 19.4C95.7 18.8 97.7 16.3 97.2 9.4Z"/><ellipse cx="98.4" cy="14.7" rx="0.8" ry="1.3" fill="#fbe5d5" stroke="#d9a58f" stroke-width="0.3"/><path fill="#c8946d" d="M97.1 7.9C98.3 12.5 97.7 16.3 98.6 20.1L101.3 20.8L101.9 12.5L100.5 7.9Z"/><path fill="#c8946d" d="M90.2 7.9C89.0 12.5 89.5 16.3 88.7 20.1L87.8 20.5L87.1 12.5L88.4 7.9Z"/><path fill="#c8946d" d="M87.8 14.6C87.2 9.4 89.3 5.3 94.5 5.3C99.6 5.3 101.8 9.4 98.7 15.2L96.9 11.9L95.7 13.4L94.9 11.0L93.4 13.2L92.5 9.4L91.0 13.1L89.8 11.9Z"/><path fill="#ddb088" opacity=".55" d="M88.1 9.9C92.2 7.3 96.8 7.3 100.9 9.9C96.8 8.5 92.2 8.5 88.1 9.9Z"/><path fill="none" stroke="#a97759" stroke-width="0.3" d="M92.5 5.7C90.1 7.9 89.5 11.0 90.1 13.1M93.1 5.7C96.2 7.9 97.1 11.0 96.8 13.1M101.0 11.0C102.1 14.7 101.0 17.8 100.5 20.7M87.8 11.0C86.9 14.7 87.8 17.8 88.7 20.4M88.0 20.4C86.0 15.5 86.4 4.9 94.5 4.9C102.5 4.9 103.0 15.5 101.3 20.8"/><ellipse cx="90.6" cy="14.0" rx="0.8" ry="1.4" fill="#fff"/><ellipse cx="90.6" cy="14.2" rx="0.6" ry="1.3" fill="#7a4320"/><ellipse cx="90.6" cy="14.4" rx="0.4" ry="0.7" fill="#b06a30"/><path d="M89.7 13.2Q90.6 12.0 91.6 13.2" stroke="#3a241a" stroke-width="0.5" fill="none"/><circle cx="90.4" cy="13.5" r="0.3" fill="#fff"/><path d="M89.8 11.6L91.4 11.1" stroke="#a97759" stroke-width="0.4" fill="none"/><ellipse cx="95.0" cy="14.0" rx="1.1" ry="1.4" fill="#fff"/><ellipse cx="95.0" cy="14.2" rx="0.8" ry="1.3" fill="#7a4320"/><ellipse cx="95.0" cy="14.4" rx="0.5" ry="0.7" fill="#b06a30"/><path d="M93.8 13.2Q95.0 12.0 96.3 13.2" stroke="#3a241a" stroke-width="0.5" fill="none"/><circle cx="94.7" cy="13.5" r="0.3" fill="#fff"/><path d="M93.9 11.6L96.0 11.1" stroke="#a97759" stroke-width="0.4" fill="none"/><ellipse cx="90.2" cy="16.1" rx="0.8" ry="0.4" fill="#f3b3a0" opacity=".6"/><ellipse cx="95.8" cy="16.1" rx="0.8" ry="0.4" fill="#f3b3a0" opacity=".6"/><path fill="#e27f6e" stroke="#6b3a2c" stroke-width="0.3" d="M91.5 16.6C92.6 16.3 94.0 16.2 94.8 16.3C94.8 18.3 92.0 19.0 91.5 16.6Z"/><path fill="#fff" d="M91.7 16.7C92.6 16.5 94.0 16.4 94.6 16.5L94.5 16.9C93.6 16.9 92.6 16.9 91.9 17.0Z"/></g><path fill="#2b6cbf" d="M117.3 24.9L114.1 23.2L114.4 26.9ZM117.3 24.9L120.5 23.2L120.2 26.9ZM116.9 25.3L115.4 29.7L117.0 29.4ZM117.7 25.3L119.3 29.5L117.8 29.4Z"/><path d="M117.3 24.9L117.1 29.7M117.3 24.9L117.9 29.4" stroke="#3b2a2a" stroke-width="0.6" fill="none"/><circle cx="117.3" cy="24.9" r="0.6" fill="#1f4f96"/><g transform="translate(226.0 0) scale(-1 1)"><path fill="#c8946d" d="M106.5 20.4C104.5 15.5 105.0 4.9 113.0 4.9C121.0 4.9 121.5 15.5 119.8 20.8C117.5 21.6 115.7 20.8 114.5 19.4L111.5 19.4C110.6 20.8 108.4 21.3 106.5 20.4Z"/><path fill="#a97759" d="M111.5 14.0L119.4 14.0L118.5 21.0L111.5 21.0Z"/><path fill="#f1bfa8" d="M112.4 17.2L115.4 17.2L115.9 22.5L111.9 22.5Z"/><path fill="#fbe5d5" d="M107.5 9.4C107.1 15.8 109.5 19.1 111.8 19.4C114.2 18.8 116.2 16.3 115.7 9.4Z"/><ellipse cx="116.9" cy="14.7" rx="0.8" ry="1.3" fill="#fbe5d5" stroke="#d9a58f" stroke-width="0.3"/><path fill="#c8946d" d="M115.6 7.9C116.8 12.5 116.2 16.3 117.1 20.1L119.8 20.8L120.4 12.5L119.1 7.9Z"/><path fill="#c8946d" d="M108.8 7.9C107.5 12.5 108.0 16.3 107.2 20.1L106.3 20.5L105.6 12.5L106.9 7.9Z"/><path fill="#c8946d" d="M106.3 14.6C105.7 9.4 107.8 5.3 113.0 5.3C118.2 5.3 120.3 9.4 117.2 15.2L115.4 11.9L114.2 13.4L113.5 11.0L111.9 13.2L111.0 9.4L109.5 13.1L108.3 11.9Z"/><path fill="#ddb088" opacity=".55" d="M106.6 9.9C110.7 7.3 115.3 7.3 119.4 9.9C115.3 8.5 110.7 8.5 106.6 9.9Z"/><path fill="none" stroke="#a97759" stroke-width="0.3" d="M111.0 5.7C108.6 7.9 108.0 11.0 108.6 13.1M111.6 5.7C114.7 7.9 115.6 11.0 115.3 13.1M119.5 11.0C120.6 14.7 119.5 17.8 119.1 20.7M106.3 11.0C105.4 14.7 106.3 17.8 107.2 20.4M106.5 20.4C104.5 15.5 105.0 4.9 113.0 4.9C121.0 4.9 121.5 15.5 119.8 20.8"/><ellipse cx="109.1" cy="14.0" rx="0.8" ry="1.4" fill="#fff"/><ellipse cx="109.1" cy="14.2" rx="0.6" ry="1.3" fill="#7a4320"/><ellipse cx="109.1" cy="14.4" rx="0.4" ry="0.7" fill="#b06a30"/><path d="M108.2 13.2Q109.1 12.0 110.1 13.2" stroke="#3a241a" stroke-width="0.5" fill="none"/><circle cx="108.9" cy="13.5" r="0.3" fill="#fff"/><path d="M108.3 11.6L109.9 11.1" stroke="#a97759" stroke-width="0.4" fill="none"/><ellipse cx="113.5" cy="14.0" rx="1.1" ry="1.4" fill="#fff"/><ellipse cx="113.5" cy="14.2" rx="0.8" ry="1.3" fill="#7a4320"/><ellipse cx="113.5" cy="14.4" rx="0.5" ry="0.7" fill="#b06a30"/><path d="M112.3 13.2Q113.5 12.0 114.8 13.2" stroke="#3a241a" stroke-width="0.5" fill="none"/><circle cx="113.2" cy="13.5" r="0.3" fill="#fff"/><path d="M112.4 11.6L114.5 11.1" stroke="#a97759" stroke-width="0.4" fill="none"/><ellipse cx="108.7" cy="16.1" rx="0.8" ry="0.4" fill="#f3b3a0" opacity=".6"/><ellipse cx="114.3" cy="16.1" rx="0.8" ry="0.4" fill="#f3b3a0" opacity=".6"/><path d="M111.3 17.3Q111.6 16.9 112.0 17.3" stroke="#8a4a3a" stroke-width="0.5" fill="none"/></g><g><path fill="#c8946d" d="M85.9 56.8C82.7 48.8 83.4 31.5 96.6 31.5C109.7 31.5 110.4 48.8 107.7 57.5C104.0 58.7 101.0 57.5 99.0 55.3L94.1 55.3C92.6 57.5 89.1 58.2 85.9 56.8Z"/><path fill="#a97759" d="M94.1 46.4L106.9 46.4L105.5 57.7L94.1 57.7Z"/><path fill="#f1bfa8" d="M95.6 51.6L100.5 51.6L101.3 60.2L94.8 60.2Z"/><path fill="#fbe5d5" d="M87.7 38.9C86.9 49.3 90.9 54.8 94.6 55.3C98.5 54.3 101.8 50.1 101.0 38.9Z"/><ellipse cx="103.0" cy="47.6" rx="1.4" ry="2.1" fill="#fbe5d5" stroke="#d9a58f" stroke-width="0.3"/><path fill="#c8946d" d="M100.8 36.5C102.7 43.9 101.8 50.1 103.2 56.3L107.7 57.5L108.7 43.9L106.5 36.5Z"/><path fill="#c8946d" d="M89.6 36.5C87.7 43.9 88.4 50.1 87.2 56.3L85.7 57.0L84.4 43.9L86.7 36.5Z"/><path fill="#c8946d" d="M85.7 47.4C84.7 38.9 88.1 32.3 96.6 32.3C105.0 32.3 108.4 38.9 103.5 48.3L100.5 42.9L98.5 45.4L97.3 41.4L94.8 45.1L93.3 38.9L90.9 44.9L88.9 42.9Z"/><path fill="#ddb088" opacity=".55" d="M86.2 39.7C92.8 35.5 100.3 35.5 106.9 39.7C100.3 37.5 92.8 37.5 86.2 39.7Z"/><path fill="none" stroke="#a97759" stroke-width="0.3" d="M93.3 32.8C89.4 36.5 88.4 41.4 89.4 44.9M94.3 32.8C99.3 36.5 100.8 41.4 100.3 44.9M107.2 41.4C108.9 47.6 107.2 52.5 106.5 57.2M85.7 41.4C84.2 47.6 85.7 52.5 87.2 56.8M85.9 56.8C82.7 48.8 83.4 31.5 96.6 31.5C109.7 31.5 110.4 48.8 107.7 57.5"/><ellipse cx="90.2" cy="46.4" rx="1.4" ry="2.4" fill="#fff"/><ellipse cx="90.2" cy="46.7" rx="1.0" ry="2.1" fill="#7a4320"/><ellipse cx="90.2" cy="47.1" rx="0.6" ry="1.1" fill="#b06a30"/><path d="M88.7 45.1Q90.2 43.1 91.8 45.1" stroke="#3a241a" stroke-width="0.5" fill="none"/><circle cx="89.9" cy="45.5" r="0.5" fill="#fff"/><path d="M88.9 42.4L91.5 41.7" stroke="#a97759" stroke-width="0.4" fill="none"/><ellipse cx="97.4" cy="46.4" rx="1.8" ry="2.4" fill="#fff"/><ellipse cx="97.4" cy="46.7" rx="1.4" ry="2.1" fill="#7a4320"/><ellipse cx="97.4" cy="47.1" rx="0.7" ry="1.1" fill="#b06a30"/><path d="M95.4 45.1Q97.4 43.1 99.5 45.1" stroke="#3a241a" stroke-width="0.5" fill="none"/><circle cx="96.9" cy="45.5" r="0.5" fill="#fff"/><path d="M95.7 42.4L99.1 41.7" stroke="#a97759" stroke-width="0.4" fill="none"/><ellipse cx="89.5" cy="49.8" rx="1.4" ry="0.7" fill="#f3b3a0" opacity=".6"/><ellipse cx="98.7" cy="49.8" rx="1.4" ry="0.7" fill="#f3b3a0" opacity=".6"/><path fill="#e27f6e" stroke="#6b3a2c" stroke-width="0.3" d="M91.6 50.6C93.5 50.2 95.7 50.0 97.1 50.2C97.1 53.4 92.4 54.5 91.6 50.6Z"/><path fill="#fff" d="M92.0 50.7C93.5 50.4 95.7 50.3 96.7 50.4L96.5 51.0C95.1 51.0 93.5 51.2 92.3 51.3Z"/><circle cx="105.5" cy="41.3" r="0.8" fill="#e58bb8"/><circle cx="105.1" cy="42.6" r="0.8" fill="#e58bb8"/><circle cx="103.8" cy="42.6" r="0.8" fill="#e58bb8"/><circle cx="103.4" cy="41.3" r="0.8" fill="#e58bb8"/><circle cx="104.5" cy="40.6" r="0.8" fill="#e58bb8"/><circle cx="104.5" cy="41.7" r="0.5" fill="#fff3d0"/></g><circle cx="115.6" cy="39.7" r="4.5" fill="#fff" stroke="#bbb" stroke-width=".5"/><rect x="91.3" y="72.1" width="4.5" height="11.1" rx="2" fill="#f6dccc"/><rect x="103.4" y="72.1" width="4.5" height="11.1" rx="2" fill="#f6dccc"/><rect x="116.5" y="73.9" width="4.8" height="10.2" rx="2" fill="#f6dccc"/><rect x="113.6" y="67.5" width="7.2" height="10.2" rx="1" fill="#9fb2c6" transform="rotate(-8 117.3 72.1)"/></svg></div>
<div style="left:836.4px;top:803.2px;width:11.6px;height:11.6px;background:#22c55e;border-radius:6px;"></div>
<svg style="left:837.4px;top:804.3px;" width="9.4" height="9.4" viewBox="0 0 16 16"><path d="M3.200 8.600 6.500 11.600 12.800 4.600" fill="none" stroke="#fff" stroke-width="1.800" stroke-linecap="round" stroke-linejoin="round"/></svg>
<div style="left:1130.3px;top:65px;width:1.9px;height:887px;background:#374151;"></div>
<div style="left:1132.2px;top:65px;width:329.8px;height:41.5px;background:#1f2937;"></div>
<div style="left:1132.2px;top:106.2px;width:329.8px;height:1px;background:#374151;"></div>
<div style="left:1141px;top:74.4px;width:286px;height:22.6px;background:#374151;border-radius:4px;"></div>
<svg style="left:1149.04px;top:79.04px;color:#fff;" width="12.91" height="13.91" viewBox="0 0 16 16" preserveAspectRatio="none"><circle cx="3.800" cy="4.200" r="2.100" fill="none" stroke="currentColor" stroke-width="2"/><circle cx="3.800" cy="11.800" r="2.100" fill="none" stroke="currentColor" stroke-width="2"/><path d="M5.500 5.600 14.300 12.800M5.500 10.400 14.300 3.200" stroke="currentColor" stroke-width="2.300" stroke-linecap="round"/></svg>
<span style="left:1167.5px;top:80.00px;font-size:12.39px;color:#f3f4f6;">Auto-Crop Design</span>
<svg style="left:1405.96px;top:78.94px;color:#fff;" width="13.29" height="14.12" viewBox="0 0 16 16" preserveAspectRatio="none"><path d="M3 5.5 L8 10.5 L13 5.5" fill="none" stroke="currentColor" stroke-width="1.8" stroke-linecap="round" stroke-linejoin="round"/></svg>
<svg style="left:1437.62px;top:80.52px;color:#9ca3af;" width="11.56" height="10.96" viewBox="0 0 16 16" preserveAspectRatio="none"><path d="M3.500 3.500 12.500 12.500M12.500 3.500 3.500 12.500" stroke="currentColor" stroke-width="1.800" stroke-linecap="round"/></svg>
<span style="left:1144.3px;top:122.00px;font-size:15.18px;color:#f3f4f6;-webkit-text-stroke:0.38px currentColor;letter-spacing:0.147px;">Auto-Crop Design</span>
<svg style="left:1144px;top:151.400px" width="306.600" height="104.200"><rect x=".5" y=".5" width="305.600" height="103.200" rx="5" fill="none" stroke="#4b5563" stroke-width="1" stroke-dasharray="3 2.500"/></svg>
<svg style="left:1285.70px;top:169.38px;color:#9ca3af;" width="22.30" height="22.74" viewBox="0 0 16 16" preserveAspectRatio="none"><path d="M0 3A2 2 0 0 1 2 1h12a2 2 0 0 1 2 2v10a2 2 0 0 1-2 2H2a2 2 0 0 1-2-2ZM3.500 3a1.500 1.500 0 1 0 .01 0ZM2 13h12l-4-6.500-2.800 4.200-1.700-2.200Z" fill="currentColor" fill-rule="evenodd"/></svg>
<span style="left:1176px;top:205.00px;font-size:12.32px;color:#d1d5db;">Drag &amp; drop an image here, or click to select</span>
<span style="left:1248.9px;top:226.00px;font-size:10.26px;color:#6b7280;">JPG, PNG supported</span>
<span style="left:1144.3px;top:269.00px;font-size:10.87px;color:#f3f4f6;-webkit-text-stroke:0.38px currentColor;">Detection Types</span>
<div style="left:1144.2px;top:290.70000000000005px;width:9.2px;height:9.2px;background:#4b5563;border-radius:1.5px;border:0.7px solid #6b7280;"></div>
<svg style="left:1144.8px;top:291.30000000000007px;" width="7.999999999999999" height="7.999999999999999" viewBox="0 0 16 16"><path d="M3.200 8.500 6.500 11.800 12.800 4.200" fill="none" stroke="#fff" stroke-width="2.600" stroke-linecap="round" stroke-linejoin="round"/></svg>
<span style="left:1159.6px;top:291.00px;font-size:10.46px;color:#e5e7eb;">Head</span>
<div style="left:1144.2px;top:311.1px;width:9.2px;height:9.2px;background:#4b5563;border-radius:1.5px;border:0.7px solid #6b7280;"></div>
<svg style="left:1144.8px;top:311.70000000000005px;" width="7.999999999999999" height="7.999999999999999" viewBox="0 0 16 16"><path d="M3.200 8.500 6.500 11.800 12.800 4.200" fill="none" stroke="#fff" stroke-width="2.600" stroke-linecap="round" stroke-linejoin="round"/></svg>
<span style="left:1159.6px;top:311.00px;font-size:10.45px;color:#e5e7eb;">Person</span>
<div style="left:1144.2px;top:331.8px;width:9.2px;height:9.2px;background:#4b5563;border-radius:1.5px;border:0.7px solid #6b7280;"></div>
<svg style="left:1144.8px;top:332.40000000000003px;" width="7.999999999999999" height="7.999999999999999" viewBox="0 0 16 16"><path d="M3.200 8.500 6.500 11.800 12.800 4.200" fill="none" stroke="#fff" stroke-width="2.600" stroke-linecap="round" stroke-linejoin="round"/></svg>
<span style="left:1159.6px;top:331.00px;font-size:10.71px;color:#e5e7eb;letter-spacing:-0.000px;">Half Body</span>
<span style="left:1144.3px;top:357.00px;font-size:11.02px;color:#f3f4f6;-webkit-text-stroke:0.38px currentColor;letter-spacing:0.017px;">Candidate Filtering</span>
<div style="left:1144.2px;top:379.0px;width:9.2px;height:9.2px;background:#4b5563;border-radius:1.5px;border:0.7px solid #6b7280;"></div>
<svg style="left:1144.8px;top:379.6px;" width="7.999999999999999" height="7.999999999999999" viewBox="0 0 16 16"><path d="M3.200 8.500 6.500 11.800 12.800 4.200" fill="none" stroke="#fff" stroke-width="2.600" stroke-linecap="round" stroke-linejoin="round"/></svg>
<span style="left:1159.6px;top:378.00px;font-size:10.90px;color:#e5e7eb;">Auto-hide irrelevant images</span>
<div style="left:1144.2px;top:399.1px;width:9.2px;height:9.2px;background:#4b5563;border-radius:1.5px;border:0.7px solid #6b7280;"></div>
<svg style="left:1144.8px;top:399.70000000000005px;" width="7.999999999999999" height="7.999999999999999" viewBox="0 0 16 16"><path d="M3.200 8.500 6.500 11.800 12.800 4.200" fill="none" stroke="#fff" stroke-width="2.600" stroke-linecap="round" stroke-linejoin="round"/></svg>
<span style="left:1159.6px;top:398.00px;font-size:10.88px;color:#e5e7eb;">Auto-hide over-detections</span>
<div style="left:1144.2px;top:420.1px;width:9.2px;height:9.2px;background:#4b5563;border-radius:1.5px;border:0.7px solid #6b7280;"></div>
<svg style="left:1144.8px;top:420.70000000000005px;" width="7.999999999999999" height="7.999999999999999" viewBox="0 0 16 16"><path d="M3.200 8.500 6.500 11.800 12.800 4.200" fill="none" stroke="#fff" stroke-width="2.600" stroke-linecap="round" stroke-linejoin="round"/></svg>
<span style="left:1159.6px;top:419.00px;font-size:10.90px;color:#e5e7eb;letter-spacing:0.000px;">Auto-hide duplicates</span>
<div style="left:1144px;top:443px;width:306.8px;height:28.8px;background:#374151;border-radius:4px;"></div>
<svg style="left:1243.27px;top:451.12px;color:#6b7280;" width="12.15" height="12.75" viewBox="0 0 16 16" preserveAspectRatio="none"><circle cx="3.800" cy="4.200" r="2.100" fill="none" stroke="currentColor" stroke-width="2"/><circle cx="3.800" cy="11.800" r="2.100" fill="none" stroke="currentColor" stroke-width="2"/><path d="M5.500 5.600 14.300 12.800M5.500 10.400 14.300 3.200" stroke="currentColor" stroke-width="2.300" stroke-linecap="round"/></svg>
<span style="left:1261.5px;top:452.00px;font-size:12.20px;color:#6b7280;">Crop Characters</span>
<div style="left:1144.2px;top:486.70000000000005px;width:9.2px;height:9.2px;background:#4b5563;border-radius:1.5px;border:0.7px solid #6b7280;"></div>
<svg style="left:1144.8px;top:487.30000000000007px;" width="7.999999999999999" height="7.999999999999999" viewBox="0 0 16 16"><path d="M3.200 8.500 6.500 11.800 12.800 4.200" fill="none" stroke="#fff" stroke-width="2.600" stroke-linecap="round" stroke-linejoin="round"/></svg>
<span style="left:1159.6px;top:486.00px;font-size:10.61px;color:#e5e7eb;">Clear all approvals</span>
<div style="left:1144.2px;top:506.6px;width:9.2px;height:9.2px;background:#4b5563;border-radius:1.5px;border:0.7px solid #6b7280;"></div>
<svg style="left:1144.8px;top:507.20000000000005px;" width="7.999999999999999" height="7.999999999999999" viewBox="0 0 16 16"><path d="M3.200 8.500 6.500 11.800 12.800 4.200" fill="none" stroke="#fff" stroke-width="2.600" stroke-linecap="round" stroke-linejoin="round"/></svg>
<span style="left:1159.6px;top:506.00px;font-size:10.89px;color:#e5e7eb;">Set input as designated multi</span>
<div style="left:1144.2px;top:527.4px;width:9.2px;height:9.2px;background:#4b5563;border-radius:1.5px;border:0.7px solid #6b7280;"></div>
<svg style="left:1144.8px;top:528.0px;" width="7.999999999999999" height="7.999999999999999" viewBox="0 0 16 16"><path d="M3.200 8.500 6.500 11.800 12.800 4.200" fill="none" stroke="#fff" stroke-width="2.600" stroke-linecap="round" stroke-linejoin="round"/></svg>
<span style="left:1159.6px;top:527.00px;font-size:10.63px;color:#e5e7eb;letter-spacing:-0.000px;">Set cropped designs as approved</span>
<div style="left:1462px;top:36px;width:3px;height:916px;background:#374151;"></div>
<div style="left:1465px;top:36px;width:335px;height:916px;background:#111827;"></div>
<span style="left:1473.8px;top:51.00px;font-size:12.38px;color:#f3f4f6;font-weight:700;">Files</span>
<div style="left:1511.2px;top:46px;width:70.8px;height:20px;background:#374151;border-radius:4px;"></div>
<svg style="left:1518.80px;top:49.12px;color:#fff;" width="12.80" height="12.67" viewBox="0 0 16 16" preserveAspectRatio="none"><rect x="1" y="2" width="5" height="4.200" rx=".8" fill="currentColor"/><rect x="10.500" y="3" width="4.500" height="4" rx=".8" fill="currentColor"/><rect x="6.500" y="10" width="4.500" height="4" rx=".8" fill="currentColor"/><path d="M6 4.500h4.500M4.500 6l3.700 4.500" stroke="currentColor" stroke-width="1.400" fill="none"/></svg>
<span style="left:1537.5px;top:50.00px;font-size:10.56px;color:#f3f4f6;">Tree</span>
<svg style="left:1563.28px;top:49.95px;color:#fff;" width="10.03" height="11.29" viewBox="0 0 16 16" preserveAspectRatio="none"><path d="M3 5.5 L8 10.5 L13 5.5" fill="none" stroke="currentColor" stroke-width="1.8" stroke-linecap="round" stroke-linejoin="round"/></svg>
<div style="left:1765.2px;top:45px;width:27.4px;height:22px;background:#374151;border-radius:4px;"></div>
<svg style="left:1772.38px;top:50.16px;color:#fff;" width="13.05" height="12.18" viewBox="0 0 16 16" preserveAspectRatio="none"><path d="M6.600 1.500h2.800v5h2.700L8 10.800 3.900 6.500h2.700Z" fill="currentColor"/><path d="M1.500 10.500h3.200L8 13.200l3.300-2.700h3.200v4h-13Z" fill="currentColor"/></svg>
<div style="left:1465px;top:76px;width:335px;height:1px;background:#374151;"></div>
<div class="clip" style="left:1465px;top:77px;width:329px;height:868.500px;">
<div style="left:0px;top:-1.0px;width:329px;height:20.6px;background:#1f2937;"></div>
<svg style="left:12.64px;top:6.26px;color:#9ca3af;" width="9.63" height="9.88" viewBox="0 0 16 16" preserveAspectRatio="none"><path d="M3 5.5 L8 10.5 L13 5.5" fill="none" stroke="currentColor" stroke-width="1.8" stroke-linecap="round" stroke-linejoin="round"/></svg>
<svg style="left:28.27px;top:4.32px;color:#d1d5db;" width="11.73" height="11.83" viewBox="0 0 16 16" preserveAspectRatio="none"><path d="M1 3.200A1.200 1.200 0 0 1 2.200 2h3.500l1.500 1.600h5.300A1.200 1.200 0 0 1 13.700 4.800V6H4.300L1 12.300Z" fill="currentColor"/><path d="M4.900 6.900H16l-3 6.600H1.600Z" fill="currentColor"/></svg>
<span style="left:49.8px;top:5.00px;font-size:10.28px;color:#e5e7eb;letter-spacing:-0.726px;">CCSRL-MGWYO7JS</span>
<svg style="left:27.24px;top:26.74px;color:#9ca3af;" width="9.63" height="9.88" viewBox="0 0 16 16" preserveAspectRatio="none"><path d="M3 5.5 L8 10.5 L13 5.5" fill="none" stroke="currentColor" stroke-width="1.8" stroke-linecap="round" stroke-linejoin="round"/></svg>
<svg style="left:42.87px;top:24.80px;color:#d1d5db;" width="11.73" height="11.83" viewBox="0 0 16 16" preserveAspectRatio="none"><path d="M1 3.200A1.200 1.200 0 0 1 2.200 2h3.500l1.500 1.600h5.300A1.200 1.200 0 0 1 13.700 4.800V6H4.300L1 12.300Z" fill="currentColor"/><path d="M4.900 6.900H16l-3 6.600H1.600Z" fill="currentColor"/></svg>
<span style="left:64.39999999999999px;top:25.00px;font-size:10.87px;color:#e5e7eb;">animatics</span>
<div style="left:0px;top:39.96px;width:329px;height:20.6px;background:#1f2937;"></div>
<svg style="left:55.92px;top:45.26px;color:#a8adb7;" width="12.16" height="11.20" viewBox="0 0 16 16" preserveAspectRatio="none"><path d="M3 2.500A1.500 1.500 0 0 1 4.500 1H9v4h4v8.500a1.500 1.500 0 0 1-1.500 1.500h-7A1.500 1.500 0 0 1 3 13.500Z M10 1l3 3h-3Z" fill="currentColor"/></svg>
<span style="left:79.0px;top:46.00px;font-size:10.29px;color:#e5e7eb;">MGWYSYC9-5b1ac7fe.tv-animatic</span>
<svg style="left:27.24px;top:67.70px;color:#9ca3af;" width="9.63" height="9.88" viewBox="0 0 16 16" preserveAspectRatio="none"><path d="M3 5.5 L8 10.5 L13 5.5" fill="none" stroke="currentColor" stroke-width="1.8" stroke-linecap="round" stroke-linejoin="round"/></svg>
<svg style="left:42.87px;top:65.76px;color:#d1d5db;" width="11.73" height="11.83" viewBox="0 0 16 16" preserveAspectRatio="none"><path d="M1 3.200A1.200 1.200 0 0 1 2.200 2h3.500l1.500 1.600h5.300A1.200 1.200 0 0 1 13.700 4.800V6H4.300L1 12.300Z" fill="currentColor"/><path d="M4.900 6.900H16l-3 6.600H1.600Z" fill="currentColor"/></svg>
<span style="left:64.39999999999999px;top:66.00px;font-size:10.69px;color:#e5e7eb;">characters</span>
<div style="left:0px;top:80.92px;width:329px;height:20.6px;background:#1f2937;"></div>
<svg style="left:41.84px;top:88.18px;color:#9ca3af;" width="9.63" height="9.88" viewBox="0 0 16 16" preserveAspectRatio="none"><path d="M3 5.5 L8 10.5 L13 5.5" fill="none" stroke="currentColor" stroke-width="1.8" stroke-linecap="round" stroke-linejoin="round"/></svg>
<svg style="left:57.47px;top:86.24px;color:#d1d5db;" width="11.73" height="11.83" viewBox="0 0 16 16" preserveAspectRatio="none"><path d="M1 3.200A1.200 1.200 0 0 1 2.200 2h3.500l1.500 1.600h5.300A1.200 1.200 0 0 1 13.700 4.800V6H4.300L1 12.300Z" fill="currentColor"/><path d="M4.900 6.900H16l-3 6.600H1.600Z" fill="currentColor"/></svg>
<span style="left:79.0px;top:87.00px;font-size:10.28px;color:#e5e7eb;letter-spacing:-0.402px;">BACKGROUND-STUDENTS-MGWYVP3V</span>
<svg style="left:70.52px;top:106.70px;color:#a8adb7;" width="12.16" height="11.20" viewBox="0 0 16 16" preserveAspectRatio="none"><path d="M3 2.500A1.500 1.500 0 0 1 4.500 1H9v4h4v8.500a1.500 1.500 0 0 1-1.500 1.500h-7A1.500 1.500 0 0 1 3 13.500Z M10 1l3 3h-3Z" fill="currentColor"/></svg>
<span style="left:93.6px;top:108.00px;font-size:10.28px;color:#e5e7eb;letter-spacing:-0.316px;">BACKGROUND-STUDENTS-SCHOOL-UNIFORM</span>
<span style="left:313.52px;top:107.00px;font-size:10.60px;color:#e5e7eb;letter-spacing:-0.048px;">.character-design</span>
<div style="left:0px;top:121.88px;width:329px;height:20.6px;background:#1f2937;"></div>
<svg style="left:70.52px;top:127.18px;color:#a8adb7;" width="12.16" height="11.20" viewBox="0 0 16 16" preserveAspectRatio="none"><path d="M3 2.500A1.500 1.500 0 0 1 4.500 1H9v4h4v8.500a1.500 1.500 0 0 1-1.500 1.500h-7A1.500 1.500 0 0 1 3 13.500Z M10 1l3 3h-3Z" fill="currentColor"/></svg>
<span style="left:93.6px;top:128.00px;font-size:10.28px;color:#e5e7eb;letter-spacing:-0.212px;">BACKGROUND-STUDENTS.character</span>
<svg style="left:41.84px;top:149.62px;color:#9ca3af;" width="9.63" height="9.88" viewBox="0 0 16 16" preserveAspectRatio="none"><path d="M3 5.5 L8 10.5 L13 5.5" fill="none" stroke="currentColor" stroke-width="1.8" stroke-linecap="round" stroke-linejoin="round"/></svg>
<svg style="left:57.47px;top:147.68px;color:#d1d5db;" width="11.73" height="11.83" viewBox="0 0 16 16" preserveAspectRatio="none"><path d="M1 3.200A1.200 1.200 0 0 1 2.200 2h3.500l1.500 1.600h5.300A1.200 1.200 0 0 1 13.700 4.800V6H4.300L1 12.300Z" fill="currentColor"/><path d="M4.900 6.900H16l-3 6.600H1.600Z" fill="currentColor"/></svg>
<span style="left:79.0px;top:149.00px;font-size:10.28px;color:#e5e7eb;letter-spacing:-0.189px;">HANA-KIMURA-MGWYRD1A</span>
<div style="left:0px;top:162.84px;width:329px;height:20.6px;background:#1f2937;"></div>
<svg style="left:70.52px;top:168.14px;color:#a8adb7;" width="12.16" height="11.20" viewBox="0 0 16 16" preserveAspectRatio="none"><path d="M3 2.500A1.500 1.500 0 0 1 4.500 1H9v4h4v8.500a1.500 1.500 0 0 1-1.500 1.500h-7A1.500 1.500 0 0 1 3 13.500Z M10 1l3 3h-3Z" fill="currentColor"/></svg>
<span style="left:93.6px;top:169.00px;font-size:10.28px;color:#e5e7eb;letter-spacing:-0.104px;">HANA-KIMURA-DEFAULT-VOICE.voice-design</span>
<svg style="left:70.52px;top:188.62px;color:#a8adb7;" width="12.16" height="11.20" viewBox="0 0 16 16" preserveAspectRatio="none"><path d="M3 2.500A1.500 1.500 0 0 1 4.500 1H9v4h4v8.500a1.500 1.500 0 0 1-1.500 1.500h-7A1.500 1.500 0 0 1 3 13.500Z M10 1l3 3h-3Z" fill="currentColor"/></svg>
<span style="left:93.6px;top:190.00px;font-size:10.28px;color:#e5e7eb;letter-spacing:-0.143px;">HANA-KIMURA-SCHOOL-UNIFORM</span>
<span style="left:260.02px;top:189.00px;font-size:10.60px;color:#e5e7eb;letter-spacing:-0.048px;">.character-design</span>
<div style="left:0px;top:203.8px;width:329px;height:20.6px;background:#1f2937;"></div>
<svg style="left:70.52px;top:209.10px;color:#a8adb7;" width="12.16" height="11.20" viewBox="0 0 16 16" preserveAspectRatio="none"><path d="M3 2.500A1.500 1.500 0 0 1 4.500 1H9v4h4v8.500a1.500 1.500 0 0 1-1.500 1.500h-7A1.500 1.500 0 0 1 3 13.500Z M10 1l3 3h-3Z" fill="currentColor"/></svg>
<span style="left:93.6px;top:210.00px;font-size:10.36px;color:#e5e7eb;">HANA-KIMURA.character</span>
<svg style="left:41.84px;top:231.54px;color:#9ca3af;" width="9.63" height="9.88" viewBox="0 0 16 16" preserveAspectRatio="none"><path d="M3 5.5 L8 10.5 L13 5.5" fill="none" stroke="currentColor" stroke-width="1.8" stroke-linecap="round" stroke-linejoin="round"/></svg>
<svg style="left:57.47px;top:229.60px;color:#d1d5db;" width="11.73" height="11.83" viewBox="0 0 16 16" preserveAspectRatio="none"><path d="M1 3.200A1.200 1.200 0 0 1 2.200 2h3.500l1.500 1.600h5.300A1.200 1.200 0 0 1 13.700 4.800V6H4.300L1 12.300Z" fill="currentColor"/><path d="M4.900 6.900H16l-3 6.600H1.600Z" fill="currentColor"/></svg>
<span style="left:79.0px;top:230.00px;font-size:10.28px;color:#e5e7eb;letter-spacing:-0.389px;">HANDSOME-UPPERCLASSMAN-MGWYVP3V</span>
<div style="left:0px;top:244.76px;width:329px;height:20.6px;background:#1f2937;"></div>
<svg style="left:70.52px;top:250.06px;color:#a8adb7;" width="12.16" height="11.20" viewBox="0 0 16 16" preserveAspectRatio="none"><path d="M3 2.500A1.500 1.500 0 0 1 4.500 1H9v4h4v8.500a1.500 1.500 0 0 1-1.500 1.500h-7A1.500 1.500 0 0 1 3 13.500Z M10 1l3 3h-3Z" fill="currentColor"/></svg>
<span style="left:93.6px;top:251.00px;font-size:10.28px;color:#e5e7eb;letter-spacing:-0.311px;">HANDSOME-UPPERCLASSMAN-SCHOOL-UNIFORM</span>
<span style="left:335.02px;top:250.00px;font-size:10.60px;color:#e5e7eb;letter-spacing:-0.048px;">.character-design</span>
<svg style="left:70.52px;top:270.54px;color:#a8adb7;" width="12.16" height="11.20" viewBox="0 0 16 16" preserveAspectRatio="none"><path d="M3 2.500A1.500 1.500 0 0 1 4.500 1H9v4h4v8.500a1.500 1.500 0 0 1-1.500 1.500h-7A1.500 1.500 0 0 1 3 13.500Z M10 1l3 3h-3Z" fill="currentColor"/></svg>
<span style="left:93.6px;top:271.00px;font-size:10.28px;color:#e5e7eb;letter-spacing:-0.216px;">HANDSOME-UPPERCLASSMAN.character</span>
<div style="left:0px;top:285.72px;width:329px;height:20.6px;background:#1f2937;"></div>
<svg style="left:41.84px;top:292.98px;color:#9ca3af;" width="9.63" height="9.88" viewBox="0 0 16 16" preserveAspectRatio="none"><path d="M3 5.5 L8 10.5 L13 5.5" fill="none" stroke="currentColor" stroke-width="1.8" stroke-linecap="round" stroke-linejoin="round"/></svg>
<svg style="left:57.47px;top:291.04px;color:#d1d5db;" width="11.73" height="11.83" viewBox="0 0 16 16" preserveAspectRatio="none"><path d="M1 3.200A1.200 1.200 0 0 1 2.200 2h3.500l1.500 1.600h5.300A1.200 1.200 0 0 1 13.700 4.800V6H4.300L1 12.300Z" fill="currentColor"/><path d="M4.900 6.900H16l-3 6.600H1.600Z" fill="currentColor"/></svg>
<span style="left:79.0px;top:292.00px;font-size:10.28px;color:#e5e7eb;letter-spacing:-0.310px;">MIKU-SAITO-MGWYRD1J</span>
<svg style="left:70.52px;top:311.50px;color:#a8adb7;" width="12.16" height="11.20" viewBox="0 0 16 16" preserveAspectRatio="none"><path d="M3 2.500A1.500 1.500 0 0 1 4.500 1H9v4h4v8.500a1.500 1.500 0 0 1-1.500 1.500h-7A1.500 1.500 0 0 1 3 13.500Z M10 1l3 3h-3Z" fill="currentColor"/></svg>
<span style="left:93.6px;top:312.00px;font-size:10.28px;color:#e5e7eb;letter-spacing:-0.101px;">MIKU-SAITO-DEFAULT-VOICE.voice-design</span>
<div style="left:0px;top:326.68px;width:329px;height:20.6px;background:#1f2937;"></div>
<svg style="left:70.52px;top:331.98px;color:#a8adb7;" width="12.16" height="11.20" viewBox="0 0 16 16" preserveAspectRatio="none"><path d="M3 2.500A1.500 1.500 0 0 1 4.500 1H9v4h4v8.500a1.500 1.500 0 0 1-1.500 1.500h-7A1.500 1.500 0 0 1 3 13.500Z M10 1l3 3h-3Z" fill="currentColor"/></svg>
<span style="left:93.6px;top:333.00px;font-size:10.28px;color:#e5e7eb;letter-spacing:-0.174px;">MIKU-SAITO-SCHOOL-UNIFORM</span>
<span style="left:247.22px;top:332.00px;font-size:10.60px;color:#e5e7eb;letter-spacing:-0.048px;">.character-design</span>
<svg style="left:70.52px;top:352.46px;color:#a8adb7;" width="12.16" height="11.20" viewBox="0 0 16 16" preserveAspectRatio="none"><path d="M3 2.500A1.500 1.500 0 0 1 4.500 1H9v4h4v8.500a1.500 1.500 0 0 1-1.500 1.500h-7A1.500 1.500 0 0 1 3 13.500Z M10 1l3 3h-3Z" fill="currentColor"/></svg>
<span style="left:93.6px;top:353.00px;font-size:10.31px;color:#e5e7eb;">MIKU-SAITO.character</span>
<div style="left:0px;top:367.64px;width:329px;height:20.6px;background:#1f2937;"></div>
<svg style="left:41.84px;top:374.90px;color:#9ca3af;" width="9.63" height="9.88" viewBox="0 0 16 16" preserveAspectRatio="none"><path d="M3 5.5 L8 10.5 L13 5.5" fill="none" stroke="currentColor" stroke-width="1.8" stroke-linecap="round" stroke-linejoin="round"/></svg>
<svg style="left:57.47px;top:372.96px;color:#d1d5db;" width="11.73" height="11.83" viewBox="0 0 16 16" preserveAspectRatio="none"><path d="M1 3.200A1.200 1.200 0 0 1 2.200 2h3.500l1.500 1.600h5.300A1.200 1.200 0 0 1 13.700 4.800V6H4.300L1 12.300Z" fill="currentColor"/><path d="M4.900 6.900H16l-3 6.600H1.600Z" fill="currentColor"/></svg>
<span style="left:79.0px;top:374.00px;font-size:10.28px;color:#e5e7eb;letter-spacing:-0.246px;">RIN-TAKAHASHI-MGWYRD1D</span>
<svg style="left:70.52px;top:393.42px;color:#a8adb7;" width="12.16" height="11.20" viewBox="0 0 16 16" preserveAspectRatio="none"><path d="M3 2.500A1.500 1.500 0 0 1 4.500 1H9v4h4v8.500a1.500 1.500 0 0 1-1.500 1.500h-7A1.500 1.500 0 0 1 3 13.500Z M10 1l3 3h-3Z" fill="currentColor"/></svg>
<span style="left:93.6px;top:394.00px;font-size:10.28px;color:#e5e7eb;letter-spacing:-0.155px;">RIN-TAKAHASHI-DEFAULT-VOICE.voice-design</span>
<div style="left:0px;top:408.6px;width:329px;height:20.6px;background:#1f2937;"></div>
<svg style="left:70.52px;top:413.90px;color:#a8adb7;" width="12.16" height="11.20" viewBox="0 0 16 16" preserveAspectRatio="none"><path d="M3 2.500A1.500 1.500 0 0 1 4.500 1H9v4h4v8.500a1.500 1.500 0 0 1-1.500 1.500h-7A1.500 1.500 0 0 1 3 13.500Z M10 1l3 3h-3Z" fill="currentColor"/></svg>
<span style="left:93.6px;top:415.00px;font-size:10.28px;color:#e5e7eb;letter-spacing:-0.214px;">RIN-TAKAHASHI-SCHOOL-UNIFORM</span>
<span style="left:264.42px;top:414.00px;font-size:10.60px;color:#e5e7eb;letter-spacing:-0.048px;">.character-design</span>
<svg style="left:70.52px;top:434.38px;color:#a8adb7;" width="12.16" height="11.20" viewBox="0 0 16 16" preserveAspectRatio="none"><path d="M3 2.500A1.500 1.500 0 0 1 4.500 1H9v4h4v8.500a1.500 1.500 0 0 1-1.500 1.500h-7A1.500 1.500 0 0 1 3 13.500Z M10 1l3 3h-3Z" fill="currentColor"/></svg>
<span style="left:93.6px;top:435.00px;font-size:10.28px;color:#e5e7eb;letter-spacing:-0.061px;">RIN-TAKAHASHI.character</span>
<div style="left:0px;top:449.56px;width:329px;height:20.6px;background:#1f2937;"></div>
<svg style="left:41.84px;top:456.82px;color:#9ca3af;" width="9.63" height="9.88" viewBox="0 0 16 16" preserveAspectRatio="none"><path d="M3 5.5 L8 10.5 L13 5.5" fill="none" stroke="currentColor" stroke-width="1.8" stroke-linecap="round" stroke-linejoin="round"/></svg>
<svg style="left:57.47px;top:454.88px;color:#d1d5db;" width="11.73" height="11.83" viewBox="0 0 16 16" preserveAspectRatio="none"><path d="M1 3.200A1.200 1.200 0 0 1 2.200 2h3.500l1.500 1.600h5.300A1.200 1.200 0 0 1 13.700 4.800V6H4.300L1 12.300Z" fill="currentColor"/><path d="M4.900 6.900H16l-3 6.600H1.600Z" fill="currentColor"/></svg>
<span style="left:79.0px;top:456.00px;font-size:10.28px;color:#e5e7eb;letter-spacing:-0.473px;">UPPERCLASSMAN-FRIENDS-MGWYVP3V</span>
<svg style="left:70.52px;top:475.34px;color:#a8adb7;" width="12.16" height="11.20" viewBox="0 0 16 16" preserveAspectRatio="none"><path d="M3 2.500A1.500 1.500 0 0 1 4.500 1H9v4h4v8.500a1.500 1.500 0 0 1-1.500 1.500h-7A1.500 1.500 0 0 1 3 13.500Z M10 1l3 3h-3Z" fill="currentColor"/></svg>
<span style="left:93.6px;top:476.00px;font-size:10.28px;color:#e5e7eb;letter-spacing:-0.387px;">UPPERCLASSMAN-FRIENDS-SCHOOL-UNIFORM</span>
<span style="left:318.3px;top:475.00px;font-size:10.60px;color:#e5e7eb;letter-spacing:-0.048px;">.character-design</span>
<div style="left:0px;top:490.52px;width:329px;height:20.6px;background:#1f2937;"></div>
<svg style="left:70.52px;top:495.82px;color:#a8adb7;" width="12.16" height="11.20" viewBox="0 0 16 16" preserveAspectRatio="none"><path d="M3 2.500A1.500 1.500 0 0 1 4.500 1H9v4h4v8.500a1.500 1.500 0 0 1-1.500 1.500h-7A1.500 1.500 0 0 1 3 13.500Z M10 1l3 3h-3Z" fill="currentColor"/></svg>
<span style="left:93.6px;top:497.00px;font-size:10.28px;color:#e5e7eb;letter-spacing:-0.302px;">UPPERCLASSMAN-FRIENDS.character</span>
<svg style="left:41.84px;top:518.26px;color:#9ca3af;" width="9.63" height="9.88" viewBox="0 0 16 16" preserveAspectRatio="none"><path d="M3 5.5 L8 10.5 L13 5.5" fill="none" stroke="currentColor" stroke-width="1.8" stroke-linecap="round" stroke-linejoin="round"/></svg>
<svg style="left:57.47px;top:516.32px;color:#d1d5db;" width="11.73" height="11.83" viewBox="0 0 16 16" preserveAspectRatio="none"><path d="M1 3.200A1.200 1.200 0 0 1 2.200 2h3.500l1.500 1.600h5.300A1.200 1.200 0 0 1 13.700 4.800V6H4.300L1 12.300Z" fill="currentColor"/><path d="M4.900 6.900H16l-3 6.600H1.600Z" fill="currentColor"/></svg>
<span style="left:79.0px;top:517.00px;font-size:10.28px;color:#e5e7eb;letter-spacing:-0.251px;">YUKI-NAKAMURA-MGWYRD1G</span>
<div style="left:0px;top:531.48px;width:329px;height:20.6px;background:#1f2937;"></div>
<svg style="left:70.52px;top:536.78px;color:#a8adb7;" width="12.16" height="11.20" viewBox="0 0 16 16" preserveAspectRatio="none"><path d="M3 2.500A1.500 1.500 0 0 1 4.500 1H9v4h4v8.500a1.500 1.500 0 0 1-1.500 1.500h-7A1.500 1.500 0 0 1 3 13.500Z M10 1l3 3h-3Z" fill="currentColor"/></svg>
<span style="left:93.6px;top:538.00px;font-size:10.28px;color:#e5e7eb;letter-spacing:-0.141px;">YUKI-NAKAMURA-DEFAULT-VOICE.voice-design</span>
<svg style="left:70.52px;top:557.26px;color:#a8adb7;" width="12.16" height="11.20" viewBox="0 0 16 16" preserveAspectRatio="none"><path d="M3 2.500A1.500 1.500 0 0 1 4.500 1H9v4h4v8.500a1.500 1.500 0 0 1-1.500 1.500h-7A1.500 1.500 0 0 1 3 13.500Z M10 1l3 3h-3Z" fill="currentColor"/></svg>
<span style="left:93.6px;top:558.00px;font-size:10.28px;color:#e5e7eb;letter-spacing:-0.194px;">YUKI-NAKAMURA-SCHOOL-UNIFORM</span>
<span style="left:272.02px;top:557.00px;font-size:10.60px;color:#e5e7eb;letter-spacing:-0.048px;">.character-design</span>
<div style="left:0px;top:572.44px;width:329px;height:20.6px;background:#1f2937;"></div>
<svg style="left:70.52px;top:577.74px;color:#a8adb7;" width="12.16" height="11.20" viewBox="0 0 16 16" preserveAspectRatio="none"><path d="M3 2.500A1.500 1.500 0 0 1 4.500 1H9v4h4v8.500a1.500 1.500 0 0 1-1.500 1.500h-7A1.500 1.500 0 0 1 3 13.500Z M10 1l3 3h-3Z" fill="currentColor"/></svg>
<span style="left:93.6px;top:579.00px;font-size:10.28px;color:#e5e7eb;letter-spacing:-0.037px;">YUKI-NAKAMURA.character</span>
<svg style="left:27.24px;top:600.18px;color:#9ca3af;" width="9.63" height="9.88" viewBox="0 0 16 16" preserveAspectRatio="none"><path d="M3 5.5 L8 10.5 L13 5.5" fill="none" stroke="currentColor" stroke-width="1.8" stroke-linecap="round" stroke-linejoin="round"/></svg>
<svg style="left:42.87px;top:598.24px;color:#d1d5db;" width="11.73" height="11.83" viewBox="0 0 16 16" preserveAspectRatio="none"><path d="M1 3.200A1.200 1.200 0 0 1 2.200 2h3.500l1.500 1.600h5.300A1.200 1.200 0 0 1 13.700 4.800V6H4.300L1 12.300Z" fill="currentColor"/><path d="M4.900 6.900H16l-3 6.600H1.600Z" fill="currentColor"/></svg>
<span style="left:64.39999999999999px;top:598.00px;font-size:10.93px;color:#e5e7eb;">locations</span>
<div style="left:0px;top:613.4px;width:329px;height:20.6px;background:#1f2937;"></div>
<svg style="left:55.92px;top:618.70px;color:#a8adb7;" width="12.16" height="11.20" viewBox="0 0 16 16" preserveAspectRatio="none"><path d="M3 2.500A1.500 1.500 0 0 1 4.500 1H9v4h4v8.500a1.500 1.500 0 0 1-1.500 1.500h-7A1.500 1.500 0 0 1 3 13.500Z M10 1l3 3h-3Z" fill="currentColor"/></svg>
<span style="left:79.0px;top:620.00px;font-size:10.28px;color:#e5e7eb;letter-spacing:-0.298px;">SAKURA-HS-COURTYARD-TZZ21VXA.location</span>
<svg style="left:41.32px;top:639.18px;color:#a8adb7;" width="12.16" height="11.20" viewBox="0 0 16 16" preserveAspectRatio="none"><path d="M3 2.500A1.500 1.500 0 0 1 4.500 1H9v4h4v8.500a1.500 1.500 0 0 1-1.500 1.500h-7A1.500 1.500 0 0 1 3 13.500Z M10 1l3 3h-3Z" fill="currentColor"/></svg>
<span style="left:64.39999999999999px;top:640.00px;font-size:10.28px;color:#e5e7eb;letter-spacing:-0.178px;">CCSRL.tv-key-visual</span>
<div style="left:0px;top:654.36px;width:329px;height:20.6px;background:#1f2937;"></div>
<svg style="left:41.32px;top:659.66px;color:#a8adb7;" width="12.16" height="11.20" viewBox="0 0 16 16" preserveAspectRatio="none"><path d="M3 2.500A1.500 1.500 0 0 1 4.500 1H9v4h4v8.500a1.500 1.500 0 0 1-1.500 1.500h-7A1.500 1.500 0 0 1 3 13.500Z M10 1l3 3h-3Z" fill="currentColor"/></svg>
<span style="left:64.39999999999999px;top:661.00px;font-size:10.28px;color:#e5e7eb;letter-spacing:-0.235px;">CCSRL.tv-series</span>
<svg style="left:41.32px;top:680.14px;color:#a8adb7;" width="12.16" height="11.20" viewBox="0 0 16 16" preserveAspectRatio="none"><path d="M3 2.500A1.500 1.500 0 0 1 4.500 1H9v4h4v8.500a1.500 1.500 0 0 1-1.500 1.500h-7A1.500 1.500 0 0 1 3 13.500Z M10 1l3 3h-3Z" fill="currentColor"/></svg>
<span style="left:64.39999999999999px;top:681.00px;font-size:10.35px;color:#e5e7eb;">CCSRL.tv-series-composition</span>
</div>
<div style="left:1794px;top:77px;width:6px;height:868.5px;background:#2d3748;"></div>
<svg style="left:1794px;top:79px;" width="6" height="4" viewBox="0 0 6 4"><path d="M.5 3.500 3 .5l2.500 3Z" fill="#4b5563"/></svg>
<svg style="left:1794px;top:939px;" width="6" height="4" viewBox="0 0 6 4"><path d="M.5 .5 3 3.500l2.500-3Z" fill="#4b5563"/></svg>
<div style="left:1465px;top:945.5px;width:335px;height:6.5px;background:#2d3748;"></div>
<div style="left:1475px;top:946.8px;width:242.7px;height:4.6px;background:#4b5563;border-radius:2px;"></div>
<svg style="left:1467px;top:946px;" width="4" height="6" viewBox="0 0 4 6"><path d="M3.500 .5.5 3l3 2.500Z" fill="#4b5563"/></svg>
<svg style="left:1788px;top:946px;" width="4" height="6" viewBox="0 0 4 6"><path d="M.5 .5 3.500 3 .5 5.500Z" fill="#4b5563"/></svg>
</div></body></html>
